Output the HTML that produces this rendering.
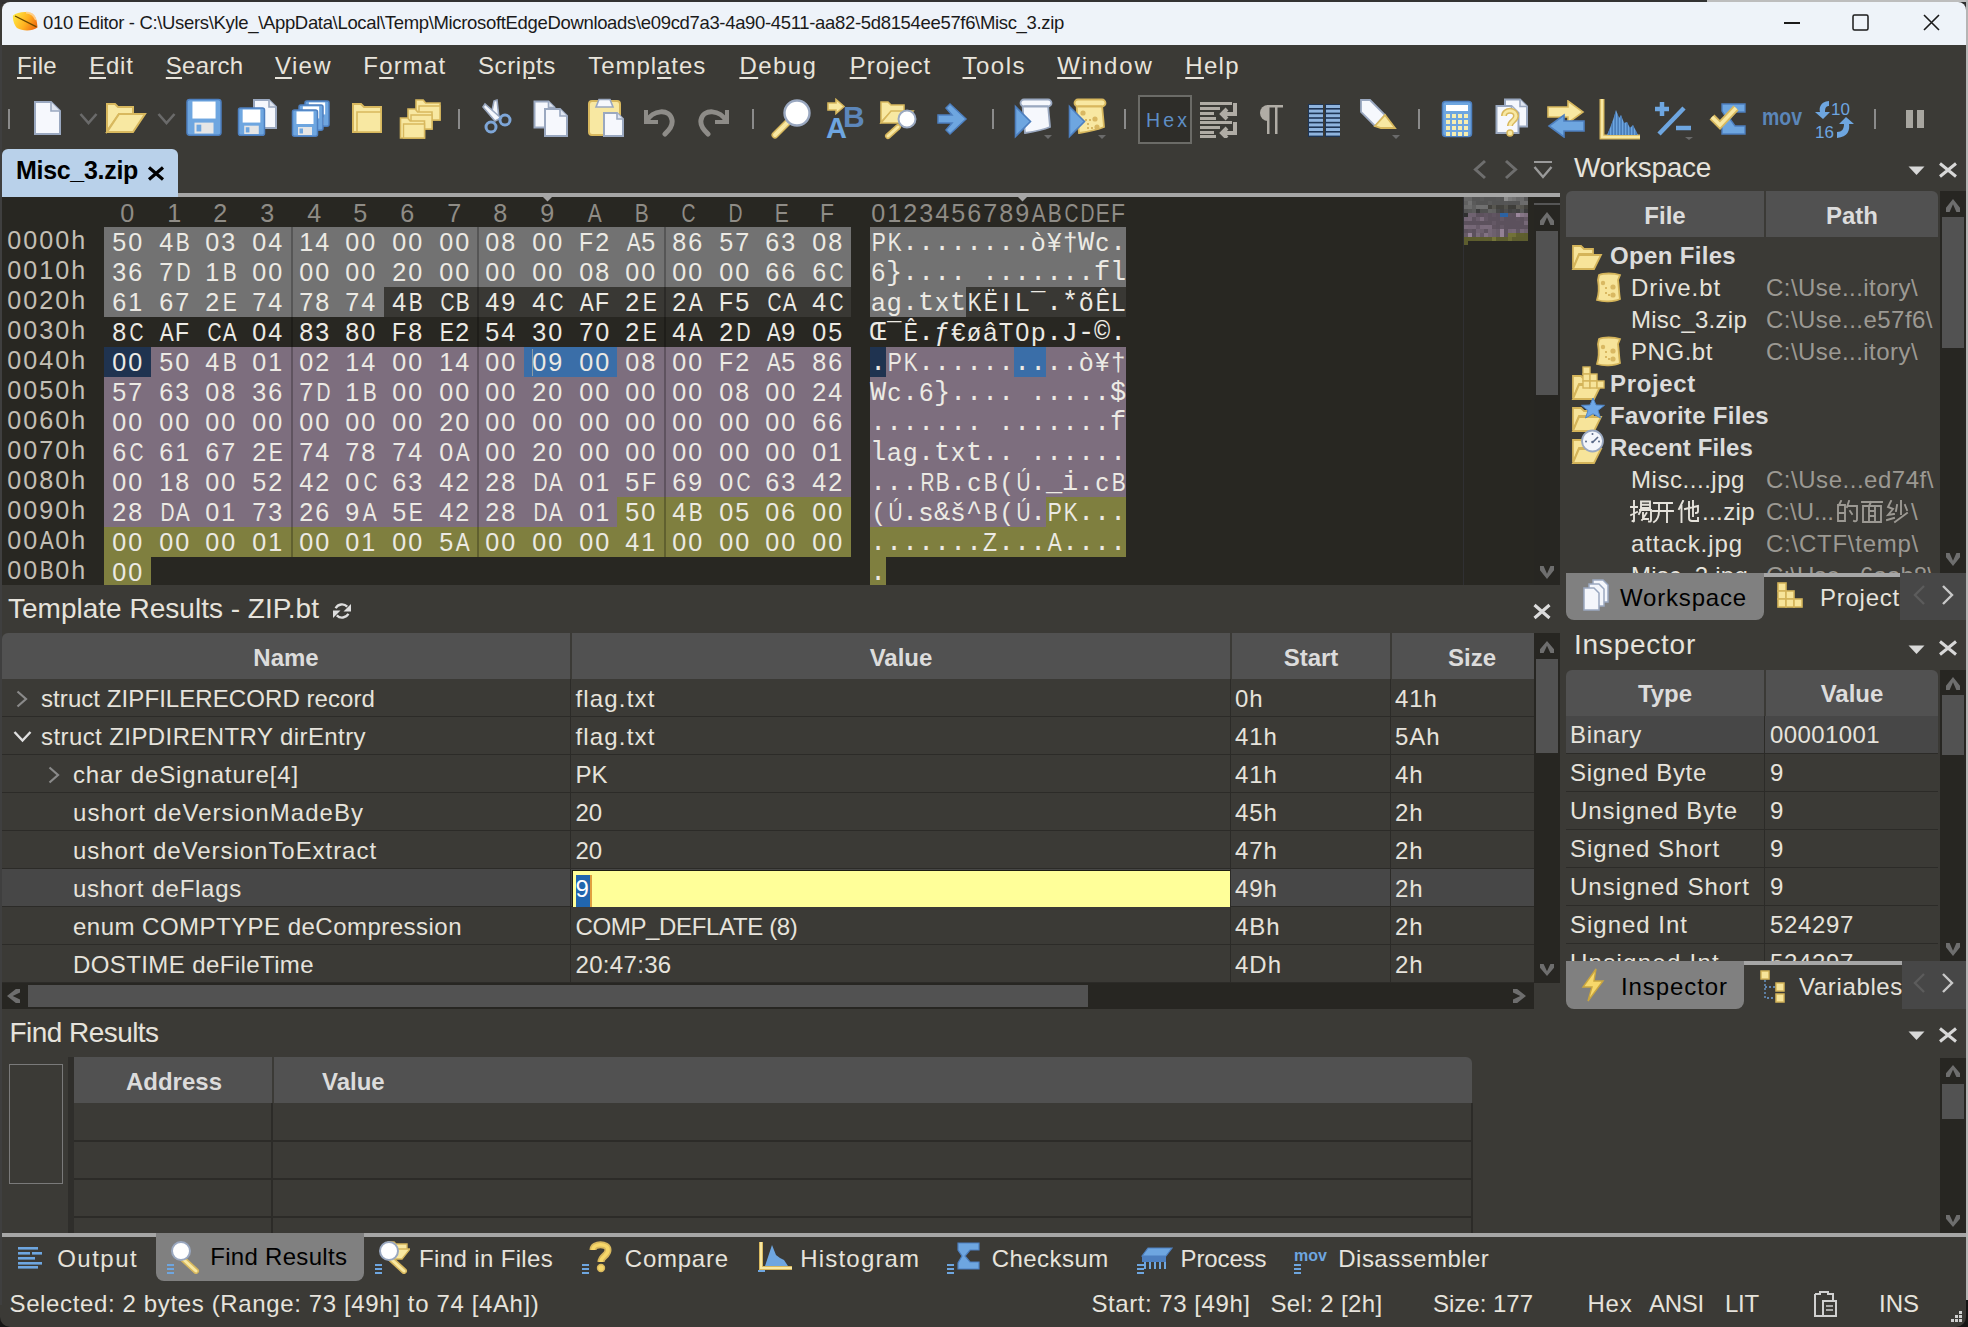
<!DOCTYPE html>
<html><head><meta charset="utf-8"><style>
html,body{margin:0;padding:0;}
body{width:1968px;height:1327px;position:relative;overflow:hidden;background:#2e2e2e;font-family:'Liberation Sans', sans-serif;}
u{text-decoration:underline;text-decoration-thickness:2px;text-underline-offset:3px;}
</style></head><body>
<div style="position:absolute;left:0px;top:0px;width:1707px;height:2px;background:#333333;"></div>
<div style="position:absolute;left:1707px;top:0px;width:261px;height:2px;background:#bdbdbd;"></div>
<div style="position:absolute;left:1966px;top:0px;width:2px;height:1327px;background:#b5b5b5;"></div>
<div style="position:absolute;left:0px;top:0px;width:2px;height:45px;background:#333333;"></div>
<div style="position:absolute;left:0px;top:1290px;width:30px;height:37px;background:#151515;"></div>
<div style="position:absolute;left:1940px;top:1300px;width:28px;height:27px;background:#151515;"></div>
<div style="position:absolute;left:0px;top:2px;width:1966px;height:1325px;background:#3b3a36;border-radius:8px 8px 10px 10px;"></div>
<div style="position:absolute;left:0px;top:45px;width:2px;height:1260px;background:#3f3f3f;"></div>
<div style="position:absolute;left:2px;top:2px;width:1964px;height:43px;background:#eef3f9;border-radius:8px 8px 0 0;"></div>
<svg style="position:absolute;left:12px;top:11px;" width="27" height="22" viewBox="0 0 27 22"><defs><linearGradient id="lg1" x1="0" y1="0.3" x2="1" y2="0.7"><stop offset="0" stop-color="#ffe640"/><stop offset="0.55" stop-color="#ffb020"/><stop offset="1" stop-color="#f06a10"/></linearGradient></defs><path d="M1,4.5 C5,1 15,0 20,2.5 C24,5 25,10 25.5,16.5 C20,20.5 10,20 5,17 C2,14 0.5,8 1,4.5 Z" fill="url(#lg1)"/><path d="M14,1.5 C18,1.5 22,4 24,9" stroke="#ffd8a0" stroke-width="2" fill="none" opacity="0.8"/><path d="M3,5 L24.5,15.8" stroke="#6a4800" stroke-width="1.3"/></svg>
<div id="t0" style="position:absolute;left:43.00px;top:13.78px;font:400 18.5px/1 'Liberation Sans', sans-serif;color:#1a1a1a;white-space:pre;letter-spacing:-0.333px;">010 Editor - C:\Users\Kyle_\AppData\Local\Temp\MicrosoftEdgeDownloads\e09cd7a3-4a90-4511-aa82-5d8154ee57f6\Misc_3.zip</div>
<div style="position:absolute;left:1784px;top:22px;width:16px;height:1.5px;background:#1a1a1a;"></div>
<svg style="position:absolute;left:1852px;top:14px;" width="17" height="17" viewBox="0 0 17 17"><rect x="1" y="1" width="15" height="15" rx="1.5" fill="none" stroke="#1a1a1a" stroke-width="1.5"/></svg>
<svg style="position:absolute;left:1923px;top:14px;" width="17" height="17" viewBox="0 0 17 17"><path d="M1,1 L16,16 M16,1 L1,16" stroke="#1a1a1a" stroke-width="1.6"/></svg>
<div id="t1" style="position:absolute;left:17.00px;top:53.60px;font:400 24px/1 'Liberation Sans', sans-serif;color:#e8e4dc;white-space:pre;letter-spacing:0.328px;"><u>F</u>ile</div>
<div id="t2" style="position:absolute;left:89.20px;top:53.60px;font:400 24px/1 'Liberation Sans', sans-serif;color:#e8e4dc;white-space:pre;letter-spacing:0.781px;"><u>E</u>dit</div>
<div id="t3" style="position:absolute;left:165.80px;top:53.60px;font:400 24px/1 'Liberation Sans', sans-serif;color:#e8e4dc;white-space:pre;letter-spacing:0.240px;"><u>S</u>earch</div>
<div id="t4" style="position:absolute;left:275.00px;top:53.60px;font:400 24px/1 'Liberation Sans', sans-serif;color:#e8e4dc;white-space:pre;letter-spacing:1.352px;"><u>V</u>iew</div>
<div id="t5" style="position:absolute;left:363.30px;top:53.60px;font:400 24px/1 'Liberation Sans', sans-serif;color:#e8e4dc;white-space:pre;letter-spacing:1.161px;">F<u>o</u>rmat</div>
<div id="t6" style="position:absolute;left:477.90px;top:53.60px;font:400 24px/1 'Liberation Sans', sans-serif;color:#e8e4dc;white-space:pre;letter-spacing:0.661px;">Scri<u>p</u>ts</div>
<div id="t7" style="position:absolute;left:588.20px;top:53.60px;font:400 24px/1 'Liberation Sans', sans-serif;color:#e8e4dc;white-space:pre;letter-spacing:0.955px;">Templ<u>a</u>tes</div>
<div id="t8" style="position:absolute;left:739.40px;top:53.60px;font:400 24px/1 'Liberation Sans', sans-serif;color:#e8e4dc;white-space:pre;letter-spacing:1.453px;"><u>D</u>ebug</div>
<div id="t9" style="position:absolute;left:849.70px;top:53.60px;font:400 24px/1 'Liberation Sans', sans-serif;color:#e8e4dc;white-space:pre;letter-spacing:0.971px;"><u>P</u>roject</div>
<div id="t10" style="position:absolute;left:962.50px;top:53.60px;font:400 24px/1 'Liberation Sans', sans-serif;color:#e8e4dc;white-space:pre;letter-spacing:1.494px;"><u>T</u>ools</div>
<div id="t11" style="position:absolute;left:1057.20px;top:53.60px;font:400 24px/1 'Liberation Sans', sans-serif;color:#e8e4dc;white-space:pre;letter-spacing:1.854px;"><u>W</u>indow</div>
<div id="t12" style="position:absolute;left:1185.30px;top:53.60px;font:400 24px/1 'Liberation Sans', sans-serif;color:#e8e4dc;white-space:pre;letter-spacing:1.281px;"><u>H</u>elp</div>
<div style="position:absolute;left:178px;top:193px;width:1382px;height:4px;background:#a6a6a6;"></div>
<div style="position:absolute;left:2px;top:149px;width:176px;height:48px;background:#b9d1ea;border-radius:6px 6px 0 0;"></div>
<div id="t13" style="position:absolute;left:16.00px;top:158.35px;font:700 25px/1 'Liberation Sans', sans-serif;color:#000;white-space:pre;letter-spacing:-0.306px;">Misc_3.zip</div>
<svg style="position:absolute;left:147px;top:166px;" width="18" height="15" viewBox="0 0 18 15"><path d="M2,1.5 L16,13.5 M16,1.5 L2,13.5" stroke="#000" stroke-width="3.2"/></svg>
<svg style="position:absolute;left:1472px;top:159px;" width="16" height="21" viewBox="0 0 16 21"><path d="M13,2 L3.5,10.5 L13,19" fill="none" stroke="#6e6e6e" stroke-width="3"/></svg>
<svg style="position:absolute;left:1503px;top:159px;" width="16" height="21" viewBox="0 0 16 21"><path d="M3,2 L12.5,10.5 L3,19" fill="none" stroke="#6e6e6e" stroke-width="3"/></svg>
<svg style="position:absolute;left:1533px;top:159px;" width="20" height="22" viewBox="0 0 20 22"><path d="M1,3 H19" stroke="#9a9a9a" stroke-width="2"/><path d="M1.5,8 L10,18 L18.5,8" fill="none" stroke="#9a9a9a" stroke-width="2.4"/></svg>
<div style="position:absolute;left:2px;top:197px;width:1532px;height:388px;background:#282722;"></div>
<div style="position:absolute;left:1534px;top:197px;width:26px;height:388px;background:#272622;"></div>
<div style="position:absolute;left:104px;top:227px;width:747px;height:30px;background:#727272;"></div>
<div style="position:absolute;left:870px;top:227px;width:256px;height:30px;background:#727272;"></div>
<div style="position:absolute;left:104px;top:257px;width:747px;height:30px;background:#727272;"></div>
<div style="position:absolute;left:870px;top:257px;width:256px;height:30px;background:#727272;"></div>
<div style="position:absolute;left:104px;top:287px;width:280px;height:30px;background:#727272;"></div>
<div style="position:absolute;left:870px;top:287px;width:96px;height:30px;background:#727272;"></div>
<div style="position:absolute;left:384px;top:287px;width:467px;height:30px;background:#393834;"></div>
<div style="position:absolute;left:966px;top:287px;width:160px;height:30px;background:#393834;"></div>
<div style="position:absolute;left:104px;top:347px;width:47px;height:30px;background:#1f3350;"></div>
<div style="position:absolute;left:870px;top:347px;width:16px;height:30px;background:#1f3350;"></div>
<div style="position:absolute;left:151px;top:347px;width:373px;height:30px;background:#7d6e7e;"></div>
<div style="position:absolute;left:886px;top:347px;width:128px;height:30px;background:#7d6e7e;"></div>
<div style="position:absolute;left:524px;top:347px;width:93px;height:30px;background:#3a6ea8;"></div>
<div style="position:absolute;left:1014px;top:347px;width:32px;height:30px;background:#3a6ea8;"></div>
<div style="position:absolute;left:617px;top:347px;width:234px;height:30px;background:#7d6e7e;"></div>
<div style="position:absolute;left:1046px;top:347px;width:80px;height:30px;background:#7d6e7e;"></div>
<div style="position:absolute;left:104px;top:377px;width:747px;height:30px;background:#7d6e7e;"></div>
<div style="position:absolute;left:870px;top:377px;width:256px;height:30px;background:#7d6e7e;"></div>
<div style="position:absolute;left:104px;top:407px;width:747px;height:30px;background:#7d6e7e;"></div>
<div style="position:absolute;left:870px;top:407px;width:256px;height:30px;background:#7d6e7e;"></div>
<div style="position:absolute;left:104px;top:437px;width:747px;height:30px;background:#7d6e7e;"></div>
<div style="position:absolute;left:870px;top:437px;width:256px;height:30px;background:#7d6e7e;"></div>
<div style="position:absolute;left:104px;top:467px;width:747px;height:30px;background:#7d6e7e;"></div>
<div style="position:absolute;left:870px;top:467px;width:256px;height:30px;background:#7d6e7e;"></div>
<div style="position:absolute;left:104px;top:497px;width:513px;height:30px;background:#7d6e7e;"></div>
<div style="position:absolute;left:870px;top:497px;width:176px;height:30px;background:#7d6e7e;"></div>
<div style="position:absolute;left:617px;top:497px;width:234px;height:30px;background:#7f7f3f;"></div>
<div style="position:absolute;left:1046px;top:497px;width:80px;height:30px;background:#7f7f3f;"></div>
<div style="position:absolute;left:104px;top:527px;width:747px;height:30px;background:#7f7f3f;"></div>
<div style="position:absolute;left:870px;top:527px;width:256px;height:30px;background:#7f7f3f;"></div>
<div style="position:absolute;left:104px;top:557px;width:47px;height:28px;background:#7f7f3f;"></div>
<div style="position:absolute;left:870px;top:557px;width:16px;height:28px;background:#7f7f3f;"></div>
<div style="position:absolute;left:290.5px;top:227px;width:2px;height:330px;background:rgba(0,0,0,0.24);"></div>
<div style="position:absolute;left:476.5px;top:227px;width:2px;height:330px;background:rgba(0,0,0,0.24);"></div>
<div style="position:absolute;left:663.5px;top:227px;width:2px;height:330px;background:rgba(0,0,0,0.24);"></div>
<div style="position:absolute;left:532px;top:349px;width:1.3px;height:27px;background:#8d9ba3;"></div>
<div style="position:absolute;left:119.33px;top:199.90px;font:400 26px/1 'Liberation Sans', sans-serif;color:#8f8c86;white-space:pre"><span style="display:inline-block;width:16px;text-align:center"><span style="display:inline-block;transform:scaleX(0.968)">0</span></span></div>
<div style="position:absolute;left:166.00px;top:199.90px;font:400 26px/1 'Liberation Sans', sans-serif;color:#8f8c86;white-space:pre"><span style="display:inline-block;width:16px;text-align:center"><span style="display:inline-block;transform:scaleX(0.968)">1</span></span></div>
<div style="position:absolute;left:212.67px;top:199.90px;font:400 26px/1 'Liberation Sans', sans-serif;color:#8f8c86;white-space:pre"><span style="display:inline-block;width:16px;text-align:center"><span style="display:inline-block;transform:scaleX(0.968)">2</span></span></div>
<div style="position:absolute;left:259.34px;top:199.90px;font:400 26px/1 'Liberation Sans', sans-serif;color:#8f8c86;white-space:pre"><span style="display:inline-block;width:16px;text-align:center"><span style="display:inline-block;transform:scaleX(0.968)">3</span></span></div>
<div style="position:absolute;left:306.01px;top:199.90px;font:400 26px/1 'Liberation Sans', sans-serif;color:#8f8c86;white-space:pre"><span style="display:inline-block;width:16px;text-align:center"><span style="display:inline-block;transform:scaleX(0.968)">4</span></span></div>
<div style="position:absolute;left:352.68px;top:199.90px;font:400 26px/1 'Liberation Sans', sans-serif;color:#8f8c86;white-space:pre"><span style="display:inline-block;width:16px;text-align:center"><span style="display:inline-block;transform:scaleX(0.968)">5</span></span></div>
<div style="position:absolute;left:399.35px;top:199.90px;font:400 26px/1 'Liberation Sans', sans-serif;color:#8f8c86;white-space:pre"><span style="display:inline-block;width:16px;text-align:center"><span style="display:inline-block;transform:scaleX(0.968)">6</span></span></div>
<div style="position:absolute;left:446.02px;top:199.90px;font:400 26px/1 'Liberation Sans', sans-serif;color:#8f8c86;white-space:pre"><span style="display:inline-block;width:16px;text-align:center"><span style="display:inline-block;transform:scaleX(0.968)">7</span></span></div>
<div style="position:absolute;left:492.69px;top:199.90px;font:400 26px/1 'Liberation Sans', sans-serif;color:#8f8c86;white-space:pre"><span style="display:inline-block;width:16px;text-align:center"><span style="display:inline-block;transform:scaleX(0.968)">8</span></span></div>
<div style="position:absolute;left:539.36px;top:199.90px;font:400 26px/1 'Liberation Sans', sans-serif;color:#8f8c86;white-space:pre"><span style="display:inline-block;width:16px;text-align:center"><span style="display:inline-block;transform:scaleX(0.968)">9</span></span></div>
<div style="position:absolute;left:586.03px;top:199.90px;font:400 26px/1 'Liberation Sans', sans-serif;color:#8f8c86;white-space:pre"><span style="display:inline-block;width:16px;text-align:center"><span style="display:inline-block;transform:scaleX(0.807)">A</span></span></div>
<div style="position:absolute;left:632.70px;top:199.90px;font:400 26px/1 'Liberation Sans', sans-serif;color:#8f8c86;white-space:pre"><span style="display:inline-block;width:16px;text-align:center"><span style="display:inline-block;transform:scaleX(0.807)">B</span></span></div>
<div style="position:absolute;left:679.37px;top:199.90px;font:400 26px/1 'Liberation Sans', sans-serif;color:#8f8c86;white-space:pre"><span style="display:inline-block;width:16px;text-align:center"><span style="display:inline-block;transform:scaleX(0.745)">C</span></span></div>
<div style="position:absolute;left:726.04px;top:199.90px;font:400 26px/1 'Liberation Sans', sans-serif;color:#8f8c86;white-space:pre"><span style="display:inline-block;width:16px;text-align:center"><span style="display:inline-block;transform:scaleX(0.745)">D</span></span></div>
<div style="position:absolute;left:772.71px;top:199.90px;font:400 26px/1 'Liberation Sans', sans-serif;color:#8f8c86;white-space:pre"><span style="display:inline-block;width:16px;text-align:center"><span style="display:inline-block;transform:scaleX(0.807)">E</span></span></div>
<div style="position:absolute;left:819.38px;top:199.90px;font:400 26px/1 'Liberation Sans', sans-serif;color:#8f8c86;white-space:pre"><span style="display:inline-block;width:16px;text-align:center"><span style="display:inline-block;transform:scaleX(0.881)">F</span></span></div>
<div style="position:absolute;left:870.00px;top:199.90px;font:400 26px/1 'Liberation Sans', sans-serif;color:#8f8c86;white-space:pre"><span style="display:inline-block;width:16px;text-align:center"><span style="display:inline-block;transform:scaleX(0.968)">0</span></span><span style="display:inline-block;width:16px;text-align:center"><span style="display:inline-block;transform:scaleX(0.968)">1</span></span><span style="display:inline-block;width:16px;text-align:center"><span style="display:inline-block;transform:scaleX(0.968)">2</span></span><span style="display:inline-block;width:16px;text-align:center"><span style="display:inline-block;transform:scaleX(0.968)">3</span></span><span style="display:inline-block;width:16px;text-align:center"><span style="display:inline-block;transform:scaleX(0.968)">4</span></span><span style="display:inline-block;width:16px;text-align:center"><span style="display:inline-block;transform:scaleX(0.968)">5</span></span><span style="display:inline-block;width:16px;text-align:center"><span style="display:inline-block;transform:scaleX(0.968)">6</span></span><span style="display:inline-block;width:16px;text-align:center"><span style="display:inline-block;transform:scaleX(0.968)">7</span></span><span style="display:inline-block;width:16px;text-align:center"><span style="display:inline-block;transform:scaleX(0.968)">8</span></span><span style="display:inline-block;width:16px;text-align:center"><span style="display:inline-block;transform:scaleX(0.968)">9</span></span><span style="display:inline-block;width:16px;text-align:center"><span style="display:inline-block;transform:scaleX(0.807)">A</span></span><span style="display:inline-block;width:16px;text-align:center"><span style="display:inline-block;transform:scaleX(0.807)">B</span></span><span style="display:inline-block;width:16px;text-align:center"><span style="display:inline-block;transform:scaleX(0.745)">C</span></span><span style="display:inline-block;width:16px;text-align:center"><span style="display:inline-block;transform:scaleX(0.745)">D</span></span><span style="display:inline-block;width:16px;text-align:center"><span style="display:inline-block;transform:scaleX(0.807)">E</span></span><span style="display:inline-block;width:16px;text-align:center"><span style="display:inline-block;transform:scaleX(0.881)">F</span></span></div>
<svg style="position:absolute;left:542px;top:196px;" width="11" height="6" viewBox="0 0 11 6"><path d="M0,0 H11 L5.5,5.5 Z" fill="#a6a6a6"/></svg>
<svg style="position:absolute;left:1016.5px;top:196px;" width="11" height="6" viewBox="0 0 11 6"><path d="M0,0 H11 L5.5,5.5 Z" fill="#a6a6a6"/></svg>
<div style="position:absolute;left:6.20px;top:226.90px;font:400 26px/1 'Liberation Sans', sans-serif;color:#c3bfb5;white-space:pre"><span style="display:inline-block;width:16px;text-align:center"><span style="display:inline-block;transform:scaleX(0.968)">0</span></span><span style="display:inline-block;width:16px;text-align:center"><span style="display:inline-block;transform:scaleX(0.968)">0</span></span><span style="display:inline-block;width:16px;text-align:center"><span style="display:inline-block;transform:scaleX(0.968)">0</span></span><span style="display:inline-block;width:16px;text-align:center"><span style="display:inline-block;transform:scaleX(0.968)">0</span></span><span style="display:inline-block;width:16px;text-align:center"><span style="display:inline-block;transform:scaleX(0.968)">h</span></span></div>
<div style="position:absolute;left:111.30px;top:228.90px;font:400 26px/1 'Liberation Sans', sans-serif;color:#eceae4;white-space:pre"><span style="display:inline-block;width:16px;text-align:center"><span style="display:inline-block;transform:scaleX(0.968)">5</span></span><span style="display:inline-block;width:16px;text-align:center"><span style="display:inline-block;transform:scaleX(0.968)">0</span></span></div>
<div style="position:absolute;left:157.97px;top:228.90px;font:400 26px/1 'Liberation Sans', sans-serif;color:#eceae4;white-space:pre"><span style="display:inline-block;width:16px;text-align:center"><span style="display:inline-block;transform:scaleX(0.968)">4</span></span><span style="display:inline-block;width:16px;text-align:center"><span style="display:inline-block;transform:scaleX(0.807)">B</span></span></div>
<div style="position:absolute;left:204.64px;top:228.90px;font:400 26px/1 'Liberation Sans', sans-serif;color:#eceae4;white-space:pre"><span style="display:inline-block;width:16px;text-align:center"><span style="display:inline-block;transform:scaleX(0.968)">0</span></span><span style="display:inline-block;width:16px;text-align:center"><span style="display:inline-block;transform:scaleX(0.968)">3</span></span></div>
<div style="position:absolute;left:251.31px;top:228.90px;font:400 26px/1 'Liberation Sans', sans-serif;color:#eceae4;white-space:pre"><span style="display:inline-block;width:16px;text-align:center"><span style="display:inline-block;transform:scaleX(0.968)">0</span></span><span style="display:inline-block;width:16px;text-align:center"><span style="display:inline-block;transform:scaleX(0.968)">4</span></span></div>
<div style="position:absolute;left:297.98px;top:228.90px;font:400 26px/1 'Liberation Sans', sans-serif;color:#eceae4;white-space:pre"><span style="display:inline-block;width:16px;text-align:center"><span style="display:inline-block;transform:scaleX(0.968)">1</span></span><span style="display:inline-block;width:16px;text-align:center"><span style="display:inline-block;transform:scaleX(0.968)">4</span></span></div>
<div style="position:absolute;left:344.65px;top:228.90px;font:400 26px/1 'Liberation Sans', sans-serif;color:#eceae4;white-space:pre"><span style="display:inline-block;width:16px;text-align:center"><span style="display:inline-block;transform:scaleX(0.968)">0</span></span><span style="display:inline-block;width:16px;text-align:center"><span style="display:inline-block;transform:scaleX(0.968)">0</span></span></div>
<div style="position:absolute;left:391.32px;top:228.90px;font:400 26px/1 'Liberation Sans', sans-serif;color:#eceae4;white-space:pre"><span style="display:inline-block;width:16px;text-align:center"><span style="display:inline-block;transform:scaleX(0.968)">0</span></span><span style="display:inline-block;width:16px;text-align:center"><span style="display:inline-block;transform:scaleX(0.968)">0</span></span></div>
<div style="position:absolute;left:437.99px;top:228.90px;font:400 26px/1 'Liberation Sans', sans-serif;color:#eceae4;white-space:pre"><span style="display:inline-block;width:16px;text-align:center"><span style="display:inline-block;transform:scaleX(0.968)">0</span></span><span style="display:inline-block;width:16px;text-align:center"><span style="display:inline-block;transform:scaleX(0.968)">0</span></span></div>
<div style="position:absolute;left:484.66px;top:228.90px;font:400 26px/1 'Liberation Sans', sans-serif;color:#eceae4;white-space:pre"><span style="display:inline-block;width:16px;text-align:center"><span style="display:inline-block;transform:scaleX(0.968)">0</span></span><span style="display:inline-block;width:16px;text-align:center"><span style="display:inline-block;transform:scaleX(0.968)">8</span></span></div>
<div style="position:absolute;left:531.33px;top:228.90px;font:400 26px/1 'Liberation Sans', sans-serif;color:#eceae4;white-space:pre"><span style="display:inline-block;width:16px;text-align:center"><span style="display:inline-block;transform:scaleX(0.968)">0</span></span><span style="display:inline-block;width:16px;text-align:center"><span style="display:inline-block;transform:scaleX(0.968)">0</span></span></div>
<div style="position:absolute;left:578.00px;top:228.90px;font:400 26px/1 'Liberation Sans', sans-serif;color:#eceae4;white-space:pre"><span style="display:inline-block;width:16px;text-align:center"><span style="display:inline-block;transform:scaleX(0.881)">F</span></span><span style="display:inline-block;width:16px;text-align:center"><span style="display:inline-block;transform:scaleX(0.968)">2</span></span></div>
<div style="position:absolute;left:624.67px;top:228.90px;font:400 26px/1 'Liberation Sans', sans-serif;color:#eceae4;white-space:pre"><span style="display:inline-block;width:16px;text-align:center"><span style="display:inline-block;transform:scaleX(0.807)">A</span></span><span style="display:inline-block;width:16px;text-align:center"><span style="display:inline-block;transform:scaleX(0.968)">5</span></span></div>
<div style="position:absolute;left:671.34px;top:228.90px;font:400 26px/1 'Liberation Sans', sans-serif;color:#eceae4;white-space:pre"><span style="display:inline-block;width:16px;text-align:center"><span style="display:inline-block;transform:scaleX(0.968)">8</span></span><span style="display:inline-block;width:16px;text-align:center"><span style="display:inline-block;transform:scaleX(0.968)">6</span></span></div>
<div style="position:absolute;left:718.01px;top:228.90px;font:400 26px/1 'Liberation Sans', sans-serif;color:#eceae4;white-space:pre"><span style="display:inline-block;width:16px;text-align:center"><span style="display:inline-block;transform:scaleX(0.968)">5</span></span><span style="display:inline-block;width:16px;text-align:center"><span style="display:inline-block;transform:scaleX(0.968)">7</span></span></div>
<div style="position:absolute;left:764.68px;top:228.90px;font:400 26px/1 'Liberation Sans', sans-serif;color:#eceae4;white-space:pre"><span style="display:inline-block;width:16px;text-align:center"><span style="display:inline-block;transform:scaleX(0.968)">6</span></span><span style="display:inline-block;width:16px;text-align:center"><span style="display:inline-block;transform:scaleX(0.968)">3</span></span></div>
<div style="position:absolute;left:811.35px;top:228.90px;font:400 26px/1 'Liberation Sans', sans-serif;color:#eceae4;white-space:pre"><span style="display:inline-block;width:16px;text-align:center"><span style="display:inline-block;transform:scaleX(0.968)">0</span></span><span style="display:inline-block;width:16px;text-align:center"><span style="display:inline-block;transform:scaleX(0.968)">8</span></span></div>
<div style="position:absolute;left:870.00px;top:228.90px;font:400 26px/1 'Liberation Sans', sans-serif;color:#eceae4;white-space:pre"><span style="display:inline-block;width:16px;text-align:center"><span style="display:inline-block;transform:scaleX(0.807)">P</span></span><span style="display:inline-block;width:16px;text-align:center"><span style="display:inline-block;transform:scaleX(0.807)">K</span></span><span style="display:inline-block;width:16px;text-align:center;font:400 27px/1 'Liberation Mono', monospace;vertical-align:top;position:relative;top:1.58px">.</span><span style="display:inline-block;width:16px;text-align:center;font:400 27px/1 'Liberation Mono', monospace;vertical-align:top;position:relative;top:1.58px">.</span><span style="display:inline-block;width:16px;text-align:center;font:400 27px/1 'Liberation Mono', monospace;vertical-align:top;position:relative;top:1.58px">.</span><span style="display:inline-block;width:16px;text-align:center;font:400 27px/1 'Liberation Mono', monospace;vertical-align:top;position:relative;top:1.58px">.</span><span style="display:inline-block;width:16px;text-align:center;font:400 27px/1 'Liberation Mono', monospace;vertical-align:top;position:relative;top:1.58px">.</span><span style="display:inline-block;width:16px;text-align:center;font:400 27px/1 'Liberation Mono', monospace;vertical-align:top;position:relative;top:1.58px">.</span><span style="display:inline-block;width:16px;text-align:center;font:400 27px/1 'Liberation Mono', monospace;vertical-align:top;position:relative;top:1.58px">.</span><span style="display:inline-block;width:16px;text-align:center;font:400 27px/1 'Liberation Mono', monospace;vertical-align:top;position:relative;top:1.58px">.</span><span style="display:inline-block;width:16px;text-align:center"><span style="display:inline-block;transform:scaleX(0.968)">ò</span></span><span style="display:inline-block;width:16px;text-align:center"><span style="display:inline-block;transform:scaleX(0.968)">¥</span></span><span style="display:inline-block;width:16px;text-align:center"><span style="display:inline-block;transform:scaleX(0.968)">†</span></span><span style="display:inline-block;width:16px;text-align:center;font:400 27px/1 'Liberation Mono', monospace;vertical-align:top;position:relative;top:1.58px">W</span><span style="display:inline-block;width:16px;text-align:center">c</span><span style="display:inline-block;width:16px;text-align:center;font:400 27px/1 'Liberation Mono', monospace;vertical-align:top;position:relative;top:1.58px">.</span></div>
<div style="position:absolute;left:6.20px;top:256.90px;font:400 26px/1 'Liberation Sans', sans-serif;color:#c3bfb5;white-space:pre"><span style="display:inline-block;width:16px;text-align:center"><span style="display:inline-block;transform:scaleX(0.968)">0</span></span><span style="display:inline-block;width:16px;text-align:center"><span style="display:inline-block;transform:scaleX(0.968)">0</span></span><span style="display:inline-block;width:16px;text-align:center"><span style="display:inline-block;transform:scaleX(0.968)">1</span></span><span style="display:inline-block;width:16px;text-align:center"><span style="display:inline-block;transform:scaleX(0.968)">0</span></span><span style="display:inline-block;width:16px;text-align:center"><span style="display:inline-block;transform:scaleX(0.968)">h</span></span></div>
<div style="position:absolute;left:111.30px;top:258.90px;font:400 26px/1 'Liberation Sans', sans-serif;color:#eceae4;white-space:pre"><span style="display:inline-block;width:16px;text-align:center"><span style="display:inline-block;transform:scaleX(0.968)">3</span></span><span style="display:inline-block;width:16px;text-align:center"><span style="display:inline-block;transform:scaleX(0.968)">6</span></span></div>
<div style="position:absolute;left:157.97px;top:258.90px;font:400 26px/1 'Liberation Sans', sans-serif;color:#eceae4;white-space:pre"><span style="display:inline-block;width:16px;text-align:center"><span style="display:inline-block;transform:scaleX(0.968)">7</span></span><span style="display:inline-block;width:16px;text-align:center"><span style="display:inline-block;transform:scaleX(0.745)">D</span></span></div>
<div style="position:absolute;left:204.64px;top:258.90px;font:400 26px/1 'Liberation Sans', sans-serif;color:#eceae4;white-space:pre"><span style="display:inline-block;width:16px;text-align:center"><span style="display:inline-block;transform:scaleX(0.968)">1</span></span><span style="display:inline-block;width:16px;text-align:center"><span style="display:inline-block;transform:scaleX(0.807)">B</span></span></div>
<div style="position:absolute;left:251.31px;top:258.90px;font:400 26px/1 'Liberation Sans', sans-serif;color:#eceae4;white-space:pre"><span style="display:inline-block;width:16px;text-align:center"><span style="display:inline-block;transform:scaleX(0.968)">0</span></span><span style="display:inline-block;width:16px;text-align:center"><span style="display:inline-block;transform:scaleX(0.968)">0</span></span></div>
<div style="position:absolute;left:297.98px;top:258.90px;font:400 26px/1 'Liberation Sans', sans-serif;color:#eceae4;white-space:pre"><span style="display:inline-block;width:16px;text-align:center"><span style="display:inline-block;transform:scaleX(0.968)">0</span></span><span style="display:inline-block;width:16px;text-align:center"><span style="display:inline-block;transform:scaleX(0.968)">0</span></span></div>
<div style="position:absolute;left:344.65px;top:258.90px;font:400 26px/1 'Liberation Sans', sans-serif;color:#eceae4;white-space:pre"><span style="display:inline-block;width:16px;text-align:center"><span style="display:inline-block;transform:scaleX(0.968)">0</span></span><span style="display:inline-block;width:16px;text-align:center"><span style="display:inline-block;transform:scaleX(0.968)">0</span></span></div>
<div style="position:absolute;left:391.32px;top:258.90px;font:400 26px/1 'Liberation Sans', sans-serif;color:#eceae4;white-space:pre"><span style="display:inline-block;width:16px;text-align:center"><span style="display:inline-block;transform:scaleX(0.968)">2</span></span><span style="display:inline-block;width:16px;text-align:center"><span style="display:inline-block;transform:scaleX(0.968)">0</span></span></div>
<div style="position:absolute;left:437.99px;top:258.90px;font:400 26px/1 'Liberation Sans', sans-serif;color:#eceae4;white-space:pre"><span style="display:inline-block;width:16px;text-align:center"><span style="display:inline-block;transform:scaleX(0.968)">0</span></span><span style="display:inline-block;width:16px;text-align:center"><span style="display:inline-block;transform:scaleX(0.968)">0</span></span></div>
<div style="position:absolute;left:484.66px;top:258.90px;font:400 26px/1 'Liberation Sans', sans-serif;color:#eceae4;white-space:pre"><span style="display:inline-block;width:16px;text-align:center"><span style="display:inline-block;transform:scaleX(0.968)">0</span></span><span style="display:inline-block;width:16px;text-align:center"><span style="display:inline-block;transform:scaleX(0.968)">0</span></span></div>
<div style="position:absolute;left:531.33px;top:258.90px;font:400 26px/1 'Liberation Sans', sans-serif;color:#eceae4;white-space:pre"><span style="display:inline-block;width:16px;text-align:center"><span style="display:inline-block;transform:scaleX(0.968)">0</span></span><span style="display:inline-block;width:16px;text-align:center"><span style="display:inline-block;transform:scaleX(0.968)">0</span></span></div>
<div style="position:absolute;left:578.00px;top:258.90px;font:400 26px/1 'Liberation Sans', sans-serif;color:#eceae4;white-space:pre"><span style="display:inline-block;width:16px;text-align:center"><span style="display:inline-block;transform:scaleX(0.968)">0</span></span><span style="display:inline-block;width:16px;text-align:center"><span style="display:inline-block;transform:scaleX(0.968)">8</span></span></div>
<div style="position:absolute;left:624.67px;top:258.90px;font:400 26px/1 'Liberation Sans', sans-serif;color:#eceae4;white-space:pre"><span style="display:inline-block;width:16px;text-align:center"><span style="display:inline-block;transform:scaleX(0.968)">0</span></span><span style="display:inline-block;width:16px;text-align:center"><span style="display:inline-block;transform:scaleX(0.968)">0</span></span></div>
<div style="position:absolute;left:671.34px;top:258.90px;font:400 26px/1 'Liberation Sans', sans-serif;color:#eceae4;white-space:pre"><span style="display:inline-block;width:16px;text-align:center"><span style="display:inline-block;transform:scaleX(0.968)">0</span></span><span style="display:inline-block;width:16px;text-align:center"><span style="display:inline-block;transform:scaleX(0.968)">0</span></span></div>
<div style="position:absolute;left:718.01px;top:258.90px;font:400 26px/1 'Liberation Sans', sans-serif;color:#eceae4;white-space:pre"><span style="display:inline-block;width:16px;text-align:center"><span style="display:inline-block;transform:scaleX(0.968)">0</span></span><span style="display:inline-block;width:16px;text-align:center"><span style="display:inline-block;transform:scaleX(0.968)">0</span></span></div>
<div style="position:absolute;left:764.68px;top:258.90px;font:400 26px/1 'Liberation Sans', sans-serif;color:#eceae4;white-space:pre"><span style="display:inline-block;width:16px;text-align:center"><span style="display:inline-block;transform:scaleX(0.968)">6</span></span><span style="display:inline-block;width:16px;text-align:center"><span style="display:inline-block;transform:scaleX(0.968)">6</span></span></div>
<div style="position:absolute;left:811.35px;top:258.90px;font:400 26px/1 'Liberation Sans', sans-serif;color:#eceae4;white-space:pre"><span style="display:inline-block;width:16px;text-align:center"><span style="display:inline-block;transform:scaleX(0.968)">6</span></span><span style="display:inline-block;width:16px;text-align:center"><span style="display:inline-block;transform:scaleX(0.745)">C</span></span></div>
<div style="position:absolute;left:870.00px;top:258.90px;font:400 26px/1 'Liberation Sans', sans-serif;color:#eceae4;white-space:pre"><span style="display:inline-block;width:16px;text-align:center"><span style="display:inline-block;transform:scaleX(0.968)">6</span></span><span style="display:inline-block;width:16px;text-align:center;font:400 27px/1 'Liberation Mono', monospace;vertical-align:top;position:relative;top:1.58px">}</span><span style="display:inline-block;width:16px;text-align:center;font:400 27px/1 'Liberation Mono', monospace;vertical-align:top;position:relative;top:1.58px">.</span><span style="display:inline-block;width:16px;text-align:center;font:400 27px/1 'Liberation Mono', monospace;vertical-align:top;position:relative;top:1.58px">.</span><span style="display:inline-block;width:16px;text-align:center;font:400 27px/1 'Liberation Mono', monospace;vertical-align:top;position:relative;top:1.58px">.</span><span style="display:inline-block;width:16px;text-align:center;font:400 27px/1 'Liberation Mono', monospace;vertical-align:top;position:relative;top:1.58px">.</span><span style="display:inline-block;width:16px;text-align:center">&nbsp;</span><span style="display:inline-block;width:16px;text-align:center;font:400 27px/1 'Liberation Mono', monospace;vertical-align:top;position:relative;top:1.58px">.</span><span style="display:inline-block;width:16px;text-align:center;font:400 27px/1 'Liberation Mono', monospace;vertical-align:top;position:relative;top:1.58px">.</span><span style="display:inline-block;width:16px;text-align:center;font:400 27px/1 'Liberation Mono', monospace;vertical-align:top;position:relative;top:1.58px">.</span><span style="display:inline-block;width:16px;text-align:center;font:400 27px/1 'Liberation Mono', monospace;vertical-align:top;position:relative;top:1.58px">.</span><span style="display:inline-block;width:16px;text-align:center;font:400 27px/1 'Liberation Mono', monospace;vertical-align:top;position:relative;top:1.58px">.</span><span style="display:inline-block;width:16px;text-align:center;font:400 27px/1 'Liberation Mono', monospace;vertical-align:top;position:relative;top:1.58px">.</span><span style="display:inline-block;width:16px;text-align:center;font:400 27px/1 'Liberation Mono', monospace;vertical-align:top;position:relative;top:1.58px">.</span><span style="display:inline-block;width:16px;text-align:center;font:400 27px/1 'Liberation Mono', monospace;vertical-align:top;position:relative;top:1.58px">f</span><span style="display:inline-block;width:16px;text-align:center;font:400 27px/1 'Liberation Mono', monospace;vertical-align:top;position:relative;top:1.58px">l</span></div>
<div style="position:absolute;left:6.20px;top:286.90px;font:400 26px/1 'Liberation Sans', sans-serif;color:#c3bfb5;white-space:pre"><span style="display:inline-block;width:16px;text-align:center"><span style="display:inline-block;transform:scaleX(0.968)">0</span></span><span style="display:inline-block;width:16px;text-align:center"><span style="display:inline-block;transform:scaleX(0.968)">0</span></span><span style="display:inline-block;width:16px;text-align:center"><span style="display:inline-block;transform:scaleX(0.968)">2</span></span><span style="display:inline-block;width:16px;text-align:center"><span style="display:inline-block;transform:scaleX(0.968)">0</span></span><span style="display:inline-block;width:16px;text-align:center"><span style="display:inline-block;transform:scaleX(0.968)">h</span></span></div>
<div style="position:absolute;left:111.30px;top:288.90px;font:400 26px/1 'Liberation Sans', sans-serif;color:#eceae4;white-space:pre"><span style="display:inline-block;width:16px;text-align:center"><span style="display:inline-block;transform:scaleX(0.968)">6</span></span><span style="display:inline-block;width:16px;text-align:center"><span style="display:inline-block;transform:scaleX(0.968)">1</span></span></div>
<div style="position:absolute;left:157.97px;top:288.90px;font:400 26px/1 'Liberation Sans', sans-serif;color:#eceae4;white-space:pre"><span style="display:inline-block;width:16px;text-align:center"><span style="display:inline-block;transform:scaleX(0.968)">6</span></span><span style="display:inline-block;width:16px;text-align:center"><span style="display:inline-block;transform:scaleX(0.968)">7</span></span></div>
<div style="position:absolute;left:204.64px;top:288.90px;font:400 26px/1 'Liberation Sans', sans-serif;color:#eceae4;white-space:pre"><span style="display:inline-block;width:16px;text-align:center"><span style="display:inline-block;transform:scaleX(0.968)">2</span></span><span style="display:inline-block;width:16px;text-align:center"><span style="display:inline-block;transform:scaleX(0.807)">E</span></span></div>
<div style="position:absolute;left:251.31px;top:288.90px;font:400 26px/1 'Liberation Sans', sans-serif;color:#eceae4;white-space:pre"><span style="display:inline-block;width:16px;text-align:center"><span style="display:inline-block;transform:scaleX(0.968)">7</span></span><span style="display:inline-block;width:16px;text-align:center"><span style="display:inline-block;transform:scaleX(0.968)">4</span></span></div>
<div style="position:absolute;left:297.98px;top:288.90px;font:400 26px/1 'Liberation Sans', sans-serif;color:#eceae4;white-space:pre"><span style="display:inline-block;width:16px;text-align:center"><span style="display:inline-block;transform:scaleX(0.968)">7</span></span><span style="display:inline-block;width:16px;text-align:center"><span style="display:inline-block;transform:scaleX(0.968)">8</span></span></div>
<div style="position:absolute;left:344.65px;top:288.90px;font:400 26px/1 'Liberation Sans', sans-serif;color:#eceae4;white-space:pre"><span style="display:inline-block;width:16px;text-align:center"><span style="display:inline-block;transform:scaleX(0.968)">7</span></span><span style="display:inline-block;width:16px;text-align:center"><span style="display:inline-block;transform:scaleX(0.968)">4</span></span></div>
<div style="position:absolute;left:391.32px;top:288.90px;font:400 26px/1 'Liberation Sans', sans-serif;color:#eceae4;white-space:pre"><span style="display:inline-block;width:16px;text-align:center"><span style="display:inline-block;transform:scaleX(0.968)">4</span></span><span style="display:inline-block;width:16px;text-align:center"><span style="display:inline-block;transform:scaleX(0.807)">B</span></span></div>
<div style="position:absolute;left:437.99px;top:288.90px;font:400 26px/1 'Liberation Sans', sans-serif;color:#eceae4;white-space:pre"><span style="display:inline-block;width:16px;text-align:center"><span style="display:inline-block;transform:scaleX(0.745)">C</span></span><span style="display:inline-block;width:16px;text-align:center"><span style="display:inline-block;transform:scaleX(0.807)">B</span></span></div>
<div style="position:absolute;left:484.66px;top:288.90px;font:400 26px/1 'Liberation Sans', sans-serif;color:#eceae4;white-space:pre"><span style="display:inline-block;width:16px;text-align:center"><span style="display:inline-block;transform:scaleX(0.968)">4</span></span><span style="display:inline-block;width:16px;text-align:center"><span style="display:inline-block;transform:scaleX(0.968)">9</span></span></div>
<div style="position:absolute;left:531.33px;top:288.90px;font:400 26px/1 'Liberation Sans', sans-serif;color:#eceae4;white-space:pre"><span style="display:inline-block;width:16px;text-align:center"><span style="display:inline-block;transform:scaleX(0.968)">4</span></span><span style="display:inline-block;width:16px;text-align:center"><span style="display:inline-block;transform:scaleX(0.745)">C</span></span></div>
<div style="position:absolute;left:578.00px;top:288.90px;font:400 26px/1 'Liberation Sans', sans-serif;color:#eceae4;white-space:pre"><span style="display:inline-block;width:16px;text-align:center"><span style="display:inline-block;transform:scaleX(0.807)">A</span></span><span style="display:inline-block;width:16px;text-align:center"><span style="display:inline-block;transform:scaleX(0.881)">F</span></span></div>
<div style="position:absolute;left:624.67px;top:288.90px;font:400 26px/1 'Liberation Sans', sans-serif;color:#eceae4;white-space:pre"><span style="display:inline-block;width:16px;text-align:center"><span style="display:inline-block;transform:scaleX(0.968)">2</span></span><span style="display:inline-block;width:16px;text-align:center"><span style="display:inline-block;transform:scaleX(0.807)">E</span></span></div>
<div style="position:absolute;left:671.34px;top:288.90px;font:400 26px/1 'Liberation Sans', sans-serif;color:#eceae4;white-space:pre"><span style="display:inline-block;width:16px;text-align:center"><span style="display:inline-block;transform:scaleX(0.968)">2</span></span><span style="display:inline-block;width:16px;text-align:center"><span style="display:inline-block;transform:scaleX(0.807)">A</span></span></div>
<div style="position:absolute;left:718.01px;top:288.90px;font:400 26px/1 'Liberation Sans', sans-serif;color:#eceae4;white-space:pre"><span style="display:inline-block;width:16px;text-align:center"><span style="display:inline-block;transform:scaleX(0.881)">F</span></span><span style="display:inline-block;width:16px;text-align:center"><span style="display:inline-block;transform:scaleX(0.968)">5</span></span></div>
<div style="position:absolute;left:764.68px;top:288.90px;font:400 26px/1 'Liberation Sans', sans-serif;color:#eceae4;white-space:pre"><span style="display:inline-block;width:16px;text-align:center"><span style="display:inline-block;transform:scaleX(0.745)">C</span></span><span style="display:inline-block;width:16px;text-align:center"><span style="display:inline-block;transform:scaleX(0.807)">A</span></span></div>
<div style="position:absolute;left:811.35px;top:288.90px;font:400 26px/1 'Liberation Sans', sans-serif;color:#eceae4;white-space:pre"><span style="display:inline-block;width:16px;text-align:center"><span style="display:inline-block;transform:scaleX(0.968)">4</span></span><span style="display:inline-block;width:16px;text-align:center"><span style="display:inline-block;transform:scaleX(0.745)">C</span></span></div>
<div style="position:absolute;left:870.00px;top:288.90px;font:400 26px/1 'Liberation Sans', sans-serif;color:#eceae4;white-space:pre"><span style="display:inline-block;width:16px;text-align:center"><span style="display:inline-block;transform:scaleX(0.968)">a</span></span><span style="display:inline-block;width:16px;text-align:center"><span style="display:inline-block;transform:scaleX(0.968)">g</span></span><span style="display:inline-block;width:16px;text-align:center;font:400 27px/1 'Liberation Mono', monospace;vertical-align:top;position:relative;top:1.58px">.</span><span style="display:inline-block;width:16px;text-align:center;font:400 27px/1 'Liberation Mono', monospace;vertical-align:top;position:relative;top:1.58px">t</span><span style="display:inline-block;width:16px;text-align:center">x</span><span style="display:inline-block;width:16px;text-align:center;font:400 27px/1 'Liberation Mono', monospace;vertical-align:top;position:relative;top:1.58px">t</span><span style="display:inline-block;width:16px;text-align:center"><span style="display:inline-block;transform:scaleX(0.807)">K</span></span><span style="display:inline-block;width:16px;text-align:center"><span style="display:inline-block;transform:scaleX(0.807)">Ë</span></span><span style="display:inline-block;width:16px;text-align:center">I</span><span style="display:inline-block;width:16px;text-align:center"><span style="display:inline-block;transform:scaleX(0.968)">L</span></span><span style="display:inline-block;width:16px;text-align:center"><span style="display:inline-block;transform:scaleX(0.975)">¯</span></span><span style="display:inline-block;width:16px;text-align:center;font:400 27px/1 'Liberation Mono', monospace;vertical-align:top;position:relative;top:1.58px">.</span><span style="display:inline-block;width:16px;text-align:center;font:400 27px/1 'Liberation Mono', monospace;vertical-align:top;position:relative;top:1.58px">*</span><span style="display:inline-block;width:16px;text-align:center"><span style="display:inline-block;transform:scaleX(0.968)">õ</span></span><span style="display:inline-block;width:16px;text-align:center"><span style="display:inline-block;transform:scaleX(0.807)">Ê</span></span><span style="display:inline-block;width:16px;text-align:center"><span style="display:inline-block;transform:scaleX(0.968)">L</span></span></div>
<div style="position:absolute;left:6.20px;top:316.90px;font:400 26px/1 'Liberation Sans', sans-serif;color:#c3bfb5;white-space:pre"><span style="display:inline-block;width:16px;text-align:center"><span style="display:inline-block;transform:scaleX(0.968)">0</span></span><span style="display:inline-block;width:16px;text-align:center"><span style="display:inline-block;transform:scaleX(0.968)">0</span></span><span style="display:inline-block;width:16px;text-align:center"><span style="display:inline-block;transform:scaleX(0.968)">3</span></span><span style="display:inline-block;width:16px;text-align:center"><span style="display:inline-block;transform:scaleX(0.968)">0</span></span><span style="display:inline-block;width:16px;text-align:center"><span style="display:inline-block;transform:scaleX(0.968)">h</span></span></div>
<div style="position:absolute;left:111.30px;top:318.90px;font:400 26px/1 'Liberation Sans', sans-serif;color:#eceae4;white-space:pre"><span style="display:inline-block;width:16px;text-align:center"><span style="display:inline-block;transform:scaleX(0.968)">8</span></span><span style="display:inline-block;width:16px;text-align:center"><span style="display:inline-block;transform:scaleX(0.745)">C</span></span></div>
<div style="position:absolute;left:157.97px;top:318.90px;font:400 26px/1 'Liberation Sans', sans-serif;color:#eceae4;white-space:pre"><span style="display:inline-block;width:16px;text-align:center"><span style="display:inline-block;transform:scaleX(0.807)">A</span></span><span style="display:inline-block;width:16px;text-align:center"><span style="display:inline-block;transform:scaleX(0.881)">F</span></span></div>
<div style="position:absolute;left:204.64px;top:318.90px;font:400 26px/1 'Liberation Sans', sans-serif;color:#eceae4;white-space:pre"><span style="display:inline-block;width:16px;text-align:center"><span style="display:inline-block;transform:scaleX(0.745)">C</span></span><span style="display:inline-block;width:16px;text-align:center"><span style="display:inline-block;transform:scaleX(0.807)">A</span></span></div>
<div style="position:absolute;left:251.31px;top:318.90px;font:400 26px/1 'Liberation Sans', sans-serif;color:#eceae4;white-space:pre"><span style="display:inline-block;width:16px;text-align:center"><span style="display:inline-block;transform:scaleX(0.968)">0</span></span><span style="display:inline-block;width:16px;text-align:center"><span style="display:inline-block;transform:scaleX(0.968)">4</span></span></div>
<div style="position:absolute;left:297.98px;top:318.90px;font:400 26px/1 'Liberation Sans', sans-serif;color:#eceae4;white-space:pre"><span style="display:inline-block;width:16px;text-align:center"><span style="display:inline-block;transform:scaleX(0.968)">8</span></span><span style="display:inline-block;width:16px;text-align:center"><span style="display:inline-block;transform:scaleX(0.968)">3</span></span></div>
<div style="position:absolute;left:344.65px;top:318.90px;font:400 26px/1 'Liberation Sans', sans-serif;color:#eceae4;white-space:pre"><span style="display:inline-block;width:16px;text-align:center"><span style="display:inline-block;transform:scaleX(0.968)">8</span></span><span style="display:inline-block;width:16px;text-align:center"><span style="display:inline-block;transform:scaleX(0.968)">0</span></span></div>
<div style="position:absolute;left:391.32px;top:318.90px;font:400 26px/1 'Liberation Sans', sans-serif;color:#eceae4;white-space:pre"><span style="display:inline-block;width:16px;text-align:center"><span style="display:inline-block;transform:scaleX(0.881)">F</span></span><span style="display:inline-block;width:16px;text-align:center"><span style="display:inline-block;transform:scaleX(0.968)">8</span></span></div>
<div style="position:absolute;left:437.99px;top:318.90px;font:400 26px/1 'Liberation Sans', sans-serif;color:#eceae4;white-space:pre"><span style="display:inline-block;width:16px;text-align:center"><span style="display:inline-block;transform:scaleX(0.807)">E</span></span><span style="display:inline-block;width:16px;text-align:center"><span style="display:inline-block;transform:scaleX(0.968)">2</span></span></div>
<div style="position:absolute;left:484.66px;top:318.90px;font:400 26px/1 'Liberation Sans', sans-serif;color:#eceae4;white-space:pre"><span style="display:inline-block;width:16px;text-align:center"><span style="display:inline-block;transform:scaleX(0.968)">5</span></span><span style="display:inline-block;width:16px;text-align:center"><span style="display:inline-block;transform:scaleX(0.968)">4</span></span></div>
<div style="position:absolute;left:531.33px;top:318.90px;font:400 26px/1 'Liberation Sans', sans-serif;color:#eceae4;white-space:pre"><span style="display:inline-block;width:16px;text-align:center"><span style="display:inline-block;transform:scaleX(0.968)">3</span></span><span style="display:inline-block;width:16px;text-align:center"><span style="display:inline-block;transform:scaleX(0.968)">0</span></span></div>
<div style="position:absolute;left:578.00px;top:318.90px;font:400 26px/1 'Liberation Sans', sans-serif;color:#eceae4;white-space:pre"><span style="display:inline-block;width:16px;text-align:center"><span style="display:inline-block;transform:scaleX(0.968)">7</span></span><span style="display:inline-block;width:16px;text-align:center"><span style="display:inline-block;transform:scaleX(0.968)">0</span></span></div>
<div style="position:absolute;left:624.67px;top:318.90px;font:400 26px/1 'Liberation Sans', sans-serif;color:#eceae4;white-space:pre"><span style="display:inline-block;width:16px;text-align:center"><span style="display:inline-block;transform:scaleX(0.968)">2</span></span><span style="display:inline-block;width:16px;text-align:center"><span style="display:inline-block;transform:scaleX(0.807)">E</span></span></div>
<div style="position:absolute;left:671.34px;top:318.90px;font:400 26px/1 'Liberation Sans', sans-serif;color:#eceae4;white-space:pre"><span style="display:inline-block;width:16px;text-align:center"><span style="display:inline-block;transform:scaleX(0.968)">4</span></span><span style="display:inline-block;width:16px;text-align:center"><span style="display:inline-block;transform:scaleX(0.807)">A</span></span></div>
<div style="position:absolute;left:718.01px;top:318.90px;font:400 26px/1 'Liberation Sans', sans-serif;color:#eceae4;white-space:pre"><span style="display:inline-block;width:16px;text-align:center"><span style="display:inline-block;transform:scaleX(0.968)">2</span></span><span style="display:inline-block;width:16px;text-align:center"><span style="display:inline-block;transform:scaleX(0.745)">D</span></span></div>
<div style="position:absolute;left:764.68px;top:318.90px;font:400 26px/1 'Liberation Sans', sans-serif;color:#eceae4;white-space:pre"><span style="display:inline-block;width:16px;text-align:center"><span style="display:inline-block;transform:scaleX(0.807)">A</span></span><span style="display:inline-block;width:16px;text-align:center"><span style="display:inline-block;transform:scaleX(0.968)">9</span></span></div>
<div style="position:absolute;left:811.35px;top:318.90px;font:400 26px/1 'Liberation Sans', sans-serif;color:#eceae4;white-space:pre"><span style="display:inline-block;width:16px;text-align:center"><span style="display:inline-block;transform:scaleX(0.968)">0</span></span><span style="display:inline-block;width:16px;text-align:center"><span style="display:inline-block;transform:scaleX(0.968)">5</span></span></div>
<div style="position:absolute;left:870.00px;top:318.90px;font:400 26px/1 'Liberation Sans', sans-serif;color:#eceae4;white-space:pre"><span style="display:inline-block;width:16px;text-align:center;font:400 27px/1 'Liberation Mono', monospace;vertical-align:top;position:relative;top:1.58px">Œ</span><span style="display:inline-block;width:16px;text-align:center"><span style="display:inline-block;transform:scaleX(0.975)">¯</span></span><span style="display:inline-block;width:16px;text-align:center"><span style="display:inline-block;transform:scaleX(0.807)">Ê</span></span><span style="display:inline-block;width:16px;text-align:center;font:400 27px/1 'Liberation Mono', monospace;vertical-align:top;position:relative;top:1.58px">.</span><span style="display:inline-block;width:16px;text-align:center;font:400 27px/1 'Liberation Mono', monospace;vertical-align:top;position:relative;top:1.58px">ƒ</span><span style="display:inline-block;width:16px;text-align:center"><span style="display:inline-block;transform:scaleX(0.968)">€</span></span><span style="display:inline-block;width:16px;text-align:center"><span style="display:inline-block;transform:scaleX(0.881)">ø</span></span><span style="display:inline-block;width:16px;text-align:center"><span style="display:inline-block;transform:scaleX(0.968)">â</span></span><span style="display:inline-block;width:16px;text-align:center"><span style="display:inline-block;transform:scaleX(0.881)">T</span></span><span style="display:inline-block;width:16px;text-align:center"><span style="display:inline-block;transform:scaleX(0.968)">0</span></span><span style="display:inline-block;width:16px;text-align:center"><span style="display:inline-block;transform:scaleX(0.968)">p</span></span><span style="display:inline-block;width:16px;text-align:center;font:400 27px/1 'Liberation Mono', monospace;vertical-align:top;position:relative;top:1.58px">.</span><span style="display:inline-block;width:16px;text-align:center">J</span><span style="display:inline-block;width:16px;text-align:center;font:400 27px/1 'Liberation Mono', monospace;vertical-align:top;position:relative;top:1.58px">-</span><span style="display:inline-block;width:16px;text-align:center;font:400 27px/1 'Liberation Mono', monospace;vertical-align:top;position:relative;top:1.58px">©</span><span style="display:inline-block;width:16px;text-align:center;font:400 27px/1 'Liberation Mono', monospace;vertical-align:top;position:relative;top:1.58px">.</span></div>
<div style="position:absolute;left:6.20px;top:346.90px;font:400 26px/1 'Liberation Sans', sans-serif;color:#c3bfb5;white-space:pre"><span style="display:inline-block;width:16px;text-align:center"><span style="display:inline-block;transform:scaleX(0.968)">0</span></span><span style="display:inline-block;width:16px;text-align:center"><span style="display:inline-block;transform:scaleX(0.968)">0</span></span><span style="display:inline-block;width:16px;text-align:center"><span style="display:inline-block;transform:scaleX(0.968)">4</span></span><span style="display:inline-block;width:16px;text-align:center"><span style="display:inline-block;transform:scaleX(0.968)">0</span></span><span style="display:inline-block;width:16px;text-align:center"><span style="display:inline-block;transform:scaleX(0.968)">h</span></span></div>
<div style="position:absolute;left:111.30px;top:348.90px;font:400 26px/1 'Liberation Sans', sans-serif;color:#eceae4;white-space:pre"><span style="display:inline-block;width:16px;text-align:center"><span style="display:inline-block;transform:scaleX(0.968)">0</span></span><span style="display:inline-block;width:16px;text-align:center"><span style="display:inline-block;transform:scaleX(0.968)">0</span></span></div>
<div style="position:absolute;left:157.97px;top:348.90px;font:400 26px/1 'Liberation Sans', sans-serif;color:#eceae4;white-space:pre"><span style="display:inline-block;width:16px;text-align:center"><span style="display:inline-block;transform:scaleX(0.968)">5</span></span><span style="display:inline-block;width:16px;text-align:center"><span style="display:inline-block;transform:scaleX(0.968)">0</span></span></div>
<div style="position:absolute;left:204.64px;top:348.90px;font:400 26px/1 'Liberation Sans', sans-serif;color:#eceae4;white-space:pre"><span style="display:inline-block;width:16px;text-align:center"><span style="display:inline-block;transform:scaleX(0.968)">4</span></span><span style="display:inline-block;width:16px;text-align:center"><span style="display:inline-block;transform:scaleX(0.807)">B</span></span></div>
<div style="position:absolute;left:251.31px;top:348.90px;font:400 26px/1 'Liberation Sans', sans-serif;color:#eceae4;white-space:pre"><span style="display:inline-block;width:16px;text-align:center"><span style="display:inline-block;transform:scaleX(0.968)">0</span></span><span style="display:inline-block;width:16px;text-align:center"><span style="display:inline-block;transform:scaleX(0.968)">1</span></span></div>
<div style="position:absolute;left:297.98px;top:348.90px;font:400 26px/1 'Liberation Sans', sans-serif;color:#eceae4;white-space:pre"><span style="display:inline-block;width:16px;text-align:center"><span style="display:inline-block;transform:scaleX(0.968)">0</span></span><span style="display:inline-block;width:16px;text-align:center"><span style="display:inline-block;transform:scaleX(0.968)">2</span></span></div>
<div style="position:absolute;left:344.65px;top:348.90px;font:400 26px/1 'Liberation Sans', sans-serif;color:#eceae4;white-space:pre"><span style="display:inline-block;width:16px;text-align:center"><span style="display:inline-block;transform:scaleX(0.968)">1</span></span><span style="display:inline-block;width:16px;text-align:center"><span style="display:inline-block;transform:scaleX(0.968)">4</span></span></div>
<div style="position:absolute;left:391.32px;top:348.90px;font:400 26px/1 'Liberation Sans', sans-serif;color:#eceae4;white-space:pre"><span style="display:inline-block;width:16px;text-align:center"><span style="display:inline-block;transform:scaleX(0.968)">0</span></span><span style="display:inline-block;width:16px;text-align:center"><span style="display:inline-block;transform:scaleX(0.968)">0</span></span></div>
<div style="position:absolute;left:437.99px;top:348.90px;font:400 26px/1 'Liberation Sans', sans-serif;color:#eceae4;white-space:pre"><span style="display:inline-block;width:16px;text-align:center"><span style="display:inline-block;transform:scaleX(0.968)">1</span></span><span style="display:inline-block;width:16px;text-align:center"><span style="display:inline-block;transform:scaleX(0.968)">4</span></span></div>
<div style="position:absolute;left:484.66px;top:348.90px;font:400 26px/1 'Liberation Sans', sans-serif;color:#eceae4;white-space:pre"><span style="display:inline-block;width:16px;text-align:center"><span style="display:inline-block;transform:scaleX(0.968)">0</span></span><span style="display:inline-block;width:16px;text-align:center"><span style="display:inline-block;transform:scaleX(0.968)">0</span></span></div>
<div style="position:absolute;left:531.33px;top:348.90px;font:400 26px/1 'Liberation Sans', sans-serif;color:#eceae4;white-space:pre"><span style="display:inline-block;width:16px;text-align:center"><span style="display:inline-block;transform:scaleX(0.968)">0</span></span><span style="display:inline-block;width:16px;text-align:center"><span style="display:inline-block;transform:scaleX(0.968)">9</span></span></div>
<div style="position:absolute;left:578.00px;top:348.90px;font:400 26px/1 'Liberation Sans', sans-serif;color:#eceae4;white-space:pre"><span style="display:inline-block;width:16px;text-align:center"><span style="display:inline-block;transform:scaleX(0.968)">0</span></span><span style="display:inline-block;width:16px;text-align:center"><span style="display:inline-block;transform:scaleX(0.968)">0</span></span></div>
<div style="position:absolute;left:624.67px;top:348.90px;font:400 26px/1 'Liberation Sans', sans-serif;color:#eceae4;white-space:pre"><span style="display:inline-block;width:16px;text-align:center"><span style="display:inline-block;transform:scaleX(0.968)">0</span></span><span style="display:inline-block;width:16px;text-align:center"><span style="display:inline-block;transform:scaleX(0.968)">8</span></span></div>
<div style="position:absolute;left:671.34px;top:348.90px;font:400 26px/1 'Liberation Sans', sans-serif;color:#eceae4;white-space:pre"><span style="display:inline-block;width:16px;text-align:center"><span style="display:inline-block;transform:scaleX(0.968)">0</span></span><span style="display:inline-block;width:16px;text-align:center"><span style="display:inline-block;transform:scaleX(0.968)">0</span></span></div>
<div style="position:absolute;left:718.01px;top:348.90px;font:400 26px/1 'Liberation Sans', sans-serif;color:#eceae4;white-space:pre"><span style="display:inline-block;width:16px;text-align:center"><span style="display:inline-block;transform:scaleX(0.881)">F</span></span><span style="display:inline-block;width:16px;text-align:center"><span style="display:inline-block;transform:scaleX(0.968)">2</span></span></div>
<div style="position:absolute;left:764.68px;top:348.90px;font:400 26px/1 'Liberation Sans', sans-serif;color:#eceae4;white-space:pre"><span style="display:inline-block;width:16px;text-align:center"><span style="display:inline-block;transform:scaleX(0.807)">A</span></span><span style="display:inline-block;width:16px;text-align:center"><span style="display:inline-block;transform:scaleX(0.968)">5</span></span></div>
<div style="position:absolute;left:811.35px;top:348.90px;font:400 26px/1 'Liberation Sans', sans-serif;color:#eceae4;white-space:pre"><span style="display:inline-block;width:16px;text-align:center"><span style="display:inline-block;transform:scaleX(0.968)">8</span></span><span style="display:inline-block;width:16px;text-align:center"><span style="display:inline-block;transform:scaleX(0.968)">6</span></span></div>
<div style="position:absolute;left:870.00px;top:348.90px;font:400 26px/1 'Liberation Sans', sans-serif;color:#eceae4;white-space:pre"><span style="display:inline-block;width:16px;text-align:center;font:400 27px/1 'Liberation Mono', monospace;vertical-align:top;position:relative;top:1.58px">.</span><span style="display:inline-block;width:16px;text-align:center"><span style="display:inline-block;transform:scaleX(0.807)">P</span></span><span style="display:inline-block;width:16px;text-align:center"><span style="display:inline-block;transform:scaleX(0.807)">K</span></span><span style="display:inline-block;width:16px;text-align:center;font:400 27px/1 'Liberation Mono', monospace;vertical-align:top;position:relative;top:1.58px">.</span><span style="display:inline-block;width:16px;text-align:center;font:400 27px/1 'Liberation Mono', monospace;vertical-align:top;position:relative;top:1.58px">.</span><span style="display:inline-block;width:16px;text-align:center;font:400 27px/1 'Liberation Mono', monospace;vertical-align:top;position:relative;top:1.58px">.</span><span style="display:inline-block;width:16px;text-align:center;font:400 27px/1 'Liberation Mono', monospace;vertical-align:top;position:relative;top:1.58px">.</span><span style="display:inline-block;width:16px;text-align:center;font:400 27px/1 'Liberation Mono', monospace;vertical-align:top;position:relative;top:1.58px">.</span><span style="display:inline-block;width:16px;text-align:center;font:400 27px/1 'Liberation Mono', monospace;vertical-align:top;position:relative;top:1.58px">.</span><span style="display:inline-block;width:16px;text-align:center;font:400 27px/1 'Liberation Mono', monospace;vertical-align:top;position:relative;top:1.58px">.</span><span style="display:inline-block;width:16px;text-align:center;font:400 27px/1 'Liberation Mono', monospace;vertical-align:top;position:relative;top:1.58px">.</span><span style="display:inline-block;width:16px;text-align:center;font:400 27px/1 'Liberation Mono', monospace;vertical-align:top;position:relative;top:1.58px">.</span><span style="display:inline-block;width:16px;text-align:center;font:400 27px/1 'Liberation Mono', monospace;vertical-align:top;position:relative;top:1.58px">.</span><span style="display:inline-block;width:16px;text-align:center"><span style="display:inline-block;transform:scaleX(0.968)">ò</span></span><span style="display:inline-block;width:16px;text-align:center"><span style="display:inline-block;transform:scaleX(0.968)">¥</span></span><span style="display:inline-block;width:16px;text-align:center"><span style="display:inline-block;transform:scaleX(0.968)">†</span></span></div>
<div style="position:absolute;left:6.20px;top:376.90px;font:400 26px/1 'Liberation Sans', sans-serif;color:#c3bfb5;white-space:pre"><span style="display:inline-block;width:16px;text-align:center"><span style="display:inline-block;transform:scaleX(0.968)">0</span></span><span style="display:inline-block;width:16px;text-align:center"><span style="display:inline-block;transform:scaleX(0.968)">0</span></span><span style="display:inline-block;width:16px;text-align:center"><span style="display:inline-block;transform:scaleX(0.968)">5</span></span><span style="display:inline-block;width:16px;text-align:center"><span style="display:inline-block;transform:scaleX(0.968)">0</span></span><span style="display:inline-block;width:16px;text-align:center"><span style="display:inline-block;transform:scaleX(0.968)">h</span></span></div>
<div style="position:absolute;left:111.30px;top:378.90px;font:400 26px/1 'Liberation Sans', sans-serif;color:#eceae4;white-space:pre"><span style="display:inline-block;width:16px;text-align:center"><span style="display:inline-block;transform:scaleX(0.968)">5</span></span><span style="display:inline-block;width:16px;text-align:center"><span style="display:inline-block;transform:scaleX(0.968)">7</span></span></div>
<div style="position:absolute;left:157.97px;top:378.90px;font:400 26px/1 'Liberation Sans', sans-serif;color:#eceae4;white-space:pre"><span style="display:inline-block;width:16px;text-align:center"><span style="display:inline-block;transform:scaleX(0.968)">6</span></span><span style="display:inline-block;width:16px;text-align:center"><span style="display:inline-block;transform:scaleX(0.968)">3</span></span></div>
<div style="position:absolute;left:204.64px;top:378.90px;font:400 26px/1 'Liberation Sans', sans-serif;color:#eceae4;white-space:pre"><span style="display:inline-block;width:16px;text-align:center"><span style="display:inline-block;transform:scaleX(0.968)">0</span></span><span style="display:inline-block;width:16px;text-align:center"><span style="display:inline-block;transform:scaleX(0.968)">8</span></span></div>
<div style="position:absolute;left:251.31px;top:378.90px;font:400 26px/1 'Liberation Sans', sans-serif;color:#eceae4;white-space:pre"><span style="display:inline-block;width:16px;text-align:center"><span style="display:inline-block;transform:scaleX(0.968)">3</span></span><span style="display:inline-block;width:16px;text-align:center"><span style="display:inline-block;transform:scaleX(0.968)">6</span></span></div>
<div style="position:absolute;left:297.98px;top:378.90px;font:400 26px/1 'Liberation Sans', sans-serif;color:#eceae4;white-space:pre"><span style="display:inline-block;width:16px;text-align:center"><span style="display:inline-block;transform:scaleX(0.968)">7</span></span><span style="display:inline-block;width:16px;text-align:center"><span style="display:inline-block;transform:scaleX(0.745)">D</span></span></div>
<div style="position:absolute;left:344.65px;top:378.90px;font:400 26px/1 'Liberation Sans', sans-serif;color:#eceae4;white-space:pre"><span style="display:inline-block;width:16px;text-align:center"><span style="display:inline-block;transform:scaleX(0.968)">1</span></span><span style="display:inline-block;width:16px;text-align:center"><span style="display:inline-block;transform:scaleX(0.807)">B</span></span></div>
<div style="position:absolute;left:391.32px;top:378.90px;font:400 26px/1 'Liberation Sans', sans-serif;color:#eceae4;white-space:pre"><span style="display:inline-block;width:16px;text-align:center"><span style="display:inline-block;transform:scaleX(0.968)">0</span></span><span style="display:inline-block;width:16px;text-align:center"><span style="display:inline-block;transform:scaleX(0.968)">0</span></span></div>
<div style="position:absolute;left:437.99px;top:378.90px;font:400 26px/1 'Liberation Sans', sans-serif;color:#eceae4;white-space:pre"><span style="display:inline-block;width:16px;text-align:center"><span style="display:inline-block;transform:scaleX(0.968)">0</span></span><span style="display:inline-block;width:16px;text-align:center"><span style="display:inline-block;transform:scaleX(0.968)">0</span></span></div>
<div style="position:absolute;left:484.66px;top:378.90px;font:400 26px/1 'Liberation Sans', sans-serif;color:#eceae4;white-space:pre"><span style="display:inline-block;width:16px;text-align:center"><span style="display:inline-block;transform:scaleX(0.968)">0</span></span><span style="display:inline-block;width:16px;text-align:center"><span style="display:inline-block;transform:scaleX(0.968)">0</span></span></div>
<div style="position:absolute;left:531.33px;top:378.90px;font:400 26px/1 'Liberation Sans', sans-serif;color:#eceae4;white-space:pre"><span style="display:inline-block;width:16px;text-align:center"><span style="display:inline-block;transform:scaleX(0.968)">2</span></span><span style="display:inline-block;width:16px;text-align:center"><span style="display:inline-block;transform:scaleX(0.968)">0</span></span></div>
<div style="position:absolute;left:578.00px;top:378.90px;font:400 26px/1 'Liberation Sans', sans-serif;color:#eceae4;white-space:pre"><span style="display:inline-block;width:16px;text-align:center"><span style="display:inline-block;transform:scaleX(0.968)">0</span></span><span style="display:inline-block;width:16px;text-align:center"><span style="display:inline-block;transform:scaleX(0.968)">0</span></span></div>
<div style="position:absolute;left:624.67px;top:378.90px;font:400 26px/1 'Liberation Sans', sans-serif;color:#eceae4;white-space:pre"><span style="display:inline-block;width:16px;text-align:center"><span style="display:inline-block;transform:scaleX(0.968)">0</span></span><span style="display:inline-block;width:16px;text-align:center"><span style="display:inline-block;transform:scaleX(0.968)">0</span></span></div>
<div style="position:absolute;left:671.34px;top:378.90px;font:400 26px/1 'Liberation Sans', sans-serif;color:#eceae4;white-space:pre"><span style="display:inline-block;width:16px;text-align:center"><span style="display:inline-block;transform:scaleX(0.968)">0</span></span><span style="display:inline-block;width:16px;text-align:center"><span style="display:inline-block;transform:scaleX(0.968)">0</span></span></div>
<div style="position:absolute;left:718.01px;top:378.90px;font:400 26px/1 'Liberation Sans', sans-serif;color:#eceae4;white-space:pre"><span style="display:inline-block;width:16px;text-align:center"><span style="display:inline-block;transform:scaleX(0.968)">0</span></span><span style="display:inline-block;width:16px;text-align:center"><span style="display:inline-block;transform:scaleX(0.968)">8</span></span></div>
<div style="position:absolute;left:764.68px;top:378.90px;font:400 26px/1 'Liberation Sans', sans-serif;color:#eceae4;white-space:pre"><span style="display:inline-block;width:16px;text-align:center"><span style="display:inline-block;transform:scaleX(0.968)">0</span></span><span style="display:inline-block;width:16px;text-align:center"><span style="display:inline-block;transform:scaleX(0.968)">0</span></span></div>
<div style="position:absolute;left:811.35px;top:378.90px;font:400 26px/1 'Liberation Sans', sans-serif;color:#eceae4;white-space:pre"><span style="display:inline-block;width:16px;text-align:center"><span style="display:inline-block;transform:scaleX(0.968)">2</span></span><span style="display:inline-block;width:16px;text-align:center"><span style="display:inline-block;transform:scaleX(0.968)">4</span></span></div>
<div style="position:absolute;left:870.00px;top:378.90px;font:400 26px/1 'Liberation Sans', sans-serif;color:#eceae4;white-space:pre"><span style="display:inline-block;width:16px;text-align:center;font:400 27px/1 'Liberation Mono', monospace;vertical-align:top;position:relative;top:1.58px">W</span><span style="display:inline-block;width:16px;text-align:center">c</span><span style="display:inline-block;width:16px;text-align:center;font:400 27px/1 'Liberation Mono', monospace;vertical-align:top;position:relative;top:1.58px">.</span><span style="display:inline-block;width:16px;text-align:center"><span style="display:inline-block;transform:scaleX(0.968)">6</span></span><span style="display:inline-block;width:16px;text-align:center;font:400 27px/1 'Liberation Mono', monospace;vertical-align:top;position:relative;top:1.58px">}</span><span style="display:inline-block;width:16px;text-align:center;font:400 27px/1 'Liberation Mono', monospace;vertical-align:top;position:relative;top:1.58px">.</span><span style="display:inline-block;width:16px;text-align:center;font:400 27px/1 'Liberation Mono', monospace;vertical-align:top;position:relative;top:1.58px">.</span><span style="display:inline-block;width:16px;text-align:center;font:400 27px/1 'Liberation Mono', monospace;vertical-align:top;position:relative;top:1.58px">.</span><span style="display:inline-block;width:16px;text-align:center;font:400 27px/1 'Liberation Mono', monospace;vertical-align:top;position:relative;top:1.58px">.</span><span style="display:inline-block;width:16px;text-align:center">&nbsp;</span><span style="display:inline-block;width:16px;text-align:center;font:400 27px/1 'Liberation Mono', monospace;vertical-align:top;position:relative;top:1.58px">.</span><span style="display:inline-block;width:16px;text-align:center;font:400 27px/1 'Liberation Mono', monospace;vertical-align:top;position:relative;top:1.58px">.</span><span style="display:inline-block;width:16px;text-align:center;font:400 27px/1 'Liberation Mono', monospace;vertical-align:top;position:relative;top:1.58px">.</span><span style="display:inline-block;width:16px;text-align:center;font:400 27px/1 'Liberation Mono', monospace;vertical-align:top;position:relative;top:1.58px">.</span><span style="display:inline-block;width:16px;text-align:center;font:400 27px/1 'Liberation Mono', monospace;vertical-align:top;position:relative;top:1.58px">.</span><span style="display:inline-block;width:16px;text-align:center;font:400 27px/1 'Liberation Mono', monospace;vertical-align:top;position:relative;top:1.58px">$</span></div>
<div style="position:absolute;left:6.20px;top:406.90px;font:400 26px/1 'Liberation Sans', sans-serif;color:#c3bfb5;white-space:pre"><span style="display:inline-block;width:16px;text-align:center"><span style="display:inline-block;transform:scaleX(0.968)">0</span></span><span style="display:inline-block;width:16px;text-align:center"><span style="display:inline-block;transform:scaleX(0.968)">0</span></span><span style="display:inline-block;width:16px;text-align:center"><span style="display:inline-block;transform:scaleX(0.968)">6</span></span><span style="display:inline-block;width:16px;text-align:center"><span style="display:inline-block;transform:scaleX(0.968)">0</span></span><span style="display:inline-block;width:16px;text-align:center"><span style="display:inline-block;transform:scaleX(0.968)">h</span></span></div>
<div style="position:absolute;left:111.30px;top:408.90px;font:400 26px/1 'Liberation Sans', sans-serif;color:#eceae4;white-space:pre"><span style="display:inline-block;width:16px;text-align:center"><span style="display:inline-block;transform:scaleX(0.968)">0</span></span><span style="display:inline-block;width:16px;text-align:center"><span style="display:inline-block;transform:scaleX(0.968)">0</span></span></div>
<div style="position:absolute;left:157.97px;top:408.90px;font:400 26px/1 'Liberation Sans', sans-serif;color:#eceae4;white-space:pre"><span style="display:inline-block;width:16px;text-align:center"><span style="display:inline-block;transform:scaleX(0.968)">0</span></span><span style="display:inline-block;width:16px;text-align:center"><span style="display:inline-block;transform:scaleX(0.968)">0</span></span></div>
<div style="position:absolute;left:204.64px;top:408.90px;font:400 26px/1 'Liberation Sans', sans-serif;color:#eceae4;white-space:pre"><span style="display:inline-block;width:16px;text-align:center"><span style="display:inline-block;transform:scaleX(0.968)">0</span></span><span style="display:inline-block;width:16px;text-align:center"><span style="display:inline-block;transform:scaleX(0.968)">0</span></span></div>
<div style="position:absolute;left:251.31px;top:408.90px;font:400 26px/1 'Liberation Sans', sans-serif;color:#eceae4;white-space:pre"><span style="display:inline-block;width:16px;text-align:center"><span style="display:inline-block;transform:scaleX(0.968)">0</span></span><span style="display:inline-block;width:16px;text-align:center"><span style="display:inline-block;transform:scaleX(0.968)">0</span></span></div>
<div style="position:absolute;left:297.98px;top:408.90px;font:400 26px/1 'Liberation Sans', sans-serif;color:#eceae4;white-space:pre"><span style="display:inline-block;width:16px;text-align:center"><span style="display:inline-block;transform:scaleX(0.968)">0</span></span><span style="display:inline-block;width:16px;text-align:center"><span style="display:inline-block;transform:scaleX(0.968)">0</span></span></div>
<div style="position:absolute;left:344.65px;top:408.90px;font:400 26px/1 'Liberation Sans', sans-serif;color:#eceae4;white-space:pre"><span style="display:inline-block;width:16px;text-align:center"><span style="display:inline-block;transform:scaleX(0.968)">0</span></span><span style="display:inline-block;width:16px;text-align:center"><span style="display:inline-block;transform:scaleX(0.968)">0</span></span></div>
<div style="position:absolute;left:391.32px;top:408.90px;font:400 26px/1 'Liberation Sans', sans-serif;color:#eceae4;white-space:pre"><span style="display:inline-block;width:16px;text-align:center"><span style="display:inline-block;transform:scaleX(0.968)">0</span></span><span style="display:inline-block;width:16px;text-align:center"><span style="display:inline-block;transform:scaleX(0.968)">0</span></span></div>
<div style="position:absolute;left:437.99px;top:408.90px;font:400 26px/1 'Liberation Sans', sans-serif;color:#eceae4;white-space:pre"><span style="display:inline-block;width:16px;text-align:center"><span style="display:inline-block;transform:scaleX(0.968)">2</span></span><span style="display:inline-block;width:16px;text-align:center"><span style="display:inline-block;transform:scaleX(0.968)">0</span></span></div>
<div style="position:absolute;left:484.66px;top:408.90px;font:400 26px/1 'Liberation Sans', sans-serif;color:#eceae4;white-space:pre"><span style="display:inline-block;width:16px;text-align:center"><span style="display:inline-block;transform:scaleX(0.968)">0</span></span><span style="display:inline-block;width:16px;text-align:center"><span style="display:inline-block;transform:scaleX(0.968)">0</span></span></div>
<div style="position:absolute;left:531.33px;top:408.90px;font:400 26px/1 'Liberation Sans', sans-serif;color:#eceae4;white-space:pre"><span style="display:inline-block;width:16px;text-align:center"><span style="display:inline-block;transform:scaleX(0.968)">0</span></span><span style="display:inline-block;width:16px;text-align:center"><span style="display:inline-block;transform:scaleX(0.968)">0</span></span></div>
<div style="position:absolute;left:578.00px;top:408.90px;font:400 26px/1 'Liberation Sans', sans-serif;color:#eceae4;white-space:pre"><span style="display:inline-block;width:16px;text-align:center"><span style="display:inline-block;transform:scaleX(0.968)">0</span></span><span style="display:inline-block;width:16px;text-align:center"><span style="display:inline-block;transform:scaleX(0.968)">0</span></span></div>
<div style="position:absolute;left:624.67px;top:408.90px;font:400 26px/1 'Liberation Sans', sans-serif;color:#eceae4;white-space:pre"><span style="display:inline-block;width:16px;text-align:center"><span style="display:inline-block;transform:scaleX(0.968)">0</span></span><span style="display:inline-block;width:16px;text-align:center"><span style="display:inline-block;transform:scaleX(0.968)">0</span></span></div>
<div style="position:absolute;left:671.34px;top:408.90px;font:400 26px/1 'Liberation Sans', sans-serif;color:#eceae4;white-space:pre"><span style="display:inline-block;width:16px;text-align:center"><span style="display:inline-block;transform:scaleX(0.968)">0</span></span><span style="display:inline-block;width:16px;text-align:center"><span style="display:inline-block;transform:scaleX(0.968)">0</span></span></div>
<div style="position:absolute;left:718.01px;top:408.90px;font:400 26px/1 'Liberation Sans', sans-serif;color:#eceae4;white-space:pre"><span style="display:inline-block;width:16px;text-align:center"><span style="display:inline-block;transform:scaleX(0.968)">0</span></span><span style="display:inline-block;width:16px;text-align:center"><span style="display:inline-block;transform:scaleX(0.968)">0</span></span></div>
<div style="position:absolute;left:764.68px;top:408.90px;font:400 26px/1 'Liberation Sans', sans-serif;color:#eceae4;white-space:pre"><span style="display:inline-block;width:16px;text-align:center"><span style="display:inline-block;transform:scaleX(0.968)">0</span></span><span style="display:inline-block;width:16px;text-align:center"><span style="display:inline-block;transform:scaleX(0.968)">0</span></span></div>
<div style="position:absolute;left:811.35px;top:408.90px;font:400 26px/1 'Liberation Sans', sans-serif;color:#eceae4;white-space:pre"><span style="display:inline-block;width:16px;text-align:center"><span style="display:inline-block;transform:scaleX(0.968)">6</span></span><span style="display:inline-block;width:16px;text-align:center"><span style="display:inline-block;transform:scaleX(0.968)">6</span></span></div>
<div style="position:absolute;left:870.00px;top:408.90px;font:400 26px/1 'Liberation Sans', sans-serif;color:#eceae4;white-space:pre"><span style="display:inline-block;width:16px;text-align:center;font:400 27px/1 'Liberation Mono', monospace;vertical-align:top;position:relative;top:1.58px">.</span><span style="display:inline-block;width:16px;text-align:center;font:400 27px/1 'Liberation Mono', monospace;vertical-align:top;position:relative;top:1.58px">.</span><span style="display:inline-block;width:16px;text-align:center;font:400 27px/1 'Liberation Mono', monospace;vertical-align:top;position:relative;top:1.58px">.</span><span style="display:inline-block;width:16px;text-align:center;font:400 27px/1 'Liberation Mono', monospace;vertical-align:top;position:relative;top:1.58px">.</span><span style="display:inline-block;width:16px;text-align:center;font:400 27px/1 'Liberation Mono', monospace;vertical-align:top;position:relative;top:1.58px">.</span><span style="display:inline-block;width:16px;text-align:center;font:400 27px/1 'Liberation Mono', monospace;vertical-align:top;position:relative;top:1.58px">.</span><span style="display:inline-block;width:16px;text-align:center;font:400 27px/1 'Liberation Mono', monospace;vertical-align:top;position:relative;top:1.58px">.</span><span style="display:inline-block;width:16px;text-align:center">&nbsp;</span><span style="display:inline-block;width:16px;text-align:center;font:400 27px/1 'Liberation Mono', monospace;vertical-align:top;position:relative;top:1.58px">.</span><span style="display:inline-block;width:16px;text-align:center;font:400 27px/1 'Liberation Mono', monospace;vertical-align:top;position:relative;top:1.58px">.</span><span style="display:inline-block;width:16px;text-align:center;font:400 27px/1 'Liberation Mono', monospace;vertical-align:top;position:relative;top:1.58px">.</span><span style="display:inline-block;width:16px;text-align:center;font:400 27px/1 'Liberation Mono', monospace;vertical-align:top;position:relative;top:1.58px">.</span><span style="display:inline-block;width:16px;text-align:center;font:400 27px/1 'Liberation Mono', monospace;vertical-align:top;position:relative;top:1.58px">.</span><span style="display:inline-block;width:16px;text-align:center;font:400 27px/1 'Liberation Mono', monospace;vertical-align:top;position:relative;top:1.58px">.</span><span style="display:inline-block;width:16px;text-align:center;font:400 27px/1 'Liberation Mono', monospace;vertical-align:top;position:relative;top:1.58px">.</span><span style="display:inline-block;width:16px;text-align:center;font:400 27px/1 'Liberation Mono', monospace;vertical-align:top;position:relative;top:1.58px">f</span></div>
<div style="position:absolute;left:6.20px;top:436.90px;font:400 26px/1 'Liberation Sans', sans-serif;color:#c3bfb5;white-space:pre"><span style="display:inline-block;width:16px;text-align:center"><span style="display:inline-block;transform:scaleX(0.968)">0</span></span><span style="display:inline-block;width:16px;text-align:center"><span style="display:inline-block;transform:scaleX(0.968)">0</span></span><span style="display:inline-block;width:16px;text-align:center"><span style="display:inline-block;transform:scaleX(0.968)">7</span></span><span style="display:inline-block;width:16px;text-align:center"><span style="display:inline-block;transform:scaleX(0.968)">0</span></span><span style="display:inline-block;width:16px;text-align:center"><span style="display:inline-block;transform:scaleX(0.968)">h</span></span></div>
<div style="position:absolute;left:111.30px;top:438.90px;font:400 26px/1 'Liberation Sans', sans-serif;color:#eceae4;white-space:pre"><span style="display:inline-block;width:16px;text-align:center"><span style="display:inline-block;transform:scaleX(0.968)">6</span></span><span style="display:inline-block;width:16px;text-align:center"><span style="display:inline-block;transform:scaleX(0.745)">C</span></span></div>
<div style="position:absolute;left:157.97px;top:438.90px;font:400 26px/1 'Liberation Sans', sans-serif;color:#eceae4;white-space:pre"><span style="display:inline-block;width:16px;text-align:center"><span style="display:inline-block;transform:scaleX(0.968)">6</span></span><span style="display:inline-block;width:16px;text-align:center"><span style="display:inline-block;transform:scaleX(0.968)">1</span></span></div>
<div style="position:absolute;left:204.64px;top:438.90px;font:400 26px/1 'Liberation Sans', sans-serif;color:#eceae4;white-space:pre"><span style="display:inline-block;width:16px;text-align:center"><span style="display:inline-block;transform:scaleX(0.968)">6</span></span><span style="display:inline-block;width:16px;text-align:center"><span style="display:inline-block;transform:scaleX(0.968)">7</span></span></div>
<div style="position:absolute;left:251.31px;top:438.90px;font:400 26px/1 'Liberation Sans', sans-serif;color:#eceae4;white-space:pre"><span style="display:inline-block;width:16px;text-align:center"><span style="display:inline-block;transform:scaleX(0.968)">2</span></span><span style="display:inline-block;width:16px;text-align:center"><span style="display:inline-block;transform:scaleX(0.807)">E</span></span></div>
<div style="position:absolute;left:297.98px;top:438.90px;font:400 26px/1 'Liberation Sans', sans-serif;color:#eceae4;white-space:pre"><span style="display:inline-block;width:16px;text-align:center"><span style="display:inline-block;transform:scaleX(0.968)">7</span></span><span style="display:inline-block;width:16px;text-align:center"><span style="display:inline-block;transform:scaleX(0.968)">4</span></span></div>
<div style="position:absolute;left:344.65px;top:438.90px;font:400 26px/1 'Liberation Sans', sans-serif;color:#eceae4;white-space:pre"><span style="display:inline-block;width:16px;text-align:center"><span style="display:inline-block;transform:scaleX(0.968)">7</span></span><span style="display:inline-block;width:16px;text-align:center"><span style="display:inline-block;transform:scaleX(0.968)">8</span></span></div>
<div style="position:absolute;left:391.32px;top:438.90px;font:400 26px/1 'Liberation Sans', sans-serif;color:#eceae4;white-space:pre"><span style="display:inline-block;width:16px;text-align:center"><span style="display:inline-block;transform:scaleX(0.968)">7</span></span><span style="display:inline-block;width:16px;text-align:center"><span style="display:inline-block;transform:scaleX(0.968)">4</span></span></div>
<div style="position:absolute;left:437.99px;top:438.90px;font:400 26px/1 'Liberation Sans', sans-serif;color:#eceae4;white-space:pre"><span style="display:inline-block;width:16px;text-align:center"><span style="display:inline-block;transform:scaleX(0.968)">0</span></span><span style="display:inline-block;width:16px;text-align:center"><span style="display:inline-block;transform:scaleX(0.807)">A</span></span></div>
<div style="position:absolute;left:484.66px;top:438.90px;font:400 26px/1 'Liberation Sans', sans-serif;color:#eceae4;white-space:pre"><span style="display:inline-block;width:16px;text-align:center"><span style="display:inline-block;transform:scaleX(0.968)">0</span></span><span style="display:inline-block;width:16px;text-align:center"><span style="display:inline-block;transform:scaleX(0.968)">0</span></span></div>
<div style="position:absolute;left:531.33px;top:438.90px;font:400 26px/1 'Liberation Sans', sans-serif;color:#eceae4;white-space:pre"><span style="display:inline-block;width:16px;text-align:center"><span style="display:inline-block;transform:scaleX(0.968)">2</span></span><span style="display:inline-block;width:16px;text-align:center"><span style="display:inline-block;transform:scaleX(0.968)">0</span></span></div>
<div style="position:absolute;left:578.00px;top:438.90px;font:400 26px/1 'Liberation Sans', sans-serif;color:#eceae4;white-space:pre"><span style="display:inline-block;width:16px;text-align:center"><span style="display:inline-block;transform:scaleX(0.968)">0</span></span><span style="display:inline-block;width:16px;text-align:center"><span style="display:inline-block;transform:scaleX(0.968)">0</span></span></div>
<div style="position:absolute;left:624.67px;top:438.90px;font:400 26px/1 'Liberation Sans', sans-serif;color:#eceae4;white-space:pre"><span style="display:inline-block;width:16px;text-align:center"><span style="display:inline-block;transform:scaleX(0.968)">0</span></span><span style="display:inline-block;width:16px;text-align:center"><span style="display:inline-block;transform:scaleX(0.968)">0</span></span></div>
<div style="position:absolute;left:671.34px;top:438.90px;font:400 26px/1 'Liberation Sans', sans-serif;color:#eceae4;white-space:pre"><span style="display:inline-block;width:16px;text-align:center"><span style="display:inline-block;transform:scaleX(0.968)">0</span></span><span style="display:inline-block;width:16px;text-align:center"><span style="display:inline-block;transform:scaleX(0.968)">0</span></span></div>
<div style="position:absolute;left:718.01px;top:438.90px;font:400 26px/1 'Liberation Sans', sans-serif;color:#eceae4;white-space:pre"><span style="display:inline-block;width:16px;text-align:center"><span style="display:inline-block;transform:scaleX(0.968)">0</span></span><span style="display:inline-block;width:16px;text-align:center"><span style="display:inline-block;transform:scaleX(0.968)">0</span></span></div>
<div style="position:absolute;left:764.68px;top:438.90px;font:400 26px/1 'Liberation Sans', sans-serif;color:#eceae4;white-space:pre"><span style="display:inline-block;width:16px;text-align:center"><span style="display:inline-block;transform:scaleX(0.968)">0</span></span><span style="display:inline-block;width:16px;text-align:center"><span style="display:inline-block;transform:scaleX(0.968)">0</span></span></div>
<div style="position:absolute;left:811.35px;top:438.90px;font:400 26px/1 'Liberation Sans', sans-serif;color:#eceae4;white-space:pre"><span style="display:inline-block;width:16px;text-align:center"><span style="display:inline-block;transform:scaleX(0.968)">0</span></span><span style="display:inline-block;width:16px;text-align:center"><span style="display:inline-block;transform:scaleX(0.968)">1</span></span></div>
<div style="position:absolute;left:870.00px;top:438.90px;font:400 26px/1 'Liberation Sans', sans-serif;color:#eceae4;white-space:pre"><span style="display:inline-block;width:16px;text-align:center;font:400 27px/1 'Liberation Mono', monospace;vertical-align:top;position:relative;top:1.58px">l</span><span style="display:inline-block;width:16px;text-align:center"><span style="display:inline-block;transform:scaleX(0.968)">a</span></span><span style="display:inline-block;width:16px;text-align:center"><span style="display:inline-block;transform:scaleX(0.968)">g</span></span><span style="display:inline-block;width:16px;text-align:center;font:400 27px/1 'Liberation Mono', monospace;vertical-align:top;position:relative;top:1.58px">.</span><span style="display:inline-block;width:16px;text-align:center;font:400 27px/1 'Liberation Mono', monospace;vertical-align:top;position:relative;top:1.58px">t</span><span style="display:inline-block;width:16px;text-align:center">x</span><span style="display:inline-block;width:16px;text-align:center;font:400 27px/1 'Liberation Mono', monospace;vertical-align:top;position:relative;top:1.58px">t</span><span style="display:inline-block;width:16px;text-align:center;font:400 27px/1 'Liberation Mono', monospace;vertical-align:top;position:relative;top:1.58px">.</span><span style="display:inline-block;width:16px;text-align:center;font:400 27px/1 'Liberation Mono', monospace;vertical-align:top;position:relative;top:1.58px">.</span><span style="display:inline-block;width:16px;text-align:center">&nbsp;</span><span style="display:inline-block;width:16px;text-align:center;font:400 27px/1 'Liberation Mono', monospace;vertical-align:top;position:relative;top:1.58px">.</span><span style="display:inline-block;width:16px;text-align:center;font:400 27px/1 'Liberation Mono', monospace;vertical-align:top;position:relative;top:1.58px">.</span><span style="display:inline-block;width:16px;text-align:center;font:400 27px/1 'Liberation Mono', monospace;vertical-align:top;position:relative;top:1.58px">.</span><span style="display:inline-block;width:16px;text-align:center;font:400 27px/1 'Liberation Mono', monospace;vertical-align:top;position:relative;top:1.58px">.</span><span style="display:inline-block;width:16px;text-align:center;font:400 27px/1 'Liberation Mono', monospace;vertical-align:top;position:relative;top:1.58px">.</span><span style="display:inline-block;width:16px;text-align:center;font:400 27px/1 'Liberation Mono', monospace;vertical-align:top;position:relative;top:1.58px">.</span></div>
<div style="position:absolute;left:6.20px;top:466.90px;font:400 26px/1 'Liberation Sans', sans-serif;color:#c3bfb5;white-space:pre"><span style="display:inline-block;width:16px;text-align:center"><span style="display:inline-block;transform:scaleX(0.968)">0</span></span><span style="display:inline-block;width:16px;text-align:center"><span style="display:inline-block;transform:scaleX(0.968)">0</span></span><span style="display:inline-block;width:16px;text-align:center"><span style="display:inline-block;transform:scaleX(0.968)">8</span></span><span style="display:inline-block;width:16px;text-align:center"><span style="display:inline-block;transform:scaleX(0.968)">0</span></span><span style="display:inline-block;width:16px;text-align:center"><span style="display:inline-block;transform:scaleX(0.968)">h</span></span></div>
<div style="position:absolute;left:111.30px;top:468.90px;font:400 26px/1 'Liberation Sans', sans-serif;color:#eceae4;white-space:pre"><span style="display:inline-block;width:16px;text-align:center"><span style="display:inline-block;transform:scaleX(0.968)">0</span></span><span style="display:inline-block;width:16px;text-align:center"><span style="display:inline-block;transform:scaleX(0.968)">0</span></span></div>
<div style="position:absolute;left:157.97px;top:468.90px;font:400 26px/1 'Liberation Sans', sans-serif;color:#eceae4;white-space:pre"><span style="display:inline-block;width:16px;text-align:center"><span style="display:inline-block;transform:scaleX(0.968)">1</span></span><span style="display:inline-block;width:16px;text-align:center"><span style="display:inline-block;transform:scaleX(0.968)">8</span></span></div>
<div style="position:absolute;left:204.64px;top:468.90px;font:400 26px/1 'Liberation Sans', sans-serif;color:#eceae4;white-space:pre"><span style="display:inline-block;width:16px;text-align:center"><span style="display:inline-block;transform:scaleX(0.968)">0</span></span><span style="display:inline-block;width:16px;text-align:center"><span style="display:inline-block;transform:scaleX(0.968)">0</span></span></div>
<div style="position:absolute;left:251.31px;top:468.90px;font:400 26px/1 'Liberation Sans', sans-serif;color:#eceae4;white-space:pre"><span style="display:inline-block;width:16px;text-align:center"><span style="display:inline-block;transform:scaleX(0.968)">5</span></span><span style="display:inline-block;width:16px;text-align:center"><span style="display:inline-block;transform:scaleX(0.968)">2</span></span></div>
<div style="position:absolute;left:297.98px;top:468.90px;font:400 26px/1 'Liberation Sans', sans-serif;color:#eceae4;white-space:pre"><span style="display:inline-block;width:16px;text-align:center"><span style="display:inline-block;transform:scaleX(0.968)">4</span></span><span style="display:inline-block;width:16px;text-align:center"><span style="display:inline-block;transform:scaleX(0.968)">2</span></span></div>
<div style="position:absolute;left:344.65px;top:468.90px;font:400 26px/1 'Liberation Sans', sans-serif;color:#eceae4;white-space:pre"><span style="display:inline-block;width:16px;text-align:center"><span style="display:inline-block;transform:scaleX(0.968)">0</span></span><span style="display:inline-block;width:16px;text-align:center"><span style="display:inline-block;transform:scaleX(0.745)">C</span></span></div>
<div style="position:absolute;left:391.32px;top:468.90px;font:400 26px/1 'Liberation Sans', sans-serif;color:#eceae4;white-space:pre"><span style="display:inline-block;width:16px;text-align:center"><span style="display:inline-block;transform:scaleX(0.968)">6</span></span><span style="display:inline-block;width:16px;text-align:center"><span style="display:inline-block;transform:scaleX(0.968)">3</span></span></div>
<div style="position:absolute;left:437.99px;top:468.90px;font:400 26px/1 'Liberation Sans', sans-serif;color:#eceae4;white-space:pre"><span style="display:inline-block;width:16px;text-align:center"><span style="display:inline-block;transform:scaleX(0.968)">4</span></span><span style="display:inline-block;width:16px;text-align:center"><span style="display:inline-block;transform:scaleX(0.968)">2</span></span></div>
<div style="position:absolute;left:484.66px;top:468.90px;font:400 26px/1 'Liberation Sans', sans-serif;color:#eceae4;white-space:pre"><span style="display:inline-block;width:16px;text-align:center"><span style="display:inline-block;transform:scaleX(0.968)">2</span></span><span style="display:inline-block;width:16px;text-align:center"><span style="display:inline-block;transform:scaleX(0.968)">8</span></span></div>
<div style="position:absolute;left:531.33px;top:468.90px;font:400 26px/1 'Liberation Sans', sans-serif;color:#eceae4;white-space:pre"><span style="display:inline-block;width:16px;text-align:center"><span style="display:inline-block;transform:scaleX(0.745)">D</span></span><span style="display:inline-block;width:16px;text-align:center"><span style="display:inline-block;transform:scaleX(0.807)">A</span></span></div>
<div style="position:absolute;left:578.00px;top:468.90px;font:400 26px/1 'Liberation Sans', sans-serif;color:#eceae4;white-space:pre"><span style="display:inline-block;width:16px;text-align:center"><span style="display:inline-block;transform:scaleX(0.968)">0</span></span><span style="display:inline-block;width:16px;text-align:center"><span style="display:inline-block;transform:scaleX(0.968)">1</span></span></div>
<div style="position:absolute;left:624.67px;top:468.90px;font:400 26px/1 'Liberation Sans', sans-serif;color:#eceae4;white-space:pre"><span style="display:inline-block;width:16px;text-align:center"><span style="display:inline-block;transform:scaleX(0.968)">5</span></span><span style="display:inline-block;width:16px;text-align:center"><span style="display:inline-block;transform:scaleX(0.881)">F</span></span></div>
<div style="position:absolute;left:671.34px;top:468.90px;font:400 26px/1 'Liberation Sans', sans-serif;color:#eceae4;white-space:pre"><span style="display:inline-block;width:16px;text-align:center"><span style="display:inline-block;transform:scaleX(0.968)">6</span></span><span style="display:inline-block;width:16px;text-align:center"><span style="display:inline-block;transform:scaleX(0.968)">9</span></span></div>
<div style="position:absolute;left:718.01px;top:468.90px;font:400 26px/1 'Liberation Sans', sans-serif;color:#eceae4;white-space:pre"><span style="display:inline-block;width:16px;text-align:center"><span style="display:inline-block;transform:scaleX(0.968)">0</span></span><span style="display:inline-block;width:16px;text-align:center"><span style="display:inline-block;transform:scaleX(0.745)">C</span></span></div>
<div style="position:absolute;left:764.68px;top:468.90px;font:400 26px/1 'Liberation Sans', sans-serif;color:#eceae4;white-space:pre"><span style="display:inline-block;width:16px;text-align:center"><span style="display:inline-block;transform:scaleX(0.968)">6</span></span><span style="display:inline-block;width:16px;text-align:center"><span style="display:inline-block;transform:scaleX(0.968)">3</span></span></div>
<div style="position:absolute;left:811.35px;top:468.90px;font:400 26px/1 'Liberation Sans', sans-serif;color:#eceae4;white-space:pre"><span style="display:inline-block;width:16px;text-align:center"><span style="display:inline-block;transform:scaleX(0.968)">4</span></span><span style="display:inline-block;width:16px;text-align:center"><span style="display:inline-block;transform:scaleX(0.968)">2</span></span></div>
<div style="position:absolute;left:870.00px;top:468.90px;font:400 26px/1 'Liberation Sans', sans-serif;color:#eceae4;white-space:pre"><span style="display:inline-block;width:16px;text-align:center;font:400 27px/1 'Liberation Mono', monospace;vertical-align:top;position:relative;top:1.58px">.</span><span style="display:inline-block;width:16px;text-align:center;font:400 27px/1 'Liberation Mono', monospace;vertical-align:top;position:relative;top:1.58px">.</span><span style="display:inline-block;width:16px;text-align:center;font:400 27px/1 'Liberation Mono', monospace;vertical-align:top;position:relative;top:1.58px">.</span><span style="display:inline-block;width:16px;text-align:center"><span style="display:inline-block;transform:scaleX(0.745)">R</span></span><span style="display:inline-block;width:16px;text-align:center"><span style="display:inline-block;transform:scaleX(0.807)">B</span></span><span style="display:inline-block;width:16px;text-align:center;font:400 27px/1 'Liberation Mono', monospace;vertical-align:top;position:relative;top:1.58px">.</span><span style="display:inline-block;width:16px;text-align:center">c</span><span style="display:inline-block;width:16px;text-align:center"><span style="display:inline-block;transform:scaleX(0.807)">B</span></span><span style="display:inline-block;width:16px;text-align:center">(</span><span style="display:inline-block;width:16px;text-align:center"><span style="display:inline-block;transform:scaleX(0.745)">Ú</span></span><span style="display:inline-block;width:16px;text-align:center;font:400 27px/1 'Liberation Mono', monospace;vertical-align:top;position:relative;top:1.58px">.</span><span style="display:inline-block;width:16px;text-align:center;font:400 27px/1 'Liberation Mono', monospace;vertical-align:top;position:relative;top:1.58px">_</span><span style="display:inline-block;width:16px;text-align:center;font:400 27px/1 'Liberation Mono', monospace;vertical-align:top;position:relative;top:1.58px">i</span><span style="display:inline-block;width:16px;text-align:center;font:400 27px/1 'Liberation Mono', monospace;vertical-align:top;position:relative;top:1.58px">.</span><span style="display:inline-block;width:16px;text-align:center">c</span><span style="display:inline-block;width:16px;text-align:center"><span style="display:inline-block;transform:scaleX(0.807)">B</span></span></div>
<div style="position:absolute;left:6.20px;top:496.90px;font:400 26px/1 'Liberation Sans', sans-serif;color:#c3bfb5;white-space:pre"><span style="display:inline-block;width:16px;text-align:center"><span style="display:inline-block;transform:scaleX(0.968)">0</span></span><span style="display:inline-block;width:16px;text-align:center"><span style="display:inline-block;transform:scaleX(0.968)">0</span></span><span style="display:inline-block;width:16px;text-align:center"><span style="display:inline-block;transform:scaleX(0.968)">9</span></span><span style="display:inline-block;width:16px;text-align:center"><span style="display:inline-block;transform:scaleX(0.968)">0</span></span><span style="display:inline-block;width:16px;text-align:center"><span style="display:inline-block;transform:scaleX(0.968)">h</span></span></div>
<div style="position:absolute;left:111.30px;top:498.90px;font:400 26px/1 'Liberation Sans', sans-serif;color:#eceae4;white-space:pre"><span style="display:inline-block;width:16px;text-align:center"><span style="display:inline-block;transform:scaleX(0.968)">2</span></span><span style="display:inline-block;width:16px;text-align:center"><span style="display:inline-block;transform:scaleX(0.968)">8</span></span></div>
<div style="position:absolute;left:157.97px;top:498.90px;font:400 26px/1 'Liberation Sans', sans-serif;color:#eceae4;white-space:pre"><span style="display:inline-block;width:16px;text-align:center"><span style="display:inline-block;transform:scaleX(0.745)">D</span></span><span style="display:inline-block;width:16px;text-align:center"><span style="display:inline-block;transform:scaleX(0.807)">A</span></span></div>
<div style="position:absolute;left:204.64px;top:498.90px;font:400 26px/1 'Liberation Sans', sans-serif;color:#eceae4;white-space:pre"><span style="display:inline-block;width:16px;text-align:center"><span style="display:inline-block;transform:scaleX(0.968)">0</span></span><span style="display:inline-block;width:16px;text-align:center"><span style="display:inline-block;transform:scaleX(0.968)">1</span></span></div>
<div style="position:absolute;left:251.31px;top:498.90px;font:400 26px/1 'Liberation Sans', sans-serif;color:#eceae4;white-space:pre"><span style="display:inline-block;width:16px;text-align:center"><span style="display:inline-block;transform:scaleX(0.968)">7</span></span><span style="display:inline-block;width:16px;text-align:center"><span style="display:inline-block;transform:scaleX(0.968)">3</span></span></div>
<div style="position:absolute;left:297.98px;top:498.90px;font:400 26px/1 'Liberation Sans', sans-serif;color:#eceae4;white-space:pre"><span style="display:inline-block;width:16px;text-align:center"><span style="display:inline-block;transform:scaleX(0.968)">2</span></span><span style="display:inline-block;width:16px;text-align:center"><span style="display:inline-block;transform:scaleX(0.968)">6</span></span></div>
<div style="position:absolute;left:344.65px;top:498.90px;font:400 26px/1 'Liberation Sans', sans-serif;color:#eceae4;white-space:pre"><span style="display:inline-block;width:16px;text-align:center"><span style="display:inline-block;transform:scaleX(0.968)">9</span></span><span style="display:inline-block;width:16px;text-align:center"><span style="display:inline-block;transform:scaleX(0.807)">A</span></span></div>
<div style="position:absolute;left:391.32px;top:498.90px;font:400 26px/1 'Liberation Sans', sans-serif;color:#eceae4;white-space:pre"><span style="display:inline-block;width:16px;text-align:center"><span style="display:inline-block;transform:scaleX(0.968)">5</span></span><span style="display:inline-block;width:16px;text-align:center"><span style="display:inline-block;transform:scaleX(0.807)">E</span></span></div>
<div style="position:absolute;left:437.99px;top:498.90px;font:400 26px/1 'Liberation Sans', sans-serif;color:#eceae4;white-space:pre"><span style="display:inline-block;width:16px;text-align:center"><span style="display:inline-block;transform:scaleX(0.968)">4</span></span><span style="display:inline-block;width:16px;text-align:center"><span style="display:inline-block;transform:scaleX(0.968)">2</span></span></div>
<div style="position:absolute;left:484.66px;top:498.90px;font:400 26px/1 'Liberation Sans', sans-serif;color:#eceae4;white-space:pre"><span style="display:inline-block;width:16px;text-align:center"><span style="display:inline-block;transform:scaleX(0.968)">2</span></span><span style="display:inline-block;width:16px;text-align:center"><span style="display:inline-block;transform:scaleX(0.968)">8</span></span></div>
<div style="position:absolute;left:531.33px;top:498.90px;font:400 26px/1 'Liberation Sans', sans-serif;color:#eceae4;white-space:pre"><span style="display:inline-block;width:16px;text-align:center"><span style="display:inline-block;transform:scaleX(0.745)">D</span></span><span style="display:inline-block;width:16px;text-align:center"><span style="display:inline-block;transform:scaleX(0.807)">A</span></span></div>
<div style="position:absolute;left:578.00px;top:498.90px;font:400 26px/1 'Liberation Sans', sans-serif;color:#eceae4;white-space:pre"><span style="display:inline-block;width:16px;text-align:center"><span style="display:inline-block;transform:scaleX(0.968)">0</span></span><span style="display:inline-block;width:16px;text-align:center"><span style="display:inline-block;transform:scaleX(0.968)">1</span></span></div>
<div style="position:absolute;left:624.67px;top:498.90px;font:400 26px/1 'Liberation Sans', sans-serif;color:#eceae4;white-space:pre"><span style="display:inline-block;width:16px;text-align:center"><span style="display:inline-block;transform:scaleX(0.968)">5</span></span><span style="display:inline-block;width:16px;text-align:center"><span style="display:inline-block;transform:scaleX(0.968)">0</span></span></div>
<div style="position:absolute;left:671.34px;top:498.90px;font:400 26px/1 'Liberation Sans', sans-serif;color:#eceae4;white-space:pre"><span style="display:inline-block;width:16px;text-align:center"><span style="display:inline-block;transform:scaleX(0.968)">4</span></span><span style="display:inline-block;width:16px;text-align:center"><span style="display:inline-block;transform:scaleX(0.807)">B</span></span></div>
<div style="position:absolute;left:718.01px;top:498.90px;font:400 26px/1 'Liberation Sans', sans-serif;color:#eceae4;white-space:pre"><span style="display:inline-block;width:16px;text-align:center"><span style="display:inline-block;transform:scaleX(0.968)">0</span></span><span style="display:inline-block;width:16px;text-align:center"><span style="display:inline-block;transform:scaleX(0.968)">5</span></span></div>
<div style="position:absolute;left:764.68px;top:498.90px;font:400 26px/1 'Liberation Sans', sans-serif;color:#eceae4;white-space:pre"><span style="display:inline-block;width:16px;text-align:center"><span style="display:inline-block;transform:scaleX(0.968)">0</span></span><span style="display:inline-block;width:16px;text-align:center"><span style="display:inline-block;transform:scaleX(0.968)">6</span></span></div>
<div style="position:absolute;left:811.35px;top:498.90px;font:400 26px/1 'Liberation Sans', sans-serif;color:#eceae4;white-space:pre"><span style="display:inline-block;width:16px;text-align:center"><span style="display:inline-block;transform:scaleX(0.968)">0</span></span><span style="display:inline-block;width:16px;text-align:center"><span style="display:inline-block;transform:scaleX(0.968)">0</span></span></div>
<div style="position:absolute;left:870.00px;top:498.90px;font:400 26px/1 'Liberation Sans', sans-serif;color:#eceae4;white-space:pre"><span style="display:inline-block;width:16px;text-align:center">(</span><span style="display:inline-block;width:16px;text-align:center"><span style="display:inline-block;transform:scaleX(0.745)">Ú</span></span><span style="display:inline-block;width:16px;text-align:center;font:400 27px/1 'Liberation Mono', monospace;vertical-align:top;position:relative;top:1.58px">.</span><span style="display:inline-block;width:16px;text-align:center">s</span><span style="display:inline-block;width:16px;text-align:center;font:400 27px/1 'Liberation Mono', monospace;vertical-align:top;position:relative;top:1.58px">&amp;</span><span style="display:inline-block;width:16px;text-align:center">š</span><span style="display:inline-block;width:16px;text-align:center;font:400 27px/1 'Liberation Mono', monospace;vertical-align:top;position:relative;top:1.58px">^</span><span style="display:inline-block;width:16px;text-align:center"><span style="display:inline-block;transform:scaleX(0.807)">B</span></span><span style="display:inline-block;width:16px;text-align:center">(</span><span style="display:inline-block;width:16px;text-align:center"><span style="display:inline-block;transform:scaleX(0.745)">Ú</span></span><span style="display:inline-block;width:16px;text-align:center;font:400 27px/1 'Liberation Mono', monospace;vertical-align:top;position:relative;top:1.58px">.</span><span style="display:inline-block;width:16px;text-align:center"><span style="display:inline-block;transform:scaleX(0.807)">P</span></span><span style="display:inline-block;width:16px;text-align:center"><span style="display:inline-block;transform:scaleX(0.807)">K</span></span><span style="display:inline-block;width:16px;text-align:center;font:400 27px/1 'Liberation Mono', monospace;vertical-align:top;position:relative;top:1.58px">.</span><span style="display:inline-block;width:16px;text-align:center;font:400 27px/1 'Liberation Mono', monospace;vertical-align:top;position:relative;top:1.58px">.</span><span style="display:inline-block;width:16px;text-align:center;font:400 27px/1 'Liberation Mono', monospace;vertical-align:top;position:relative;top:1.58px">.</span></div>
<div style="position:absolute;left:6.20px;top:526.90px;font:400 26px/1 'Liberation Sans', sans-serif;color:#c3bfb5;white-space:pre"><span style="display:inline-block;width:16px;text-align:center"><span style="display:inline-block;transform:scaleX(0.968)">0</span></span><span style="display:inline-block;width:16px;text-align:center"><span style="display:inline-block;transform:scaleX(0.968)">0</span></span><span style="display:inline-block;width:16px;text-align:center"><span style="display:inline-block;transform:scaleX(0.807)">A</span></span><span style="display:inline-block;width:16px;text-align:center"><span style="display:inline-block;transform:scaleX(0.968)">0</span></span><span style="display:inline-block;width:16px;text-align:center"><span style="display:inline-block;transform:scaleX(0.968)">h</span></span></div>
<div style="position:absolute;left:111.30px;top:528.90px;font:400 26px/1 'Liberation Sans', sans-serif;color:#eceae4;white-space:pre"><span style="display:inline-block;width:16px;text-align:center"><span style="display:inline-block;transform:scaleX(0.968)">0</span></span><span style="display:inline-block;width:16px;text-align:center"><span style="display:inline-block;transform:scaleX(0.968)">0</span></span></div>
<div style="position:absolute;left:157.97px;top:528.90px;font:400 26px/1 'Liberation Sans', sans-serif;color:#eceae4;white-space:pre"><span style="display:inline-block;width:16px;text-align:center"><span style="display:inline-block;transform:scaleX(0.968)">0</span></span><span style="display:inline-block;width:16px;text-align:center"><span style="display:inline-block;transform:scaleX(0.968)">0</span></span></div>
<div style="position:absolute;left:204.64px;top:528.90px;font:400 26px/1 'Liberation Sans', sans-serif;color:#eceae4;white-space:pre"><span style="display:inline-block;width:16px;text-align:center"><span style="display:inline-block;transform:scaleX(0.968)">0</span></span><span style="display:inline-block;width:16px;text-align:center"><span style="display:inline-block;transform:scaleX(0.968)">0</span></span></div>
<div style="position:absolute;left:251.31px;top:528.90px;font:400 26px/1 'Liberation Sans', sans-serif;color:#eceae4;white-space:pre"><span style="display:inline-block;width:16px;text-align:center"><span style="display:inline-block;transform:scaleX(0.968)">0</span></span><span style="display:inline-block;width:16px;text-align:center"><span style="display:inline-block;transform:scaleX(0.968)">1</span></span></div>
<div style="position:absolute;left:297.98px;top:528.90px;font:400 26px/1 'Liberation Sans', sans-serif;color:#eceae4;white-space:pre"><span style="display:inline-block;width:16px;text-align:center"><span style="display:inline-block;transform:scaleX(0.968)">0</span></span><span style="display:inline-block;width:16px;text-align:center"><span style="display:inline-block;transform:scaleX(0.968)">0</span></span></div>
<div style="position:absolute;left:344.65px;top:528.90px;font:400 26px/1 'Liberation Sans', sans-serif;color:#eceae4;white-space:pre"><span style="display:inline-block;width:16px;text-align:center"><span style="display:inline-block;transform:scaleX(0.968)">0</span></span><span style="display:inline-block;width:16px;text-align:center"><span style="display:inline-block;transform:scaleX(0.968)">1</span></span></div>
<div style="position:absolute;left:391.32px;top:528.90px;font:400 26px/1 'Liberation Sans', sans-serif;color:#eceae4;white-space:pre"><span style="display:inline-block;width:16px;text-align:center"><span style="display:inline-block;transform:scaleX(0.968)">0</span></span><span style="display:inline-block;width:16px;text-align:center"><span style="display:inline-block;transform:scaleX(0.968)">0</span></span></div>
<div style="position:absolute;left:437.99px;top:528.90px;font:400 26px/1 'Liberation Sans', sans-serif;color:#eceae4;white-space:pre"><span style="display:inline-block;width:16px;text-align:center"><span style="display:inline-block;transform:scaleX(0.968)">5</span></span><span style="display:inline-block;width:16px;text-align:center"><span style="display:inline-block;transform:scaleX(0.807)">A</span></span></div>
<div style="position:absolute;left:484.66px;top:528.90px;font:400 26px/1 'Liberation Sans', sans-serif;color:#eceae4;white-space:pre"><span style="display:inline-block;width:16px;text-align:center"><span style="display:inline-block;transform:scaleX(0.968)">0</span></span><span style="display:inline-block;width:16px;text-align:center"><span style="display:inline-block;transform:scaleX(0.968)">0</span></span></div>
<div style="position:absolute;left:531.33px;top:528.90px;font:400 26px/1 'Liberation Sans', sans-serif;color:#eceae4;white-space:pre"><span style="display:inline-block;width:16px;text-align:center"><span style="display:inline-block;transform:scaleX(0.968)">0</span></span><span style="display:inline-block;width:16px;text-align:center"><span style="display:inline-block;transform:scaleX(0.968)">0</span></span></div>
<div style="position:absolute;left:578.00px;top:528.90px;font:400 26px/1 'Liberation Sans', sans-serif;color:#eceae4;white-space:pre"><span style="display:inline-block;width:16px;text-align:center"><span style="display:inline-block;transform:scaleX(0.968)">0</span></span><span style="display:inline-block;width:16px;text-align:center"><span style="display:inline-block;transform:scaleX(0.968)">0</span></span></div>
<div style="position:absolute;left:624.67px;top:528.90px;font:400 26px/1 'Liberation Sans', sans-serif;color:#eceae4;white-space:pre"><span style="display:inline-block;width:16px;text-align:center"><span style="display:inline-block;transform:scaleX(0.968)">4</span></span><span style="display:inline-block;width:16px;text-align:center"><span style="display:inline-block;transform:scaleX(0.968)">1</span></span></div>
<div style="position:absolute;left:671.34px;top:528.90px;font:400 26px/1 'Liberation Sans', sans-serif;color:#eceae4;white-space:pre"><span style="display:inline-block;width:16px;text-align:center"><span style="display:inline-block;transform:scaleX(0.968)">0</span></span><span style="display:inline-block;width:16px;text-align:center"><span style="display:inline-block;transform:scaleX(0.968)">0</span></span></div>
<div style="position:absolute;left:718.01px;top:528.90px;font:400 26px/1 'Liberation Sans', sans-serif;color:#eceae4;white-space:pre"><span style="display:inline-block;width:16px;text-align:center"><span style="display:inline-block;transform:scaleX(0.968)">0</span></span><span style="display:inline-block;width:16px;text-align:center"><span style="display:inline-block;transform:scaleX(0.968)">0</span></span></div>
<div style="position:absolute;left:764.68px;top:528.90px;font:400 26px/1 'Liberation Sans', sans-serif;color:#eceae4;white-space:pre"><span style="display:inline-block;width:16px;text-align:center"><span style="display:inline-block;transform:scaleX(0.968)">0</span></span><span style="display:inline-block;width:16px;text-align:center"><span style="display:inline-block;transform:scaleX(0.968)">0</span></span></div>
<div style="position:absolute;left:811.35px;top:528.90px;font:400 26px/1 'Liberation Sans', sans-serif;color:#eceae4;white-space:pre"><span style="display:inline-block;width:16px;text-align:center"><span style="display:inline-block;transform:scaleX(0.968)">0</span></span><span style="display:inline-block;width:16px;text-align:center"><span style="display:inline-block;transform:scaleX(0.968)">0</span></span></div>
<div style="position:absolute;left:870.00px;top:528.90px;font:400 26px/1 'Liberation Sans', sans-serif;color:#eceae4;white-space:pre"><span style="display:inline-block;width:16px;text-align:center;font:400 27px/1 'Liberation Mono', monospace;vertical-align:top;position:relative;top:1.58px">.</span><span style="display:inline-block;width:16px;text-align:center;font:400 27px/1 'Liberation Mono', monospace;vertical-align:top;position:relative;top:1.58px">.</span><span style="display:inline-block;width:16px;text-align:center;font:400 27px/1 'Liberation Mono', monospace;vertical-align:top;position:relative;top:1.58px">.</span><span style="display:inline-block;width:16px;text-align:center;font:400 27px/1 'Liberation Mono', monospace;vertical-align:top;position:relative;top:1.58px">.</span><span style="display:inline-block;width:16px;text-align:center;font:400 27px/1 'Liberation Mono', monospace;vertical-align:top;position:relative;top:1.58px">.</span><span style="display:inline-block;width:16px;text-align:center;font:400 27px/1 'Liberation Mono', monospace;vertical-align:top;position:relative;top:1.58px">.</span><span style="display:inline-block;width:16px;text-align:center;font:400 27px/1 'Liberation Mono', monospace;vertical-align:top;position:relative;top:1.58px">.</span><span style="display:inline-block;width:16px;text-align:center"><span style="display:inline-block;transform:scaleX(0.881)">Z</span></span><span style="display:inline-block;width:16px;text-align:center;font:400 27px/1 'Liberation Mono', monospace;vertical-align:top;position:relative;top:1.58px">.</span><span style="display:inline-block;width:16px;text-align:center;font:400 27px/1 'Liberation Mono', monospace;vertical-align:top;position:relative;top:1.58px">.</span><span style="display:inline-block;width:16px;text-align:center;font:400 27px/1 'Liberation Mono', monospace;vertical-align:top;position:relative;top:1.58px">.</span><span style="display:inline-block;width:16px;text-align:center"><span style="display:inline-block;transform:scaleX(0.807)">A</span></span><span style="display:inline-block;width:16px;text-align:center;font:400 27px/1 'Liberation Mono', monospace;vertical-align:top;position:relative;top:1.58px">.</span><span style="display:inline-block;width:16px;text-align:center;font:400 27px/1 'Liberation Mono', monospace;vertical-align:top;position:relative;top:1.58px">.</span><span style="display:inline-block;width:16px;text-align:center;font:400 27px/1 'Liberation Mono', monospace;vertical-align:top;position:relative;top:1.58px">.</span><span style="display:inline-block;width:16px;text-align:center;font:400 27px/1 'Liberation Mono', monospace;vertical-align:top;position:relative;top:1.58px">.</span></div>
<div style="position:absolute;left:6.20px;top:556.90px;font:400 26px/1 'Liberation Sans', sans-serif;color:#c3bfb5;white-space:pre"><span style="display:inline-block;width:16px;text-align:center"><span style="display:inline-block;transform:scaleX(0.968)">0</span></span><span style="display:inline-block;width:16px;text-align:center"><span style="display:inline-block;transform:scaleX(0.968)">0</span></span><span style="display:inline-block;width:16px;text-align:center"><span style="display:inline-block;transform:scaleX(0.807)">B</span></span><span style="display:inline-block;width:16px;text-align:center"><span style="display:inline-block;transform:scaleX(0.968)">0</span></span><span style="display:inline-block;width:16px;text-align:center"><span style="display:inline-block;transform:scaleX(0.968)">h</span></span></div>
<div style="position:absolute;left:111.30px;top:558.90px;font:400 26px/1 'Liberation Sans', sans-serif;color:#eceae4;white-space:pre"><span style="display:inline-block;width:16px;text-align:center"><span style="display:inline-block;transform:scaleX(0.968)">0</span></span><span style="display:inline-block;width:16px;text-align:center"><span style="display:inline-block;transform:scaleX(0.968)">0</span></span></div>
<div style="position:absolute;left:870.00px;top:558.90px;font:400 26px/1 'Liberation Sans', sans-serif;color:#eceae4;white-space:pre"><span style="display:inline-block;width:16px;text-align:center;font:400 27px/1 'Liberation Mono', monospace;vertical-align:top;position:relative;top:1.58px">.</span></div>
<div style="position:absolute;left:2px;top:585px;width:1558px;height:5px;background:#3b3a36;"></div>
<div style="position:absolute;left:1463px;top:197px;width:1px;height:388px;background:#303033;"></div>
<div style="position:absolute;left:1464px;top:197px;width:4px;height:4px;background:#666666;"></div>
<div style="position:absolute;left:1468px;top:197px;width:4px;height:4px;background:#656565;"></div>
<div style="position:absolute;left:1472px;top:197px;width:4px;height:4px;background:#555555;"></div>
<div style="position:absolute;left:1476px;top:197px;width:4px;height:4px;background:#555555;"></div>
<div style="position:absolute;left:1480px;top:197px;width:4px;height:4px;background:#595959;"></div>
<div style="position:absolute;left:1484px;top:197px;width:4px;height:4px;background:#545454;"></div>
<div style="position:absolute;left:1488px;top:197px;width:4px;height:4px;background:#545454;"></div>
<div style="position:absolute;left:1492px;top:197px;width:4px;height:4px;background:#545454;"></div>
<div style="position:absolute;left:1496px;top:197px;width:4px;height:4px;background:#565656;"></div>
<div style="position:absolute;left:1500px;top:197px;width:4px;height:4px;background:#545454;"></div>
<div style="position:absolute;left:1504px;top:197px;width:4px;height:4px;background:#8c8c8c;"></div>
<div style="position:absolute;left:1508px;top:197px;width:4px;height:4px;background:#7a7a7a;"></div>
<div style="position:absolute;left:1512px;top:197px;width:4px;height:4px;background:#737373;"></div>
<div style="position:absolute;left:1516px;top:197px;width:4px;height:4px;background:#686868;"></div>
<div style="position:absolute;left:1520px;top:197px;width:4px;height:4px;background:#6b6b6b;"></div>
<div style="position:absolute;left:1524px;top:197px;width:4px;height:4px;background:#565656;"></div>
<div style="position:absolute;left:1464px;top:201px;width:4px;height:4px;background:#606060;"></div>
<div style="position:absolute;left:1468px;top:201px;width:4px;height:4px;background:#717171;"></div>
<div style="position:absolute;left:1472px;top:201px;width:4px;height:4px;background:#5a5a5a;"></div>
<div style="position:absolute;left:1476px;top:201px;width:4px;height:4px;background:#545454;"></div>
<div style="position:absolute;left:1480px;top:201px;width:4px;height:4px;background:#545454;"></div>
<div style="position:absolute;left:1484px;top:201px;width:4px;height:4px;background:#545454;"></div>
<div style="position:absolute;left:1488px;top:201px;width:4px;height:4px;background:#5b5b5b;"></div>
<div style="position:absolute;left:1492px;top:201px;width:4px;height:4px;background:#545454;"></div>
<div style="position:absolute;left:1496px;top:201px;width:4px;height:4px;background:#545454;"></div>
<div style="position:absolute;left:1500px;top:201px;width:4px;height:4px;background:#545454;"></div>
<div style="position:absolute;left:1504px;top:201px;width:4px;height:4px;background:#565656;"></div>
<div style="position:absolute;left:1508px;top:201px;width:4px;height:4px;background:#545454;"></div>
<div style="position:absolute;left:1512px;top:201px;width:4px;height:4px;background:#545454;"></div>
<div style="position:absolute;left:1516px;top:201px;width:4px;height:4px;background:#545454;"></div>
<div style="position:absolute;left:1520px;top:201px;width:4px;height:4px;background:#6c6c6c;"></div>
<div style="position:absolute;left:1524px;top:201px;width:4px;height:4px;background:#6d6d6d;"></div>
<div style="position:absolute;left:1464px;top:205px;width:4px;height:4px;background:#6a6a6a;"></div>
<div style="position:absolute;left:1468px;top:205px;width:4px;height:4px;background:#6c6c6c;"></div>
<div style="position:absolute;left:1472px;top:205px;width:4px;height:4px;background:#5f5f5f;"></div>
<div style="position:absolute;left:1476px;top:205px;width:4px;height:4px;background:#6f6f6f;"></div>
<div style="position:absolute;left:1480px;top:205px;width:4px;height:4px;background:#707070;"></div>
<div style="position:absolute;left:1484px;top:205px;width:4px;height:4px;background:#6f6f6f;"></div>
<div style="position:absolute;left:1488px;top:205px;width:4px;height:4px;background:#43423e;"></div>
<div style="position:absolute;left:1492px;top:205px;width:4px;height:4px;background:#575650;"></div>
<div style="position:absolute;left:1496px;top:205px;width:4px;height:4px;background:#43423e;"></div>
<div style="position:absolute;left:1500px;top:205px;width:4px;height:4px;background:#44433e;"></div>
<div style="position:absolute;left:1504px;top:205px;width:4px;height:4px;background:#53524c;"></div>
<div style="position:absolute;left:1508px;top:205px;width:4px;height:4px;background:#3f3e3a;"></div>
<div style="position:absolute;left:1512px;top:205px;width:4px;height:4px;background:#3e3d39;"></div>
<div style="position:absolute;left:1516px;top:205px;width:4px;height:4px;background:#5e5c56;"></div>
<div style="position:absolute;left:1520px;top:205px;width:4px;height:4px;background:#575650;"></div>
<div style="position:absolute;left:1524px;top:205px;width:4px;height:4px;background:#44433e;"></div>
<div style="position:absolute;left:1464px;top:209px;width:4px;height:4px;background:#525252;"></div>
<div style="position:absolute;left:1468px;top:209px;width:4px;height:4px;background:#575757;"></div>
<div style="position:absolute;left:1472px;top:209px;width:4px;height:4px;background:#5c5c5c;"></div>
<div style="position:absolute;left:1476px;top:209px;width:4px;height:4px;background:#3b3b3b;"></div>
<div style="position:absolute;left:1480px;top:209px;width:4px;height:4px;background:#505050;"></div>
<div style="position:absolute;left:1484px;top:209px;width:4px;height:4px;background:#505050;"></div>
<div style="position:absolute;left:1488px;top:209px;width:4px;height:4px;background:#636363;"></div>
<div style="position:absolute;left:1492px;top:209px;width:4px;height:4px;background:#606060;"></div>
<div style="position:absolute;left:1496px;top:209px;width:4px;height:4px;background:#484848;"></div>
<div style="position:absolute;left:1500px;top:209px;width:4px;height:4px;background:#434343;"></div>
<div style="position:absolute;left:1504px;top:209px;width:4px;height:4px;background:#4d4d4d;"></div>
<div style="position:absolute;left:1508px;top:209px;width:4px;height:4px;background:#424242;"></div>
<div style="position:absolute;left:1512px;top:209px;width:4px;height:4px;background:#474747;"></div>
<div style="position:absolute;left:1516px;top:209px;width:4px;height:4px;background:#424242;"></div>
<div style="position:absolute;left:1520px;top:209px;width:4px;height:4px;background:#565656;"></div>
<div style="position:absolute;left:1524px;top:209px;width:4px;height:4px;background:#3c3c3c;"></div>
<div style="position:absolute;left:1464px;top:213px;width:4px;height:4px;background:#303030;"></div>
<div style="position:absolute;left:1468px;top:213px;width:4px;height:4px;background:#706371;"></div>
<div style="position:absolute;left:1472px;top:213px;width:4px;height:4px;background:#6f6270;"></div>
<div style="position:absolute;left:1476px;top:213px;width:4px;height:4px;background:#5c515d;"></div>
<div style="position:absolute;left:1480px;top:213px;width:4px;height:4px;background:#5d515d;"></div>
<div style="position:absolute;left:1484px;top:213px;width:4px;height:4px;background:#615562;"></div>
<div style="position:absolute;left:1488px;top:213px;width:4px;height:4px;background:#5c515d;"></div>
<div style="position:absolute;left:1492px;top:213px;width:4px;height:4px;background:#615562;"></div>
<div style="position:absolute;left:1496px;top:213px;width:4px;height:4px;background:#5c515d;"></div>
<div style="position:absolute;left:1500px;top:213px;width:4px;height:4px;background:#2c62a2;"></div>
<div style="position:absolute;left:1504px;top:213px;width:4px;height:4px;background:#2c62a2;"></div>
<div style="position:absolute;left:1508px;top:213px;width:4px;height:4px;background:#5e535f;"></div>
<div style="position:absolute;left:1512px;top:213px;width:4px;height:4px;background:#5c515d;"></div>
<div style="position:absolute;left:1516px;top:213px;width:4px;height:4px;background:#9a879b;"></div>
<div style="position:absolute;left:1520px;top:213px;width:4px;height:4px;background:#867687;"></div>
<div style="position:absolute;left:1524px;top:213px;width:4px;height:4px;background:#7e6f7f;"></div>
<div style="position:absolute;left:1464px;top:217px;width:4px;height:4px;background:#726473;"></div>
<div style="position:absolute;left:1468px;top:217px;width:4px;height:4px;background:#756776;"></div>
<div style="position:absolute;left:1472px;top:217px;width:4px;height:4px;background:#5e535f;"></div>
<div style="position:absolute;left:1476px;top:217px;width:4px;height:4px;background:#6a5d6b;"></div>
<div style="position:absolute;left:1480px;top:217px;width:4px;height:4px;background:#7c6d7d;"></div>
<div style="position:absolute;left:1484px;top:217px;width:4px;height:4px;background:#635764;"></div>
<div style="position:absolute;left:1488px;top:217px;width:4px;height:4px;background:#5c515d;"></div>
<div style="position:absolute;left:1492px;top:217px;width:4px;height:4px;background:#5c515d;"></div>
<div style="position:absolute;left:1496px;top:217px;width:4px;height:4px;background:#5c515d;"></div>
<div style="position:absolute;left:1500px;top:217px;width:4px;height:4px;background:#645865;"></div>
<div style="position:absolute;left:1504px;top:217px;width:4px;height:4px;background:#5c515d;"></div>
<div style="position:absolute;left:1508px;top:217px;width:4px;height:4px;background:#5c515d;"></div>
<div style="position:absolute;left:1512px;top:217px;width:4px;height:4px;background:#5c515d;"></div>
<div style="position:absolute;left:1516px;top:217px;width:4px;height:4px;background:#5e535f;"></div>
<div style="position:absolute;left:1520px;top:217px;width:4px;height:4px;background:#5c515d;"></div>
<div style="position:absolute;left:1524px;top:217px;width:4px;height:4px;background:#655966;"></div>
<div style="position:absolute;left:1464px;top:221px;width:4px;height:4px;background:#5c515d;"></div>
<div style="position:absolute;left:1468px;top:221px;width:4px;height:4px;background:#5c515d;"></div>
<div style="position:absolute;left:1472px;top:221px;width:4px;height:4px;background:#5c515d;"></div>
<div style="position:absolute;left:1476px;top:221px;width:4px;height:4px;background:#5c515d;"></div>
<div style="position:absolute;left:1480px;top:221px;width:4px;height:4px;background:#5c515d;"></div>
<div style="position:absolute;left:1484px;top:221px;width:4px;height:4px;background:#5c515d;"></div>
<div style="position:absolute;left:1488px;top:221px;width:4px;height:4px;background:#5c515d;"></div>
<div style="position:absolute;left:1492px;top:221px;width:4px;height:4px;background:#645865;"></div>
<div style="position:absolute;left:1496px;top:221px;width:4px;height:4px;background:#5c515d;"></div>
<div style="position:absolute;left:1500px;top:221px;width:4px;height:4px;background:#5c515d;"></div>
<div style="position:absolute;left:1504px;top:221px;width:4px;height:4px;background:#5c515d;"></div>
<div style="position:absolute;left:1508px;top:221px;width:4px;height:4px;background:#5c515d;"></div>
<div style="position:absolute;left:1512px;top:221px;width:4px;height:4px;background:#5c515d;"></div>
<div style="position:absolute;left:1516px;top:221px;width:4px;height:4px;background:#5c515d;"></div>
<div style="position:absolute;left:1520px;top:221px;width:4px;height:4px;background:#5c515d;"></div>
<div style="position:absolute;left:1524px;top:221px;width:4px;height:4px;background:#766877;"></div>
<div style="position:absolute;left:1464px;top:225px;width:4px;height:4px;background:#786978;"></div>
<div style="position:absolute;left:1468px;top:225px;width:4px;height:4px;background:#756776;"></div>
<div style="position:absolute;left:1472px;top:225px;width:4px;height:4px;background:#766877;"></div>
<div style="position:absolute;left:1476px;top:225px;width:4px;height:4px;background:#685b69;"></div>
<div style="position:absolute;left:1480px;top:225px;width:4px;height:4px;background:#7a6b7b;"></div>
<div style="position:absolute;left:1484px;top:225px;width:4px;height:4px;background:#7b6c7c;"></div>
<div style="position:absolute;left:1488px;top:225px;width:4px;height:4px;background:#7a6b7b;"></div>
<div style="position:absolute;left:1492px;top:225px;width:4px;height:4px;background:#5f535f;"></div>
<div style="position:absolute;left:1496px;top:225px;width:4px;height:4px;background:#5c515d;"></div>
<div style="position:absolute;left:1500px;top:225px;width:4px;height:4px;background:#645865;"></div>
<div style="position:absolute;left:1504px;top:225px;width:4px;height:4px;background:#5c515d;"></div>
<div style="position:absolute;left:1508px;top:225px;width:4px;height:4px;background:#5c515d;"></div>
<div style="position:absolute;left:1512px;top:225px;width:4px;height:4px;background:#5c515d;"></div>
<div style="position:absolute;left:1516px;top:225px;width:4px;height:4px;background:#5c515d;"></div>
<div style="position:absolute;left:1520px;top:225px;width:4px;height:4px;background:#5c515d;"></div>
<div style="position:absolute;left:1524px;top:225px;width:4px;height:4px;background:#5c515d;"></div>
<div style="position:absolute;left:1464px;top:229px;width:4px;height:4px;background:#5c515d;"></div>
<div style="position:absolute;left:1468px;top:229px;width:4px;height:4px;background:#625663;"></div>
<div style="position:absolute;left:1472px;top:229px;width:4px;height:4px;background:#5c515d;"></div>
<div style="position:absolute;left:1476px;top:229px;width:4px;height:4px;background:#716372;"></div>
<div style="position:absolute;left:1480px;top:229px;width:4px;height:4px;background:#6d606e;"></div>
<div style="position:absolute;left:1484px;top:229px;width:4px;height:4px;background:#5f5460;"></div>
<div style="position:absolute;left:1488px;top:229px;width:4px;height:4px;background:#756776;"></div>
<div style="position:absolute;left:1492px;top:229px;width:4px;height:4px;background:#6d606e;"></div>
<div style="position:absolute;left:1496px;top:229px;width:4px;height:4px;background:#665a67;"></div>
<div style="position:absolute;left:1500px;top:229px;width:4px;height:4px;background:#948295;"></div>
<div style="position:absolute;left:1504px;top:229px;width:4px;height:4px;background:#5c515d;"></div>
<div style="position:absolute;left:1508px;top:229px;width:4px;height:4px;background:#746675;"></div>
<div style="position:absolute;left:1512px;top:229px;width:4px;height:4px;background:#776878;"></div>
<div style="position:absolute;left:1516px;top:229px;width:4px;height:4px;background:#5f5460;"></div>
<div style="position:absolute;left:1520px;top:229px;width:4px;height:4px;background:#756776;"></div>
<div style="position:absolute;left:1524px;top:229px;width:4px;height:4px;background:#6d606e;"></div>
<div style="position:absolute;left:1464px;top:233px;width:4px;height:4px;background:#665a67;"></div>
<div style="position:absolute;left:1468px;top:233px;width:4px;height:4px;background:#948295;"></div>
<div style="position:absolute;left:1472px;top:233px;width:4px;height:4px;background:#5c515d;"></div>
<div style="position:absolute;left:1476px;top:233px;width:4px;height:4px;background:#796b7a;"></div>
<div style="position:absolute;left:1480px;top:233px;width:4px;height:4px;background:#665967;"></div>
<div style="position:absolute;left:1484px;top:233px;width:4px;height:4px;background:#837384;"></div>
<div style="position:absolute;left:1488px;top:233px;width:4px;height:4px;background:#746675;"></div>
<div style="position:absolute;left:1492px;top:233px;width:4px;height:4px;background:#6d606e;"></div>
<div style="position:absolute;left:1496px;top:233px;width:4px;height:4px;background:#665a67;"></div>
<div style="position:absolute;left:1500px;top:233px;width:4px;height:4px;background:#948295;"></div>
<div style="position:absolute;left:1504px;top:233px;width:4px;height:4px;background:#5c515d;"></div>
<div style="position:absolute;left:1508px;top:233px;width:4px;height:4px;background:#727238;"></div>
<div style="position:absolute;left:1512px;top:233px;width:4px;height:4px;background:#717138;"></div>
<div style="position:absolute;left:1516px;top:233px;width:4px;height:4px;background:#5f5f2f;"></div>
<div style="position:absolute;left:1520px;top:233px;width:4px;height:4px;background:#5f5f2f;"></div>
<div style="position:absolute;left:1524px;top:233px;width:4px;height:4px;background:#5d5d2e;"></div>
<div style="position:absolute;left:1464px;top:237px;width:4px;height:4px;background:#5d5d2e;"></div>
<div style="position:absolute;left:1468px;top:237px;width:4px;height:4px;background:#5d5d2e;"></div>
<div style="position:absolute;left:1472px;top:237px;width:4px;height:4px;background:#5d5d2e;"></div>
<div style="position:absolute;left:1476px;top:237px;width:4px;height:4px;background:#5e5e2e;"></div>
<div style="position:absolute;left:1480px;top:237px;width:4px;height:4px;background:#5d5d2e;"></div>
<div style="position:absolute;left:1484px;top:237px;width:4px;height:4px;background:#5e5e2e;"></div>
<div style="position:absolute;left:1488px;top:237px;width:4px;height:4px;background:#5d5d2e;"></div>
<div style="position:absolute;left:1492px;top:237px;width:4px;height:4px;background:#75753a;"></div>
<div style="position:absolute;left:1496px;top:237px;width:4px;height:4px;background:#5d5d2e;"></div>
<div style="position:absolute;left:1500px;top:237px;width:4px;height:4px;background:#5d5d2e;"></div>
<div style="position:absolute;left:1504px;top:237px;width:4px;height:4px;background:#5d5d2e;"></div>
<div style="position:absolute;left:1508px;top:237px;width:4px;height:4px;background:#6e6e36;"></div>
<div style="position:absolute;left:1512px;top:237px;width:4px;height:4px;background:#5d5d2e;"></div>
<div style="position:absolute;left:1516px;top:237px;width:4px;height:4px;background:#5d5d2e;"></div>
<div style="position:absolute;left:1520px;top:237px;width:4px;height:4px;background:#5d5d2e;"></div>
<div style="position:absolute;left:1524px;top:237px;width:4px;height:4px;background:#5d5d2e;"></div>
<div style="position:absolute;left:1464px;top:241px;width:4px;height:4px;background:#5d5d2e;"></div>
<div style="position:absolute;left:1534px;top:203px;width:26px;height:2px;background:#565656;"></div>
<svg style="position:absolute;left:1540px;top:212px;" width="14" height="13" viewBox="0 0 14 13"><polygon points="0.00,8.84 7.00,0.00 14.00,8.84 14.00,13.00 10.40,13.00 7.00,5.20 3.60,13.00 0.00,13.00" fill="#6e6e6e"/></svg>
<div style="position:absolute;left:1536px;top:231px;width:22px;height:164px;background:#525252;"></div>
<svg style="position:absolute;left:1540px;top:566px;" width="14" height="13" viewBox="0 0 14 13"><polygon points="0.00,4.16 7.00,13.00 14.00,4.16 14.00,0.00 10.40,0.00 7.00,7.80 3.60,0.00 0.00,0.00" fill="#6e6e6e"/></svg>
<div id="t14" style="position:absolute;left:1574.00px;top:153.50px;font:400 28px/1 'Liberation Sans', sans-serif;color:#e6e3dc;white-space:pre;letter-spacing:-0.283px;">Workspace</div>
<svg style="position:absolute;left:1908px;top:166px;" width="17" height="10" viewBox="0 0 17 10"><path d="M0.5,0.5 H16.5 L8.5,9 Z" fill="#d8d8d8"/></svg>
<svg style="position:absolute;left:1938px;top:162px;" width="20" height="16" viewBox="0 0 20 16"><path d="M2,1.5 L18,14.5 M18,1.5 L2,14.5" stroke="#d8d8d8" stroke-width="3"/></svg>
<div style="position:absolute;left:1566px;top:191px;width:372px;height:46px;background:#515151;border-radius:6px 6px 0 0;"></div>
<div style="position:absolute;left:1764px;top:191px;width:2px;height:46px;background:#3b3a36;"></div>
<div id="t15" style="position:absolute;left:1644.33px;top:203.60px;font:700 24px/1 'Liberation Sans', sans-serif;color:#dcdcdc;white-space:pre;">File</div>
<div id="t16" style="position:absolute;left:1825.99px;top:203.60px;font:700 24px/1 'Liberation Sans', sans-serif;color:#dcdcdc;white-space:pre;">Path</div>
<div style="position:absolute;left:1940px;top:191px;width:26px;height:382px;background:#272622;"></div>
<svg style="position:absolute;left:1946px;top:199px;" width="14" height="13" viewBox="0 0 14 13"><polygon points="0.00,8.84 7.00,0.00 14.00,8.84 14.00,13.00 10.40,13.00 7.00,5.20 3.60,13.00 0.00,13.00" fill="#6e6e6e"/></svg>
<div style="position:absolute;left:1942px;top:217px;width:22px;height:131px;background:#525252;"></div>
<svg style="position:absolute;left:1946px;top:553px;" width="14" height="13" viewBox="0 0 14 13"><polygon points="0.00,4.16 7.00,13.00 14.00,4.16 14.00,0.00 10.40,0.00 7.00,7.80 3.60,0.00 0.00,0.00" fill="#6e6e6e"/></svg>
<svg style="position:absolute;left:1571px;top:244px;" width="32" height="28" viewBox="0 0 32 28"><path d="M2,2 H10 L13,5 H22 V10 H8 L2,24 Z" fill="#f7e49a" stroke="#d4b45a" stroke-width="1.8"/><path d="M2,25 L8,11 H30 L23,25 Z" fill="#f7e49a" stroke="#d4b45a" stroke-width="1.8"/></svg>
<div id="t17" style="position:absolute;left:1610.00px;top:243.60px;font:700 24px/1 'Liberation Sans', sans-serif;color:#dcdcdc;white-space:pre;letter-spacing:0.330px;">Open Files</div>
<svg style="position:absolute;left:1594px;top:272px;" width="28" height="32" viewBox="0 0 28 32"><path d="M5,3 C9,1 20,1 26,3 L24,8 C25,15 25,22 26,27 C20,30 9,30 3,28 C5,22 5,14 4,8 Z" fill="#f7e49a" stroke="#d4b45a" stroke-width="1.8"/><circle cx="9" cy="11" r="2.2" fill="#d9b862"/><circle cx="19" cy="15" r="2.6" fill="#d9b862"/><circle cx="19" cy="23" r="2.6" fill="#d9b862"/><rect x="11" y="15" width="2" height="2" fill="#d9b862"/><rect x="11" y="20" width="2" height="2" fill="#d9b862"/><rect x="14" y="22" width="2" height="2" fill="#d9b862"/></svg>
<div id="t18" style="position:absolute;left:1631.00px;top:275.60px;font:400 24px/1 'Liberation Sans', sans-serif;color:#e6e3dc;white-space:pre;letter-spacing:0.914px;">Drive.bt</div>
<div id="t19" style="position:absolute;left:1766.00px;top:275.60px;font:400 24px/1 'Liberation Sans', sans-serif;color:#9c9993;white-space:pre;letter-spacing:0.443px;">C:\Use...itory\</div>
<div id="t20" style="position:absolute;left:1631.00px;top:307.60px;font:400 24px/1 'Liberation Sans', sans-serif;color:#e6e3dc;white-space:pre;letter-spacing:0.263px;">Misc_3.zip</div>
<div id="t21" style="position:absolute;left:1766.00px;top:307.60px;font:400 24px/1 'Liberation Sans', sans-serif;color:#9c9993;white-space:pre;letter-spacing:0.461px;">C:\Use...e57f6\</div>
<svg style="position:absolute;left:1594px;top:336px;" width="28" height="32" viewBox="0 0 28 32"><path d="M5,3 C9,1 20,1 26,3 L24,8 C25,15 25,22 26,27 C20,30 9,30 3,28 C5,22 5,14 4,8 Z" fill="#f7e49a" stroke="#d4b45a" stroke-width="1.8"/><circle cx="9" cy="11" r="2.2" fill="#d9b862"/><circle cx="19" cy="15" r="2.6" fill="#d9b862"/><circle cx="19" cy="23" r="2.6" fill="#d9b862"/><rect x="11" y="15" width="2" height="2" fill="#d9b862"/><rect x="11" y="20" width="2" height="2" fill="#d9b862"/><rect x="14" y="22" width="2" height="2" fill="#d9b862"/></svg>
<div id="t22" style="position:absolute;left:1631.00px;top:339.60px;font:400 24px/1 'Liberation Sans', sans-serif;color:#e6e3dc;white-space:pre;letter-spacing:0.549px;">PNG.bt</div>
<div id="t23" style="position:absolute;left:1766.00px;top:339.60px;font:400 24px/1 'Liberation Sans', sans-serif;color:#9c9993;white-space:pre;letter-spacing:0.443px;">C:\Use...itory\</div>
<svg style="position:absolute;left:1571px;top:374px;" width="32" height="28" viewBox="0 0 32 28"><path d="M2,2 H10 L13,5 H22 V10 H8 L2,24 Z" fill="#f7e49a" stroke="#d4b45a" stroke-width="1.8"/><path d="M2,25 L8,11 H30 L23,25 Z" fill="#f7e49a" stroke="#d4b45a" stroke-width="1.8"/></svg>
<svg style="position:absolute;left:1582px;top:366px;" width="26" height="24" viewBox="0 0 26 24"><g fill="#f7e49a" stroke="#d4b45a" stroke-width="1.4"><rect x="1" y="1" width="7" height="7"/><rect x="1" y="8" width="7" height="7"/><rect x="8" y="8" width="7" height="7"/><rect x="1" y="15" width="7" height="7"/><rect x="8" y="15" width="7" height="7"/><rect x="15" y="15" width="7" height="7"/></g></svg>
<div id="t24" style="position:absolute;left:1610.00px;top:371.60px;font:700 24px/1 'Liberation Sans', sans-serif;color:#dcdcdc;white-space:pre;letter-spacing:0.661px;">Project</div>
<svg style="position:absolute;left:1571px;top:406px;" width="32" height="28" viewBox="0 0 32 28"><path d="M2,2 H10 L13,5 H22 V10 H8 L2,24 Z" fill="#f7e49a" stroke="#d4b45a" stroke-width="1.8"/><path d="M2,25 L8,11 H30 L23,25 Z" fill="#f7e49a" stroke="#d4b45a" stroke-width="1.8"/></svg>
<svg style="position:absolute;left:1580px;top:397px;" width="26" height="22" viewBox="0 0 26 22"><path d="M13,1 L16,8 L24.5,8.3 L18,13.5 L20.5,21 L13,16.8 L5.5,21 L8,13.5 L1.5,8.3 L10,8 Z" fill="#6fa8e8" stroke="#4f86c8" stroke-width="1" stroke-linejoin="round"/></svg>
<div id="t25" style="position:absolute;left:1610.00px;top:403.60px;font:700 24px/1 'Liberation Sans', sans-serif;color:#dcdcdc;white-space:pre;letter-spacing:0.305px;">Favorite Files</div>
<svg style="position:absolute;left:1571px;top:438px;" width="32" height="28" viewBox="0 0 32 28"><path d="M2,2 H10 L13,5 H22 V10 H8 L2,24 Z" fill="#f7e49a" stroke="#d4b45a" stroke-width="1.8"/><path d="M2,25 L8,11 H30 L23,25 Z" fill="#f7e49a" stroke="#d4b45a" stroke-width="1.8"/></svg>
<svg style="position:absolute;left:1579px;top:429px;" width="27" height="24" viewBox="0 0 27 24"><circle cx="13.5" cy="12" r="10.5" fill="#f4f6fb" stroke="#9aa8c0" stroke-width="1.8"/><path d="M14,13 L19,8" stroke="#5a6a88" stroke-width="1.6"/><circle cx="13.5" cy="5" r="1" fill="#5a6a88"/><circle cx="7" cy="12.5" r="1" fill="#5a6a88"/><circle cx="20" cy="12.5" r="1" fill="#5a6a88"/><circle cx="13.5" cy="13" r="1.3" fill="#5a6a88"/></svg>
<div id="t26" style="position:absolute;left:1610.00px;top:435.60px;font:700 24px/1 'Liberation Sans', sans-serif;color:#dcdcdc;white-space:pre;letter-spacing:0.134px;">Recent Files</div>
<div id="t27" style="position:absolute;left:1631.00px;top:467.60px;font:400 24px/1 'Liberation Sans', sans-serif;color:#e6e3dc;white-space:pre;letter-spacing:0.543px;">Misc....jpg</div>
<div id="t28" style="position:absolute;left:1766.00px;top:467.60px;font:400 24px/1 'Liberation Sans', sans-serif;color:#9c9993;white-space:pre;letter-spacing:0.528px;">C:\Use...ed74f\</div>
<svg style="position:absolute;left:1630px;top:500px;" width="23" height="24" viewBox="0 0 23 24"><path d="M1,7 H7 M4,1 V21 Q4,22 2.5,21 M1,15 L7,12 M11,1.5 H20 V8 H11 Z M11,4.8 H20 M10,10 H21 V20 Q21,22 19,21.5 M11,10 L9,14 M13,13 V19 H18 M16.5,13 L12,20" fill="none" stroke="#e6e3dc" stroke-width="1.9" stroke-linecap="square"/></svg>
<svg style="position:absolute;left:1652px;top:500px;" width="23" height="24" viewBox="0 0 23 24"><path d="M2,3 H20 M1,11 H21 M7,3 V11 Q7,19 2,22 M15,3 V22" fill="none" stroke="#e6e3dc" stroke-width="1.9" stroke-linecap="square"/></svg>
<svg style="position:absolute;left:1677px;top:500px;" width="23" height="24" viewBox="0 0 23 24"><path d="M6,1 L2,9 M4.5,6 V22 M8,9 L21,6 M12,2 V18 Q12,21 15,21 H21 V18 M16,1 V16 M21,6 V11 Q21,13 19,13" fill="none" stroke="#e6e3dc" stroke-width="1.9" stroke-linecap="square"/></svg>
<div id="t29" style="position:absolute;left:1702.00px;top:499.60px;font:400 24px/1 'Liberation Sans', sans-serif;color:#e6e3dc;white-space:pre;letter-spacing:0.385px;">...zip</div>
<div id="t30" style="position:absolute;left:1766.00px;top:499.60px;font:400 24px/1 'Liberation Sans', sans-serif;color:#9c9993;white-space:pre;letter-spacing:-0.002px;">C:\U...</div>
<svg style="position:absolute;left:1836px;top:500px;" width="23" height="24" viewBox="0 0 23 24"><path d="M5,1 L3,5 M2,5 H9 V21 H2 Z M2,13 H9 M13,1 L11,7 M12,6 H21 V19 Q21,22 18,21 M14,11 L16,14" fill="none" stroke="#9c9993" stroke-width="1.9" stroke-linecap="square"/></svg>
<svg style="position:absolute;left:1861px;top:500px;" width="23" height="24" viewBox="0 0 23 24"><path d="M1,2 H21 M10,2 L8,6 M2,6 H20 V22 H2 Z M8,6 V22 M14,6 V22 M8,11 H14 M8,16 H14" fill="none" stroke="#9c9993" stroke-width="1.9" stroke-linecap="square"/></svg>
<svg style="position:absolute;left:1886px;top:500px;" width="23" height="24" viewBox="0 0 23 24"><path d="M5,1 L2,7 L7,9 L2,15 L8,14 M1,20 L8,18 M15,1 V14 M11,5 L10,11 M19,5 L21,10 M21,13 L9,22" fill="none" stroke="#9c9993" stroke-width="1.9" stroke-linecap="square"/></svg>
<div id="t31" style="position:absolute;left:1911.00px;top:499.60px;font:400 24px/1 'Liberation Sans', sans-serif;color:#9c9993;white-space:pre;">\</div>
<div id="t32" style="position:absolute;left:1631.00px;top:531.60px;font:400 24px/1 'Liberation Sans', sans-serif;color:#e6e3dc;white-space:pre;letter-spacing:0.927px;">attack.jpg</div>
<div id="t33" style="position:absolute;left:1766.00px;top:531.60px;font:400 24px/1 'Liberation Sans', sans-serif;color:#9c9993;white-space:pre;letter-spacing:0.749px;">C:\CTF\temp\</div>
<div id="t34" style="position:absolute;left:1631.00px;top:563.60px;font:400 24px/1 'Liberation Sans', sans-serif;color:#e6e3dc;white-space:pre;letter-spacing:0.228px;">Misc_2.jpg</div>
<div id="t35" style="position:absolute;left:1766.00px;top:563.60px;font:400 24px/1 'Liberation Sans', sans-serif;color:#9c9993;white-space:pre;letter-spacing:0.082px;">C:\Use...6aab8\</div>
<div style="position:absolute;left:1566px;top:573px;width:400px;height:47px;background:#3b3a36;"></div>
<div style="position:absolute;left:1764px;top:573px;width:138px;height:4px;background:#a6a6a6;"></div>
<div style="position:absolute;left:1566px;top:573px;width:198px;height:47px;background:#808080;border-radius:0 0 8px 8px;"></div>
<div style="position:absolute;left:1902px;top:573px;width:64px;height:47px;background:#474747;"></div>
<svg style="position:absolute;left:1581px;top:578px;" width="30" height="34" viewBox="0 0 30 34"><g fill="#f4f6fb" stroke="#9aa8c0" stroke-width="1.5"><path d="M12,2 H22 L27,7 V24 H12 Z"/><path d="M8,6 H18 L23,11 V28 H8 Z"/><path d="M3,10 H13 L18,15 V32 H3 Z"/></g></svg>
<div id="t36" style="position:absolute;left:1620.00px;top:585.60px;font:400 24px/1 'Liberation Sans', sans-serif;color:#000;white-space:pre;letter-spacing:0.821px;">Workspace</div>
<svg style="position:absolute;left:1777px;top:582px;" width="28" height="28" viewBox="0 0 28 28"><g fill="#f7e49a" stroke="#d4b45a" stroke-width="1.6"><rect x="1" y="1" width="8" height="8"/><rect x="1" y="9" width="8" height="8"/><rect x="9" y="9" width="8" height="8"/><rect x="1" y="17" width="8" height="8"/><rect x="9" y="17" width="8" height="8"/><rect x="17" y="17" width="8" height="8"/></g></svg>
<div id="t37" style="position:absolute;left:1820.00px;top:585.60px;font:400 24px/1 'Liberation Sans', sans-serif;color:#e6e3dc;white-space:pre;letter-spacing:0.757px;">Project</div>
<div style="position:absolute;left:1900px;top:573px;width:2px;height:47px;background:#474747;"></div>
<svg style="position:absolute;left:1912px;top:584px;" width="14" height="22" viewBox="0 0 14 22"><path d="M12,2 L3,11 L12,20" fill="none" stroke="#5c5c5c" stroke-width="2.4"/></svg>
<svg style="position:absolute;left:1941px;top:584px;" width="14" height="22" viewBox="0 0 14 22"><path d="M2,2 L11,11 L2,20" fill="none" stroke="#c8c8c8" stroke-width="2.4"/></svg>
<div id="t38" style="position:absolute;left:1574.00px;top:631.20px;font:400 28px/1 'Liberation Sans', sans-serif;color:#e6e3dc;white-space:pre;letter-spacing:0.759px;">Inspector</div>
<svg style="position:absolute;left:1908px;top:645px;" width="17" height="10" viewBox="0 0 17 10"><path d="M0.5,0.5 H16.5 L8.5,9 Z" fill="#d8d8d8"/></svg>
<svg style="position:absolute;left:1938px;top:640px;" width="20" height="16" viewBox="0 0 20 16"><path d="M2,1.5 L18,14.5 M18,1.5 L2,14.5" stroke="#d8d8d8" stroke-width="3"/></svg>
<div style="position:absolute;left:1566px;top:670px;width:372px;height:46px;background:#515151;border-radius:6px 6px 0 0;"></div>
<div style="position:absolute;left:1764px;top:670px;width:2px;height:46px;background:#3b3a36;"></div>
<div id="t39" style="position:absolute;left:1637.88px;top:681.60px;font:700 24px/1 'Liberation Sans', sans-serif;color:#dcdcdc;white-space:pre;">Type</div>
<div id="t40" style="position:absolute;left:1820.64px;top:681.60px;font:700 24px/1 'Liberation Sans', sans-serif;color:#dcdcdc;white-space:pre;">Value</div>
<div style="position:absolute;left:1566px;top:716px;width:372px;height:37px;background:#474747;"></div>
<div style="position:absolute;left:1566px;top:753px;width:372px;height:1px;background:#2c2b28;"></div>
<div style="position:absolute;left:1764px;top:716px;width:1px;height:38px;background:#2c2b28;"></div>
<div id="t41" style="position:absolute;left:1570.00px;top:723.20px;font:400 24px/1 'Liberation Sans', sans-serif;color:#e6e3dc;white-space:pre;letter-spacing:0.661px;">Binary</div>
<div id="t42" style="position:absolute;left:1770.00px;top:723.20px;font:400 24px/1 'Liberation Sans', sans-serif;color:#e6e3dc;white-space:pre;letter-spacing:0.402px;">00001001</div>
<div style="position:absolute;left:1566px;top:791px;width:372px;height:1px;background:#2c2b28;"></div>
<div style="position:absolute;left:1764px;top:754px;width:1px;height:38px;background:#2c2b28;"></div>
<div id="t43" style="position:absolute;left:1570.00px;top:761.20px;font:400 24px/1 'Liberation Sans', sans-serif;color:#e6e3dc;white-space:pre;letter-spacing:0.689px;">Signed Byte</div>
<div id="t44" style="position:absolute;left:1770.00px;top:761.20px;font:400 24px/1 'Liberation Sans', sans-serif;color:#e6e3dc;white-space:pre;">9</div>
<div style="position:absolute;left:1566px;top:829px;width:372px;height:1px;background:#2c2b28;"></div>
<div style="position:absolute;left:1764px;top:792px;width:1px;height:38px;background:#2c2b28;"></div>
<div id="t45" style="position:absolute;left:1570.00px;top:799.20px;font:400 24px/1 'Liberation Sans', sans-serif;color:#e6e3dc;white-space:pre;letter-spacing:0.916px;">Unsigned Byte</div>
<div id="t46" style="position:absolute;left:1770.00px;top:799.20px;font:400 24px/1 'Liberation Sans', sans-serif;color:#e6e3dc;white-space:pre;">9</div>
<div style="position:absolute;left:1566px;top:867px;width:372px;height:1px;background:#2c2b28;"></div>
<div style="position:absolute;left:1764px;top:830px;width:1px;height:38px;background:#2c2b28;"></div>
<div id="t47" style="position:absolute;left:1570.00px;top:837.20px;font:400 24px/1 'Liberation Sans', sans-serif;color:#e6e3dc;white-space:pre;letter-spacing:0.936px;">Signed Short</div>
<div id="t48" style="position:absolute;left:1770.00px;top:837.20px;font:400 24px/1 'Liberation Sans', sans-serif;color:#e6e3dc;white-space:pre;">9</div>
<div style="position:absolute;left:1566px;top:905px;width:372px;height:1px;background:#2c2b28;"></div>
<div style="position:absolute;left:1764px;top:868px;width:1px;height:38px;background:#2c2b28;"></div>
<div id="t49" style="position:absolute;left:1570.00px;top:875.20px;font:400 24px/1 'Liberation Sans', sans-serif;color:#e6e3dc;white-space:pre;letter-spacing:1.040px;">Unsigned Short</div>
<div id="t50" style="position:absolute;left:1770.00px;top:875.20px;font:400 24px/1 'Liberation Sans', sans-serif;color:#e6e3dc;white-space:pre;">9</div>
<div style="position:absolute;left:1566px;top:943px;width:372px;height:1px;background:#2c2b28;"></div>
<div style="position:absolute;left:1764px;top:906px;width:1px;height:38px;background:#2c2b28;"></div>
<div id="t51" style="position:absolute;left:1570.00px;top:913.20px;font:400 24px/1 'Liberation Sans', sans-serif;color:#e6e3dc;white-space:pre;letter-spacing:0.991px;">Signed Int</div>
<div id="t52" style="position:absolute;left:1770.00px;top:913.20px;font:400 24px/1 'Liberation Sans', sans-serif;color:#e6e3dc;white-space:pre;letter-spacing:0.651px;">524297</div>
<div style="position:absolute;left:1566px;top:981px;width:372px;height:1px;background:#2c2b28;"></div>
<div style="position:absolute;left:1764px;top:944px;width:1px;height:38px;background:#2c2b28;"></div>
<div id="t53" style="position:absolute;left:1570.00px;top:951.20px;font:400 24px/1 'Liberation Sans', sans-serif;color:#e6e3dc;white-space:pre;letter-spacing:1.270px;">Unsigned Int</div>
<div id="t54" style="position:absolute;left:1770.00px;top:951.20px;font:400 24px/1 'Liberation Sans', sans-serif;color:#e6e3dc;white-space:pre;letter-spacing:0.651px;">524297</div>
<div style="position:absolute;left:1940px;top:670px;width:26px;height:291px;background:#272622;"></div>
<svg style="position:absolute;left:1946px;top:677px;" width="14" height="13" viewBox="0 0 14 13"><polygon points="0.00,8.84 7.00,0.00 14.00,8.84 14.00,13.00 10.40,13.00 7.00,5.20 3.60,13.00 0.00,13.00" fill="#6e6e6e"/></svg>
<div style="position:absolute;left:1942px;top:695px;width:22px;height:60px;background:#525252;"></div>
<svg style="position:absolute;left:1946px;top:943px;" width="14" height="13" viewBox="0 0 14 13"><polygon points="0.00,4.16 7.00,13.00 14.00,4.16 14.00,0.00 10.40,0.00 7.00,7.80 3.60,0.00 0.00,0.00" fill="#6e6e6e"/></svg>
<div style="position:absolute;left:1566px;top:961px;width:400px;height:49px;background:#3b3a36;"></div>
<div style="position:absolute;left:1744px;top:961px;width:158px;height:4px;background:#a6a6a6;"></div>
<div style="position:absolute;left:1566px;top:961px;width:178px;height:48px;background:#808080;border-radius:0 0 8px 8px;"></div>
<div style="position:absolute;left:1902px;top:961px;width:64px;height:48px;background:#474747;"></div>
<svg style="position:absolute;left:1580px;top:968px;" width="26" height="34" viewBox="0 0 26 34"><path d="M16,1 L3,19 H12 L8,33 L23,13 H14 Z" fill="#f7d86a" stroke="#c9a640" stroke-width="1.4"/></svg>
<div id="t55" style="position:absolute;left:1621.00px;top:974.60px;font:400 24px/1 'Liberation Sans', sans-serif;color:#000;white-space:pre;letter-spacing:0.920px;">Inspector</div>
<svg style="position:absolute;left:1759px;top:970px;" width="28" height="34" viewBox="0 0 28 34"><g fill="#f7e49a" stroke="#d4b45a" stroke-width="1.5"><rect x="2" y="1" width="8" height="8"/><rect x="17" y="13" width="8" height="8"/><rect x="17" y="24" width="8" height="8"/></g><path d="M6,10 V28 H16 M6,17 H16" fill="none" stroke="#6fa0d8" stroke-width="1.3" stroke-dasharray="2,2"/></svg>
<div id="t56" style="position:absolute;left:1799.00px;top:974.60px;font:400 24px/1 'Liberation Sans', sans-serif;color:#e6e3dc;white-space:pre;letter-spacing:0.635px;">Variables</div>
<svg style="position:absolute;left:1912px;top:972px;" width="14" height="22" viewBox="0 0 14 22"><path d="M12,2 L3,11 L12,20" fill="none" stroke="#5c5c5c" stroke-width="2.4"/></svg>
<svg style="position:absolute;left:1941px;top:972px;" width="14" height="22" viewBox="0 0 14 22"><path d="M2,2 L11,11 L2,20" fill="none" stroke="#c8c8c8" stroke-width="2.4"/></svg>
<div id="t57" style="position:absolute;left:8.00px;top:595.20px;font:400 28px/1 'Liberation Sans', sans-serif;color:#e6e3dc;white-space:pre;letter-spacing:0.011px;">Template Results - ZIP.bt</div>
<svg style="position:absolute;left:332px;top:602px;" width="20" height="18" viewBox="0 0 20 18"><path d="M3.6,6.2 A7.3,7.3 0 0 1 15.2,4.6" fill="none" stroke="#dedede" stroke-width="2.3"/><path d="M19,2 V9.5 H11.5 Z" fill="#dedede"/><path d="M16.4,11.8 A7.3,7.3 0 0 1 4.8,13.4" fill="none" stroke="#dedede" stroke-width="2.3"/><path d="M1,8.5 H8.5 L1,16 Z" fill="#dedede"/></svg>
<svg style="position:absolute;left:1532px;top:603px;" width="20" height="17" viewBox="0 0 20 17"><path d="M2.5,2 L17.5,15 M17.5,2 L2.5,15" stroke="#dcdcdc" stroke-width="3.2"/></svg>
<div style="position:absolute;left:2px;top:633px;width:1532px;height:46px;background:#515151;border-radius:6px 0 0 0;"></div>
<div style="position:absolute;left:570px;top:633px;width:2px;height:46px;background:#3b3a36;"></div>
<div style="position:absolute;left:1230px;top:633px;width:2px;height:46px;background:#3b3a36;"></div>
<div style="position:absolute;left:1390px;top:633px;width:2px;height:46px;background:#3b3a36;"></div>
<div id="t58" style="position:absolute;left:253.31px;top:645.60px;font:700 24px/1 'Liberation Sans', sans-serif;color:#dcdcdc;white-space:pre;">Name</div>
<div id="t59" style="position:absolute;left:869.64px;top:645.60px;font:700 24px/1 'Liberation Sans', sans-serif;color:#dcdcdc;white-space:pre;">Value</div>
<div id="t60" style="position:absolute;left:1283.66px;top:645.60px;font:700 24px/1 'Liberation Sans', sans-serif;color:#dcdcdc;white-space:pre;">Start</div>
<div id="t61" style="position:absolute;left:1447.98px;top:645.60px;font:700 24px/1 'Liberation Sans', sans-serif;color:#dcdcdc;white-space:pre;">Size</div>
<div style="position:absolute;left:2px;top:716px;width:1532px;height:1px;background:#2c2b28;"></div>
<div style="position:absolute;left:570px;top:679px;width:1px;height:38px;background:#2c2b28;"></div>
<div style="position:absolute;left:1230px;top:679px;width:1px;height:38px;background:#2c2b28;"></div>
<div style="position:absolute;left:1390px;top:679px;width:1px;height:38px;background:#2c2b28;"></div>
<svg style="position:absolute;left:14.5px;top:690px;" width="14" height="18" viewBox="0 0 14 18"><path d="M2.5,1.5 L11,9 L2.5,16.5" fill="none" stroke="#8a8a8a" stroke-width="2.2"/></svg>
<div id="t62" style="position:absolute;left:41.00px;top:687.10px;font:400 24px/1 'Liberation Sans', sans-serif;color:#e6e3dc;white-space:pre;letter-spacing:0.072px;">struct ZIPFILERECORD record</div>
<div id="t63" style="position:absolute;left:575.50px;top:687.10px;font:400 24px/1 'Liberation Sans', sans-serif;color:#e6e3dc;white-space:pre;letter-spacing:1.162px;">flag.txt</div>
<div id="t64" style="position:absolute;left:1235.00px;top:687.10px;font:400 24px/1 'Liberation Sans', sans-serif;color:#e6e3dc;white-space:pre;letter-spacing:0.935px;">0h</div>
<div id="t65" style="position:absolute;left:1395.00px;top:687.10px;font:400 24px/1 'Liberation Sans', sans-serif;color:#e6e3dc;white-space:pre;letter-spacing:0.934px;">41h</div>
<div style="position:absolute;left:2px;top:754px;width:1532px;height:1px;background:#2c2b28;"></div>
<div style="position:absolute;left:570px;top:717px;width:1px;height:38px;background:#2c2b28;"></div>
<div style="position:absolute;left:1230px;top:717px;width:1px;height:38px;background:#2c2b28;"></div>
<div style="position:absolute;left:1390px;top:717px;width:1px;height:38px;background:#2c2b28;"></div>
<svg style="position:absolute;left:12.5px;top:730px;" width="19" height="13" viewBox="0 0 19 13"><path d="M1.5,2 L9.5,10.5 L17.5,2" fill="none" stroke="#e0e0e0" stroke-width="2.4"/></svg>
<div id="t66" style="position:absolute;left:41.00px;top:725.10px;font:400 24px/1 'Liberation Sans', sans-serif;color:#e6e3dc;white-space:pre;letter-spacing:0.413px;">struct ZIPDIRENTRY dirEntry</div>
<div id="t67" style="position:absolute;left:575.50px;top:725.10px;font:400 24px/1 'Liberation Sans', sans-serif;color:#e6e3dc;white-space:pre;letter-spacing:1.162px;">flag.txt</div>
<div id="t68" style="position:absolute;left:1235.00px;top:725.10px;font:400 24px/1 'Liberation Sans', sans-serif;color:#e6e3dc;white-space:pre;letter-spacing:0.934px;">41h</div>
<div id="t69" style="position:absolute;left:1395.00px;top:725.10px;font:400 24px/1 'Liberation Sans', sans-serif;color:#e6e3dc;white-space:pre;letter-spacing:0.996px;">5Ah</div>
<div style="position:absolute;left:2px;top:792px;width:1532px;height:1px;background:#2c2b28;"></div>
<div style="position:absolute;left:570px;top:755px;width:1px;height:38px;background:#2c2b28;"></div>
<div style="position:absolute;left:1230px;top:755px;width:1px;height:38px;background:#2c2b28;"></div>
<div style="position:absolute;left:1390px;top:755px;width:1px;height:38px;background:#2c2b28;"></div>
<svg style="position:absolute;left:46.5px;top:766px;" width="14" height="18" viewBox="0 0 14 18"><path d="M2.5,1.5 L11,9 L2.5,16.5" fill="none" stroke="#8a8a8a" stroke-width="2.2"/></svg>
<div id="t70" style="position:absolute;left:73.00px;top:763.10px;font:400 24px/1 'Liberation Sans', sans-serif;color:#e6e3dc;white-space:pre;letter-spacing:0.869px;">char deSignature[4]</div>
<div id="t71" style="position:absolute;left:575.50px;top:763.10px;font:400 24px/1 'Liberation Sans', sans-serif;color:#e6e3dc;white-space:pre;">PK</div>
<div id="t72" style="position:absolute;left:1235.00px;top:763.10px;font:400 24px/1 'Liberation Sans', sans-serif;color:#e6e3dc;white-space:pre;letter-spacing:0.934px;">41h</div>
<div id="t73" style="position:absolute;left:1395.00px;top:763.10px;font:400 24px/1 'Liberation Sans', sans-serif;color:#e6e3dc;white-space:pre;letter-spacing:0.935px;">4h</div>
<div style="position:absolute;left:2px;top:830px;width:1532px;height:1px;background:#2c2b28;"></div>
<div style="position:absolute;left:570px;top:793px;width:1px;height:38px;background:#2c2b28;"></div>
<div style="position:absolute;left:1230px;top:793px;width:1px;height:38px;background:#2c2b28;"></div>
<div style="position:absolute;left:1390px;top:793px;width:1px;height:38px;background:#2c2b28;"></div>
<div id="t74" style="position:absolute;left:73.00px;top:801.10px;font:400 24px/1 'Liberation Sans', sans-serif;color:#e6e3dc;white-space:pre;letter-spacing:1.038px;">ushort deVersionMadeBy</div>
<div id="t75" style="position:absolute;left:575.50px;top:801.10px;font:400 24px/1 'Liberation Sans', sans-serif;color:#e6e3dc;white-space:pre;">20</div>
<div id="t76" style="position:absolute;left:1235.00px;top:801.10px;font:400 24px/1 'Liberation Sans', sans-serif;color:#e6e3dc;white-space:pre;letter-spacing:0.934px;">45h</div>
<div id="t77" style="position:absolute;left:1395.00px;top:801.10px;font:400 24px/1 'Liberation Sans', sans-serif;color:#e6e3dc;white-space:pre;letter-spacing:0.935px;">2h</div>
<div style="position:absolute;left:2px;top:868px;width:1532px;height:1px;background:#2c2b28;"></div>
<div style="position:absolute;left:570px;top:831px;width:1px;height:38px;background:#2c2b28;"></div>
<div style="position:absolute;left:1230px;top:831px;width:1px;height:38px;background:#2c2b28;"></div>
<div style="position:absolute;left:1390px;top:831px;width:1px;height:38px;background:#2c2b28;"></div>
<div id="t78" style="position:absolute;left:73.00px;top:839.10px;font:400 24px/1 'Liberation Sans', sans-serif;color:#e6e3dc;white-space:pre;letter-spacing:0.954px;">ushort deVersionToExtract</div>
<div id="t79" style="position:absolute;left:575.50px;top:839.10px;font:400 24px/1 'Liberation Sans', sans-serif;color:#e6e3dc;white-space:pre;">20</div>
<div id="t80" style="position:absolute;left:1235.00px;top:839.10px;font:400 24px/1 'Liberation Sans', sans-serif;color:#e6e3dc;white-space:pre;letter-spacing:0.934px;">47h</div>
<div id="t81" style="position:absolute;left:1395.00px;top:839.10px;font:400 24px/1 'Liberation Sans', sans-serif;color:#e6e3dc;white-space:pre;letter-spacing:0.935px;">2h</div>
<div style="position:absolute;left:2px;top:869px;width:1532px;height:38px;background:#474747;"></div>
<div style="position:absolute;left:2px;top:906px;width:1532px;height:1px;background:#2c2b28;"></div>
<div style="position:absolute;left:570px;top:869px;width:1px;height:38px;background:#2c2b28;"></div>
<div style="position:absolute;left:1230px;top:869px;width:1px;height:38px;background:#2c2b28;"></div>
<div style="position:absolute;left:1390px;top:869px;width:1px;height:38px;background:#2c2b28;"></div>
<div id="t82" style="position:absolute;left:73.00px;top:877.10px;font:400 24px/1 'Liberation Sans', sans-serif;color:#e6e3dc;white-space:pre;letter-spacing:0.731px;">ushort deFlags</div>
<div style="position:absolute;left:572px;top:870px;width:658px;height:37px;background:#1e1e10;"></div>
<div style="position:absolute;left:573px;top:871px;width:657px;height:36px;background:#ffff99;"></div>
<div style="position:absolute;left:576px;top:875px;width:14px;height:32px;background:#2166ae;"></div>
<div style="position:absolute;left:590px;top:875px;width:2px;height:32px;background:#e0a040;"></div>
<div id="t83" style="position:absolute;left:575.50px;top:877.10px;font:400 24px/1 'Liberation Sans', sans-serif;color:#ffffff;white-space:pre;">9</div>
<div id="t84" style="position:absolute;left:1235.00px;top:877.10px;font:400 24px/1 'Liberation Sans', sans-serif;color:#e6e3dc;white-space:pre;letter-spacing:0.934px;">49h</div>
<div id="t85" style="position:absolute;left:1395.00px;top:877.10px;font:400 24px/1 'Liberation Sans', sans-serif;color:#e6e3dc;white-space:pre;letter-spacing:0.935px;">2h</div>
<div style="position:absolute;left:2px;top:944px;width:1532px;height:1px;background:#2c2b28;"></div>
<div style="position:absolute;left:570px;top:907px;width:1px;height:38px;background:#2c2b28;"></div>
<div style="position:absolute;left:1230px;top:907px;width:1px;height:38px;background:#2c2b28;"></div>
<div style="position:absolute;left:1390px;top:907px;width:1px;height:38px;background:#2c2b28;"></div>
<div id="t86" style="position:absolute;left:73.00px;top:915.10px;font:400 24px/1 'Liberation Sans', sans-serif;color:#e6e3dc;white-space:pre;letter-spacing:0.476px;">enum COMPTYPE deCompression</div>
<div id="t87" style="position:absolute;left:575.50px;top:915.10px;font:400 24px/1 'Liberation Sans', sans-serif;color:#e6e3dc;white-space:pre;letter-spacing:-0.350px;">COMP_DEFLATE (8)</div>
<div id="t88" style="position:absolute;left:1235.00px;top:915.10px;font:400 24px/1 'Liberation Sans', sans-serif;color:#e6e3dc;white-space:pre;letter-spacing:0.996px;">4Bh</div>
<div id="t89" style="position:absolute;left:1395.00px;top:915.10px;font:400 24px/1 'Liberation Sans', sans-serif;color:#e6e3dc;white-space:pre;letter-spacing:0.935px;">2h</div>
<div style="position:absolute;left:2px;top:982px;width:1532px;height:1px;background:#2c2b28;"></div>
<div style="position:absolute;left:570px;top:945px;width:1px;height:38px;background:#2c2b28;"></div>
<div style="position:absolute;left:1230px;top:945px;width:1px;height:38px;background:#2c2b28;"></div>
<div style="position:absolute;left:1390px;top:945px;width:1px;height:38px;background:#2c2b28;"></div>
<div id="t90" style="position:absolute;left:73.00px;top:953.10px;font:400 24px/1 'Liberation Sans', sans-serif;color:#e6e3dc;white-space:pre;letter-spacing:0.399px;">DOSTIME deFileTime</div>
<div id="t91" style="position:absolute;left:575.50px;top:953.10px;font:400 24px/1 'Liberation Sans', sans-serif;color:#e6e3dc;white-space:pre;letter-spacing:0.322px;">20:47:36</div>
<div id="t92" style="position:absolute;left:1235.00px;top:953.10px;font:400 24px/1 'Liberation Sans', sans-serif;color:#e6e3dc;white-space:pre;letter-spacing:1.027px;">4Dh</div>
<div id="t93" style="position:absolute;left:1395.00px;top:953.10px;font:400 24px/1 'Liberation Sans', sans-serif;color:#e6e3dc;white-space:pre;letter-spacing:0.935px;">2h</div>
<div style="position:absolute;left:1534px;top:633px;width:26px;height:350px;background:#272622;"></div>
<svg style="position:absolute;left:1540px;top:641px;" width="14" height="12" viewBox="0 0 14 12"><polygon points="0.00,8.16 7.00,0.00 14.00,8.16 14.00,12.00 10.40,12.00 7.00,4.80 3.60,12.00 0.00,12.00" fill="#6e6e6e"/></svg>
<div style="position:absolute;left:1536px;top:659px;width:22px;height:94px;background:#525252;"></div>
<svg style="position:absolute;left:1540px;top:964px;" width="14" height="12" viewBox="0 0 14 12"><polygon points="0.00,3.84 7.00,12.00 14.00,3.84 14.00,0.00 10.40,0.00 7.00,7.20 3.60,0.00 0.00,0.00" fill="#6e6e6e"/></svg>
<div style="position:absolute;left:2px;top:983px;width:1532px;height:26px;background:#272622;"></div>
<svg style="position:absolute;left:7px;top:989px;" width="13" height="14" viewBox="0 0 13 14"><polygon points="8.84,0.00 0.00,7.00 8.84,14.00 13.00,14.00 13.00,10.40 5.72,7.00 13.00,3.60 13.00,0.00" fill="#6e6e6e"/></svg>
<div style="position:absolute;left:28px;top:985px;width:1060px;height:22px;background:#525252;"></div>
<svg style="position:absolute;left:1513px;top:989px;" width="13" height="14" viewBox="0 0 13 14"><polygon points="4.16,0.00 13.00,7.00 4.16,14.00 0.00,14.00 0.00,10.40 7.28,7.00 0.00,3.60 0.00,0.00" fill="#6e6e6e"/></svg>
<div id="t94" style="position:absolute;left:9.50px;top:1019.20px;font:400 28px/1 'Liberation Sans', sans-serif;color:#e6e3dc;white-space:pre;letter-spacing:-0.552px;">Find Results</div>
<svg style="position:absolute;left:1908px;top:1031px;" width="17" height="10" viewBox="0 0 17 10"><path d="M0.5,0.5 H16.5 L8.5,9 Z" fill="#d8d8d8"/></svg>
<svg style="position:absolute;left:1938px;top:1027px;" width="20" height="16" viewBox="0 0 20 16"><path d="M2,1.5 L18,14.5 M18,1.5 L2,14.5" stroke="#d8d8d8" stroke-width="3"/></svg>
<div style="position:absolute;left:9px;top:1064px;width:54px;height:120px;background:transparent;box-sizing:border-box;border:1.6px solid #7a7a7a;"></div>
<div style="position:absolute;left:68px;top:1057px;width:6px;height:176px;background:#2f2e2b;"></div>
<div style="position:absolute;left:74px;top:1057px;width:1398px;height:46px;background:#515151;border-radius:0 6px 0 0;"></div>
<div style="position:absolute;left:272px;top:1057px;width:2px;height:46px;background:#3b3a36;"></div>
<div id="t95" style="position:absolute;left:125.98px;top:1069.60px;font:700 24px/1 'Liberation Sans', sans-serif;color:#dcdcdc;white-space:pre;">Address</div>
<div id="t96" style="position:absolute;left:322.00px;top:1069.60px;font:700 24px/1 'Liberation Sans', sans-serif;color:#dcdcdc;white-space:pre;">Value</div>
<div style="position:absolute;left:74px;top:1140px;width:1398px;height:1.5px;background:#2c2b28;"></div>
<div style="position:absolute;left:74px;top:1178px;width:1398px;height:1.5px;background:#2c2b28;"></div>
<div style="position:absolute;left:74px;top:1216px;width:1398px;height:1.5px;background:#2c2b28;"></div>
<div style="position:absolute;left:271px;top:1103px;width:1.5px;height:130px;background:#2c2b28;"></div>
<div style="position:absolute;left:1471px;top:1103px;width:1.5px;height:130px;background:#2c2b28;"></div>
<div style="position:absolute;left:1940px;top:1058px;width:26px;height:175px;background:#272622;"></div>
<svg style="position:absolute;left:1946px;top:1065px;" width="14" height="12" viewBox="0 0 14 12"><polygon points="0.00,8.16 7.00,0.00 14.00,8.16 14.00,12.00 10.40,12.00 7.00,4.80 3.60,12.00 0.00,12.00" fill="#6e6e6e"/></svg>
<div style="position:absolute;left:1942px;top:1084px;width:22px;height:35px;background:#525252;"></div>
<svg style="position:absolute;left:1946px;top:1215px;" width="14" height="12" viewBox="0 0 14 12"><polygon points="0.00,3.84 7.00,12.00 14.00,3.84 14.00,0.00 10.40,0.00 7.00,7.20 3.60,0.00 0.00,0.00" fill="#6e6e6e"/></svg>
<div style="position:absolute;left:2px;top:1233px;width:1964px;height:4px;background:#a6a6a6;"></div>
<div style="position:absolute;left:156px;top:1233px;width:208px;height:48px;background:#808080;border-radius:0 0 8px 8px;"></div>
<div id="t97" style="position:absolute;left:57.20px;top:1247.10px;font:400 24px/1 'Liberation Sans', sans-serif;color:#e6e3dc;white-space:pre;letter-spacing:1.492px;">Output</div>
<div id="t98" style="position:absolute;left:210.20px;top:1245.10px;font:400 24px/1 'Liberation Sans', sans-serif;color:#000;white-space:pre;letter-spacing:0.301px;">Find Results</div>
<div id="t99" style="position:absolute;left:419.10px;top:1247.10px;font:400 24px/1 'Liberation Sans', sans-serif;color:#e6e3dc;white-space:pre;letter-spacing:0.356px;">Find in Files</div>
<div id="t100" style="position:absolute;left:624.80px;top:1247.10px;font:400 24px/1 'Liberation Sans', sans-serif;color:#e6e3dc;white-space:pre;letter-spacing:0.754px;">Compare</div>
<div id="t101" style="position:absolute;left:800.30px;top:1247.10px;font:400 24px/1 'Liberation Sans', sans-serif;color:#e6e3dc;white-space:pre;letter-spacing:1.182px;">Histogram</div>
<div id="t102" style="position:absolute;left:991.70px;top:1247.10px;font:400 24px/1 'Liberation Sans', sans-serif;color:#e6e3dc;white-space:pre;letter-spacing:0.453px;">Checksum</div>
<div id="t103" style="position:absolute;left:1180.50px;top:1247.10px;font:400 24px/1 'Liberation Sans', sans-serif;color:#e6e3dc;white-space:pre;letter-spacing:-0.100px;">Process</div>
<div id="t104" style="position:absolute;left:1338.30px;top:1247.10px;font:400 24px/1 'Liberation Sans', sans-serif;color:#e6e3dc;white-space:pre;letter-spacing:0.469px;">Disassembler</div>
<div id="t105" style="position:absolute;left:9.50px;top:1292.30px;font:400 24px/1 'Liberation Sans', sans-serif;color:#e6e3dc;white-space:pre;letter-spacing:0.631px;">Selected: 2 bytes (Range: 73 [49h] to 74 [4Ah])</div>
<div id="t106" style="position:absolute;left:1091.50px;top:1292.30px;font:400 24px/1 'Liberation Sans', sans-serif;color:#e6e3dc;white-space:pre;letter-spacing:0.549px;">Start: 73 [49h]</div>
<div id="t107" style="position:absolute;left:1270.50px;top:1292.30px;font:400 24px/1 'Liberation Sans', sans-serif;color:#e6e3dc;white-space:pre;letter-spacing:0.357px;">Sel: 2 [2h]</div>
<div id="t108" style="position:absolute;left:1433.00px;top:1292.30px;font:400 24px/1 'Liberation Sans', sans-serif;color:#e6e3dc;white-space:pre;letter-spacing:-0.009px;">Size: 177</div>
<div id="t109" style="position:absolute;left:1587.50px;top:1292.30px;font:400 24px/1 'Liberation Sans', sans-serif;color:#e6e3dc;white-space:pre;letter-spacing:0.771px;">Hex</div>
<div id="t110" style="position:absolute;left:1649.00px;top:1292.30px;font:400 24px/1 'Liberation Sans', sans-serif;color:#e6e3dc;white-space:pre;letter-spacing:-0.254px;">ANSI</div>
<div id="t111" style="position:absolute;left:1725.00px;top:1292.30px;font:400 24px/1 'Liberation Sans', sans-serif;color:#e6e3dc;white-space:pre;letter-spacing:-0.229px;">LIT</div>
<div id="t112" style="position:absolute;left:1879.00px;top:1292.30px;font:400 24px/1 'Liberation Sans', sans-serif;color:#e6e3dc;white-space:pre;letter-spacing:-0.005px;">INS</div>
<svg style="position:absolute;left:1812px;top:1290px;" width="26" height="28" viewBox="0 0 26 28"><path d="M3,4 H8 V2 H16 V4 H21 V10" fill="none" stroke="#d0d0d0" stroke-width="2"/><path d="M3,4 V26 H10" fill="none" stroke="#d0d0d0" stroke-width="2"/><rect x="11" y="11" width="13" height="15" fill="none" stroke="#d0d0d0" stroke-width="2"/><path d="M14,16 H21 M14,20 H21" stroke="#d0d0d0" stroke-width="1.5"/></svg>
<svg style="position:absolute;left:1950px;top:1311px;" width="13" height="13" viewBox="0 0 13 13"><g fill="#d0d0d0"><rect x="9" y="0" width="3" height="3"/><rect x="5" y="4" width="3" height="3"/><rect x="9" y="4" width="3" height="3"/><rect x="1" y="8" width="3" height="3"/><rect x="5" y="8" width="3" height="3"/><rect x="9" y="8" width="3" height="3"/></g></svg>
<div style="position:absolute;left:8px;top:109px;width:2px;height:20px;background:#8a8a8a;"></div>
<div style="position:absolute;left:458px;top:109px;width:2px;height:20px;background:#8a8a8a;"></div>
<div style="position:absolute;left:752px;top:109px;width:2px;height:20px;background:#8a8a8a;"></div>
<div style="position:absolute;left:992px;top:109px;width:2px;height:20px;background:#8a8a8a;"></div>
<div style="position:absolute;left:1124px;top:109px;width:2px;height:20px;background:#8a8a8a;"></div>
<div style="position:absolute;left:1418px;top:109px;width:2px;height:20px;background:#8a8a8a;"></div>
<div style="position:absolute;left:1874px;top:109px;width:2px;height:20px;background:#8a8a8a;"></div>
<svg style="position:absolute;left:33px;top:100px;" width="29" height="36" viewBox="0 0 29 36"><path d="M2,2 H18 L27,11 V34 H2 Z" fill="#f6f8fd" stroke="#9aa8c0" stroke-width="2"/><path d="M18,2 V11 H27" fill="#dfe5f0" stroke="#9aa8c0" stroke-width="1.6"/></svg>
<svg style="position:absolute;left:79px;top:112px;" width="19" height="14" viewBox="0 0 19 14"><path d="M1.5,2 L9.5,11 L17.5,2" fill="none" stroke="#6a6a6a" stroke-width="2.6"/></svg>
<svg style="position:absolute;left:105px;top:102px;" width="42" height="32" viewBox="0 0 42 32"><path d="M2,2 H10 L13,5 H28 V12 H14 L2,29 Z" fill="#f8e8a2" stroke="#d8b85e" stroke-width="2"/><path d="M2,30 L14,12 H40 L28,30 Z" fill="#f8e8a2" stroke="#d8b85e" stroke-width="2"/></svg>
<svg style="position:absolute;left:157px;top:112px;" width="19" height="14" viewBox="0 0 19 14"><path d="M1.5,2 L9.5,11 L17.5,2" fill="none" stroke="#6a6a6a" stroke-width="2.6"/></svg>
<svg style="position:absolute;left:185px;top:98px;" width="38" height="40" viewBox="0 0 38 40"><rect x="2" y="1.5" width="34" height="35.7" rx="2.72" fill="#6ea6e0" stroke="#4d7fbf" stroke-width="1.5"/><rect x="7.44" y="3.54" width="23.12" height="17.0" fill="#ffffff"/><rect x="9.48" y="24.62" width="19.040000000000003" height="10.88" fill="#e6e6e6"/><rect x="11.520000000000001" y="26.66" width="4.760000000000001" height="6.800000000000001" fill="#6ea6e0"/></svg>
<svg style="position:absolute;left:237px;top:98px;" width="42" height="40" viewBox="0 0 42 40"><path d="M17,2 H32 L39,9 V30 H17 Z" fill="#f6f8fd" stroke="#9aa8c0" stroke-width="2"/><path d="M32,2 V9 H39" fill="#dfe5f0" stroke="#9aa8c0" stroke-width="1.6"/><rect x="1.5" y="10" width="26" height="27.3" rx="2.08" fill="#6ea6e0" stroke="#4d7fbf" stroke-width="1.5"/><rect x="5.66" y="11.56" width="17.68" height="13.0" fill="#ffffff"/><rect x="7.22" y="27.68" width="14.560000000000002" height="8.32" fill="#e6e6e6"/><rect x="8.780000000000001" y="29.24" width="3.6400000000000006" height="5.2" fill="#6ea6e0"/></svg>
<svg style="position:absolute;left:291px;top:99px;" width="42" height="40" viewBox="0 0 42 40"><rect x="14" y="2" width="24" height="25.200000000000003" rx="1.92" fill="#6ea6e0" stroke="#4d7fbf" stroke-width="1.5"/><rect x="17.84" y="3.44" width="16.32" height="12.0" fill="#ffffff"/><rect x="19.28" y="18.32" width="13.440000000000001" height="7.68" fill="#e6e6e6"/><rect x="20.72" y="19.759999999999998" width="3.3600000000000003" height="4.800000000000001" fill="#6ea6e0"/><rect x="8" y="6" width="24" height="25.200000000000003" rx="1.92" fill="#6ea6e0" stroke="#4d7fbf" stroke-width="1.5"/><rect x="11.84" y="7.4399999999999995" width="16.32" height="12.0" fill="#ffffff"/><rect x="13.280000000000001" y="22.32" width="13.440000000000001" height="7.68" fill="#e6e6e6"/><rect x="14.72" y="23.759999999999998" width="3.3600000000000003" height="4.800000000000001" fill="#6ea6e0"/><rect x="1.5" y="11" width="25" height="26.25" rx="2.0" fill="#6ea6e0" stroke="#4d7fbf" stroke-width="1.5"/><rect x="5.5" y="12.5" width="17.0" height="12.5" fill="#ffffff"/><rect x="7.0" y="28.0" width="14.000000000000002" height="8.0" fill="#e6e6e6"/><rect x="8.5" y="29.5" width="3.5000000000000004" height="5.0" fill="#6ea6e0"/></svg>
<svg style="position:absolute;left:351px;top:102px;" width="33" height="32" viewBox="0 0 33 32"><path d="M2,2 H10 L13,5 H30 V30 H2 Z" fill="#f8e8a2" stroke="#d8b85e" stroke-width="2"/><path d="M6,10 H30 V30 H6 Z" fill="#f8e8a2" stroke="#d8b85e" stroke-width="1.6"/></svg>
<svg style="position:absolute;left:399px;top:98px;" width="43" height="42" viewBox="0 0 43 42"><path d="M17,2 H24.2 L26.6,5 H41 V22 H17 Z" fill="#f8e8a2" stroke="#d8b85e" stroke-width="1.6"/><path d="M20,8 H41 V22 H20 Z" fill="#f8e8a2" stroke="#d8b85e" stroke-width="1.4"/><path d="M9,11 H16.2 L18.6,14 H33 V31 H9 Z" fill="#f8e8a2" stroke="#d8b85e" stroke-width="1.6"/><path d="M12,17 H33 V31 H12 Z" fill="#f8e8a2" stroke="#d8b85e" stroke-width="1.4"/><path d="M1.5,20 H8.7 L11.100000000000001,23 H25.5 V40 H1.5 Z" fill="#f8e8a2" stroke="#d8b85e" stroke-width="1.6"/><path d="M4.5,26 H25.5 V40 H4.5 Z" fill="#f8e8a2" stroke="#d8b85e" stroke-width="1.4"/></svg>
<svg style="position:absolute;left:481px;top:98px;" width="33" height="38" viewBox="0 0 33 38"><path d="M13,3 L16,2 L18,20 L10,18 Z" fill="#f6f8fd" stroke="#9aa8c0" stroke-width="1.6"/><path d="M2,9 L4,6 L20,20 L14,23 Z" fill="#f6f8fd" stroke="#9aa8c0" stroke-width="1.6"/><circle cx="10" cy="29" r="5" fill="none" stroke="#7ea6d8" stroke-width="3"/><circle cx="24" cy="22" r="5" fill="none" stroke="#7ea6d8" stroke-width="3"/></svg>
<svg style="position:absolute;left:533px;top:100px;" width="36" height="38" viewBox="0 0 36 38"><path d="M1.5,1.5 H15.5 L21.5,7.5 V27.5 H1.5 Z" fill="#f6f8fd" stroke="#9aa8c0" stroke-width="2"/><path d="M15.5,1.5 V7.5 H21.5" fill="#dfe5f0" stroke="#9aa8c0" stroke-width="1.6"/><path d="M12,9 H27 L34,16 V36 H12 Z" fill="#f6f8fd" stroke="#9aa8c0" stroke-width="2"/><path d="M27,9 V16 H34" fill="#dfe5f0" stroke="#9aa8c0" stroke-width="1.6"/></svg>
<svg style="position:absolute;left:587px;top:98px;" width="39" height="40" viewBox="0 0 39 40"><rect x="2" y="3" width="31" height="34" rx="3" fill="#f8e8a2" stroke="#d8b85e" stroke-width="2"/><path d="M9,9 L12,1.5 H23 L26,9 Z" fill="#f6f8fd" stroke="#9aa8c0" stroke-width="1.6"/><path d="M17,15 H30 L36,21 V38 H17 Z" fill="#f6f8fd" stroke="#9aa8c0" stroke-width="2"/><path d="M30,15 V21 H36" fill="#dfe5f0" stroke="#9aa8c0" stroke-width="1.6"/></svg>
<svg style="position:absolute;left:640px;top:102px;" width="38" height="35" viewBox="0 0 38 35"><path d="M6,8 V20 H18" fill="none" stroke="#8e8c88" stroke-width="4"/><path d="M7,19 C12,8 30,6 32,18 C33,24 29,28 25,32" fill="none" stroke="#8e8c88" stroke-width="5" stroke-linecap="round"/></svg>
<svg style="position:absolute;left:695px;top:102px;" width="38" height="35" viewBox="0 0 38 35"><path d="M32,8 V20 H20" fill="none" stroke="#8e8c88" stroke-width="4"/><path d="M31,19 C26,8 8,6 6,18 C5,24 9,28 13,32" fill="none" stroke="#8e8c88" stroke-width="5" stroke-linecap="round"/></svg>
<svg style="position:absolute;left:771px;top:98px;" width="42" height="42" viewBox="0 0 42 42"><path d="M4,37 L17,24" stroke="#d8b85e" stroke-width="7" stroke-linecap="round"/><path d="M4,37 L17,24" stroke="#f8e8a2" stroke-width="4" stroke-linecap="round"/><circle cx="26" cy="15" r="12.5" fill="#ffffff" stroke="#9aa8c0" stroke-width="2.4"/></svg>
<svg style="position:absolute;left:826px;top:98px;" width="42" height="41" viewBox="0 0 42 41"><text x="17" y="29" font-family="Liberation Sans" font-weight="700" font-size="30" fill="#5d87bb">B</text><text x="0" y="39.5" font-family="Liberation Sans" font-weight="700" font-size="29" fill="#6ea6e0">A</text><path d="M2,5 H10 V1.5 L18,8.5 L10,15.5 V12 H2 Z" fill="#f8e8a2" stroke="#d8b85e" stroke-width="1.6"/></svg>
<svg style="position:absolute;left:879px;top:100px;" width="40" height="40" viewBox="0 0 40 40"><path d="M2,2 H9 L12,5 H25 V12 H12 L2,22 Z" fill="#f8e8a2" stroke="#d8b85e" stroke-width="1.6"/><path d="M2,23 L12,11 H34 L24,23 Z" fill="#f8e8a2" stroke="#d8b85e" stroke-width="1.6"/><path d="M9,36 L19,27" stroke="#d8b85e" stroke-width="6" stroke-linecap="round"/><path d="M9,36 L19,27" stroke="#f8e8a2" stroke-width="3" stroke-linecap="round"/><circle cx="28" cy="19" r="8.5" fill="#ffffff" stroke="#9aa8c0" stroke-width="2"/></svg>
<svg style="position:absolute;left:935px;top:102px;" width="34" height="34" viewBox="0 0 34 34"><path d="M3,13 H17 L11,6 L15,2 L31,17 L15,32 L11,28 L17,21 H3 Z" fill="#6ea6e0" stroke="#4d7fbf" stroke-width="1.5"/></svg>
<svg style="position:absolute;left:1014px;top:98px;" width="42" height="42" viewBox="0 0 42 42"><path d="M8.5,6 H34 C34.5,14 35.5,22 36,29 C29,32 18,34 11,35 C10,25 9,15 8.5,6 Z" fill="#f6f8fd" stroke="#9aa8c0" stroke-width="1.8"/><rect x="6.5" y="1.5" width="31" height="7" rx="3.5" fill="#f6f8fd" stroke="#9aa8c0" stroke-width="1.8"/><path d="M10,8 H34" stroke="#9aa8c0" stroke-width="1.2"/><path d="M1.5,8.5 L16.5,23.5 L1.5,38.5 Z" fill="#6ea6e0" stroke="#4d7fbf" stroke-width="1.6" stroke-linejoin="miter"/><path d="M30,37 H38 L34,41 Z" fill="#6a6a6a"/></svg>
<svg style="position:absolute;left:1068px;top:98px;" width="42" height="42" viewBox="0 0 42 42"><path d="M8.5,6 H34 C34.5,14 35.5,22 36,29 C29,32 18,34 11,35 C10,25 9,15 8.5,6 Z" fill="#f8e8a2" stroke="#d8b85e" stroke-width="1.8"/><rect x="6.5" y="1.5" width="31" height="7" rx="3.5" fill="#f8e8a2" stroke="#d8b85e" stroke-width="1.8"/><path d="M10,8 H34" stroke="#d8b85e" stroke-width="1.2"/><circle cx="15" cy="15" r="2.6" fill="#d9b862"/><circle cx="27" cy="21" r="2.6" fill="#d9b862"/><circle cx="29" cy="29" r="2.6" fill="#d9b862"/><rect x="17" y="21" width="2" height="2" fill="#d9b862"/><rect x="21" y="21" width="2" height="2" fill="#d9b862"/><rect x="19" y="25" width="2" height="2" fill="#d9b862"/><rect x="19" y="29" width="2" height="2" fill="#d9b862"/><rect x="23" y="29" width="2" height="2" fill="#d9b862"/><path d="M1.5,8.5 L16.5,23.5 L1.5,38.5 Z" fill="#6ea6e0" stroke="#4d7fbf" stroke-width="1.6" stroke-linejoin="miter"/><path d="M30,37 H38 L34,41 Z" fill="#6a6a6a"/></svg>
<div style="position:absolute;left:1138px;top:95px;width:54px;height:49px;background:#2e2d29;box-sizing:border-box;border:2px solid #6b6b67;"></div>
<svg style="position:absolute;left:1145px;top:110px;" width="44" height="20" viewBox="0 0 44 20"><text x="1" y="16.5" font-family="Liberation Sans" font-size="19.5" fill="#5e8ec4" textLength="41" lengthAdjust="spacing">Hex</text></svg>
<svg style="position:absolute;left:1199px;top:100px;" width="38" height="38" viewBox="0 0 38 38"><g fill="#b0aca5"><rect x="1" y="2" width="32" height="3"/><rect x="1" y="7" width="20" height="3"/><rect x="1" y="12" width="14" height="3"/><rect x="1" y="17" width="16" height="3"/><rect x="1" y="21" width="32" height="3"/><rect x="1" y="26" width="20" height="3"/><rect x="1" y="31" width="14" height="3"/><rect x="1" y="35" width="16" height="3"/></g><path d="M36,3 V14 H24 M28,9 L23,14 L28,19" fill="none" stroke="#b0aca5" stroke-width="4"/><path d="M36,22 V33 H24 M28,28 L23,33 L28,38" fill="none" stroke="#b0aca5" stroke-width="4"/></svg>
<svg style="position:absolute;left:1257px;top:103px;" width="27" height="32" viewBox="0 0 27 32"><path d="M11,2 A8,8 0 0 0 11,18 Z" fill="#b0aca5"/><rect x="10" y="2" width="16" height="2.5" fill="#b0aca5"/><rect x="10" y="2" width="2.5" height="29" fill="#b0aca5"/><rect x="18" y="2" width="2.5" height="29" fill="#b0aca5"/></svg>
<svg style="position:absolute;left:1308px;top:103px;" width="34" height="34" viewBox="0 0 34 34"><rect x="0" y="1" width="15" height="33" fill="#1e3555"/><rect x="17" y="1" width="15" height="33" fill="#1e3555"/><rect x="1" y="2.0" width="14" height="3" fill="#8fb4de"/><rect x="18" y="2.0" width="14" height="3" fill="#8fb4de"/><rect x="1" y="6.6" width="14" height="3" fill="#8fb4de"/><rect x="18" y="6.6" width="14" height="3" fill="#8fb4de"/><rect x="1" y="11.2" width="14" height="3" fill="#8fb4de"/><rect x="18" y="11.2" width="14" height="3" fill="#8fb4de"/><rect x="1" y="15.799999999999999" width="14" height="3" fill="#8fb4de"/><rect x="18" y="15.799999999999999" width="14" height="3" fill="#8fb4de"/><rect x="1" y="20.4" width="14" height="3" fill="#8fb4de"/><rect x="18" y="20.4" width="14" height="3" fill="#8fb4de"/><rect x="1" y="25.0" width="14" height="3" fill="#8fb4de"/><rect x="18" y="25.0" width="14" height="3" fill="#8fb4de"/><rect x="1" y="29.599999999999998" width="14" height="3" fill="#8fb4de"/><rect x="18" y="29.599999999999998" width="14" height="3" fill="#8fb4de"/></svg>
<svg style="position:absolute;left:1359px;top:98px;" width="42" height="42" viewBox="0 0 42 42"><path d="M2,2 H11 L26,17 L16,28 L2,14 Z" fill="#f6f8fd" stroke="#9aa8c0" stroke-width="1.8"/><path d="M16,28 L26,17 L36,30 H22 Z" fill="#f8e8a2" stroke="#d8b85e" stroke-width="1.8"/><path d="M33,37 H41 L37,41 Z" fill="#6a6a6a"/></svg>
<svg style="position:absolute;left:1441px;top:100px;" width="32" height="38" viewBox="0 0 32 38"><rect x="1.5" y="1.5" width="29" height="35" rx="3" fill="#6ea6e0" stroke="#4d7fbf" stroke-width="1.5"/><rect x="5" y="5" width="22" height="6" fill="#ffffff"/><rect x="5" y="14" width="4" height="4" fill="#f7eeb0"/><rect x="11" y="14" width="4" height="4" fill="#f7eeb0"/><rect x="17" y="14" width="4" height="4" fill="#f7eeb0"/><rect x="23" y="14" width="4" height="4" fill="#f7eeb0"/><rect x="5" y="20" width="4" height="4" fill="#f7eeb0"/><rect x="11" y="20" width="4" height="4" fill="#f7eeb0"/><rect x="17" y="20" width="4" height="4" fill="#f7eeb0"/><rect x="23" y="20" width="4" height="4" fill="#f7eeb0"/><rect x="5" y="26" width="4" height="4" fill="#f7eeb0"/><rect x="11" y="26" width="4" height="4" fill="#f7eeb0"/><rect x="17" y="26" width="4" height="4" fill="#f7eeb0"/><rect x="23" y="26" width="4" height="4" fill="#f7eeb0"/><rect x="5" y="32" width="4" height="4" fill="#f7eeb0"/><rect x="11" y="32" width="4" height="4" fill="#f7eeb0"/><rect x="17" y="32" width="4" height="4" fill="#f7eeb0"/><rect x="23" y="32" width="4" height="4" fill="#f7eeb0"/></svg>
<svg style="position:absolute;left:1495px;top:98px;" width="35" height="42" viewBox="0 0 35 42"><path d="M10,1.5 H25 L32,8.5 V28.5 H10 Z" fill="#f6f8fd" stroke="#9aa8c0" stroke-width="2"/><path d="M25,1.5 V8.5 H32" fill="#dfe5f0" stroke="#9aa8c0" stroke-width="1.6"/><path d="M1.5,8 H16.5 L23.5,15 V35 H1.5 Z" fill="#f6f8fd" stroke="#9aa8c0" stroke-width="2"/><path d="M16.5,8 V15 H23.5" fill="#dfe5f0" stroke="#9aa8c0" stroke-width="1.6"/><path d="M9,18 C9,11 21,11 21,18 C21,23 15,23 15,28" fill="none" stroke="#d8b85e" stroke-width="6"/><path d="M9,18 C9,11 21,11 21,18 C21,23 15,23 15,28" fill="none" stroke="#f8e8a2" stroke-width="3"/><circle cx="15" cy="35" r="3" fill="#f8e8a2" stroke="#d8b85e" stroke-width="1.4"/></svg>
<svg style="position:absolute;left:1546px;top:100px;" width="40" height="38" viewBox="0 0 40 38"><path d="M2,7 H22 V1 L37,12 L22,23 V17 H2 Z" fill="#f8e8a2" stroke="#d8b85e" stroke-width="1.6"/><path d="M38,21 H18 V15 L3,26 L18,37 V31 H38 Z" fill="#6ea6e0" stroke="#4d7fbf" stroke-width="1.6"/></svg>
<svg style="position:absolute;left:1599px;top:98px;" width="43" height="42" viewBox="0 0 43 42"><defs><clipPath id="hcl"><path d="M8,37 L11,30 L14,22 L17,12 L20,20 L22,17 L25,25 L28,24 L31,30 L34,27 L37,33 L39,37 Z"/></clipPath></defs><path d="M3,1 V39 H41" fill="none" stroke="#d8b85e" stroke-width="5"/><path d="M3,1 V39 H41" fill="none" stroke="#f8e8a2" stroke-width="2.4"/><g clip-path="url(#hcl)"><rect x="0" y="0" width="43" height="42" fill="#6ea6e0"/><rect x="9.5" y="0" width="1.2" height="42" fill="#3d6ea8"/><rect x="12.5" y="0" width="1.2" height="42" fill="#3d6ea8"/><rect x="15.5" y="0" width="1.2" height="42" fill="#3d6ea8"/><rect x="18.5" y="0" width="1.2" height="42" fill="#3d6ea8"/><rect x="21.5" y="0" width="1.2" height="42" fill="#3d6ea8"/><rect x="24.5" y="0" width="1.2" height="42" fill="#3d6ea8"/><rect x="27.5" y="0" width="1.2" height="42" fill="#3d6ea8"/><rect x="30.5" y="0" width="1.2" height="42" fill="#3d6ea8"/><rect x="33.5" y="0" width="1.2" height="42" fill="#3d6ea8"/><rect x="36.5" y="0" width="1.2" height="42" fill="#3d6ea8"/></g></svg>
<svg style="position:absolute;left:1654px;top:100px;" width="40" height="40" viewBox="0 0 40 40"><path d="M8,2 V16 M1,9 H15" stroke="#6ea6e0" stroke-width="4.5"/><path d="M5,34 L30,8" stroke="#6ea6e0" stroke-width="4.5"/><path d="M22,28 H37" stroke="#6ea6e0" stroke-width="4.5"/><path d="M31,37 H39 L35,40 Z" fill="#6a6a6a"/></svg>
<svg style="position:absolute;left:1709px;top:100px;" width="40" height="38" viewBox="0 0 40 38"><path d="M13,4 H36 V12 H26 L21,19 L26,26 H36 V34 H13 V27 L18,19 L13,11 Z" fill="#6ea6e0" stroke="#4d7fbf" stroke-width="1.4"/><path d="M3,17 L11,25 L27,8" fill="none" stroke="#d8b85e" stroke-width="7"/><path d="M3,17 L11,25 L27,8" fill="none" stroke="#f8e8a2" stroke-width="3.5"/></svg>
<svg style="position:absolute;left:1760px;top:105px;" width="44" height="24" viewBox="0 0 44 24"><text x="2" y="20" font-family="Liberation Sans" font-weight="700" font-size="24" fill="#5b86b9" textLength="40" lengthAdjust="spacingAndGlyphs">mov</text></svg>
<svg style="position:absolute;left:1814px;top:98px;" width="45" height="42" viewBox="0 0 45 42"><text x="17" y="17" font-family="Liberation Sans" font-size="17" fill="#6ea6e0">10</text><text x="1" y="40" font-family="Liberation Sans" font-size="17" fill="#6ea6e0">16</text><path d="M15,3 C6,4 5,10 6,14 H1 L9,21 L16,14 H11 C11,10 12,8 15,8 Z" fill="#6ea6e0"/><path d="M23,40 C34,39 36,32 35,26 H40 L32,19 L25,26 H30 C30,31 28,34 23,34 Z" fill="#6ea6e0"/></svg>
<svg style="position:absolute;left:1905px;top:109px;" width="21" height="20" viewBox="0 0 21 20"><rect x="1" y="1" width="7" height="18" fill="#a8a6a0"/><rect x="12" y="1" width="7" height="18" fill="#a8a6a0"/></svg>
<svg style="position:absolute;left:17px;top:1245px;" width="27" height="24" viewBox="0 0 27 24"><g fill="#6ea6e0"><rect x="1" y="2" width="20" height="2.6"/><rect x="1" y="7" width="12" height="2.6"/><rect x="15" y="7" width="10" height="2.6"/><rect x="1" y="12" width="17" height="2.6"/><rect x="1" y="17" width="24" height="2.6"/><rect x="1" y="21" width="20" height="2.6"/></g></svg>
<svg style="position:absolute;left:166px;top:1240px;" width="36" height="34" viewBox="0 0 36 34"><path d="M17,19 L30,31" stroke="#d8b85e" stroke-width="6" stroke-linecap="round"/><path d="M17,19 L30,31" stroke="#f8e8a2" stroke-width="3" stroke-linecap="round"/><circle cx="15" cy="11" r="9" fill="#ffffff" stroke="#9aa8c0" stroke-width="2"/><g fill="#6ea6e0"><rect x="1" y="24" width="7" height="2"/><rect x="1" y="28" width="7" height="2"/><rect x="1" y="32" width="7" height="2"/></g></svg>
<svg style="position:absolute;left:374px;top:1240px;" width="36" height="34" viewBox="0 0 36 34"><path d="M14,2 H20 L22,4 H33 V10 H22 L14,18 Z" fill="#f8e8a2" stroke="#d8b85e" stroke-width="1.4"/><path d="M14,19 L22,9 H36 L28,19 Z" fill="#f8e8a2" stroke="#d8b85e" stroke-width="1.4"/><path d="M17,19 L30,31" stroke="#d8b85e" stroke-width="6" stroke-linecap="round"/><path d="M17,19 L30,31" stroke="#f8e8a2" stroke-width="3" stroke-linecap="round"/><circle cx="15" cy="11" r="9" fill="#ffffff" stroke="#9aa8c0" stroke-width="2"/><g fill="#6ea6e0"><rect x="1" y="24" width="7" height="2"/><rect x="1" y="28" width="7" height="2"/><rect x="1" y="32" width="7" height="2"/></g></svg>
<svg style="position:absolute;left:581px;top:1240px;" width="34" height="34" viewBox="0 0 34 34"><path d="M12,10 C12,3 27,3 27,10 C27,16 20,16 20,22" fill="none" stroke="#d8b85e" stroke-width="7"/><path d="M12,10 C12,3 27,3 27,10 C27,16 20,16 20,22" fill="none" stroke="#f7d86a" stroke-width="3.6"/><circle cx="20" cy="28" r="3.5" fill="#f7d86a" stroke="#d8b85e" stroke-width="1.4"/><g fill="#6ea6e0"><rect x="1" y="24" width="7" height="2"/><rect x="1" y="28" width="7" height="2"/><rect x="1" y="32" width="7" height="2"/></g></svg>
<svg style="position:absolute;left:757px;top:1240px;" width="36" height="34" viewBox="0 0 36 34"><path d="M4,2 V28 H35" fill="none" stroke="#d8b85e" stroke-width="4"/><path d="M4,2 V28 H35" fill="none" stroke="#f8e8a2" stroke-width="2"/><path d="M8,26 L12,14 L15,5 L19,15 L23,18 L27,20 L31,26 Z" fill="#6ea6e0"/><g fill="#6ea6e0"><rect x="1" y="30" width="7" height="2"/></g></svg>
<svg style="position:absolute;left:946px;top:1240px;" width="36" height="34" viewBox="0 0 36 34"><path d="M12,3 H33 V10 H24 L19,16 L24,22 H33 V29 H12 V23 L16,16 L12,10 Z" fill="#6ea6e0" stroke="#4d7fbf" stroke-width="1.2"/><g fill="#6ea6e0"><rect x="1" y="24" width="7" height="2"/><rect x="1" y="28" width="7" height="2"/><rect x="1" y="32" width="7" height="2"/></g></svg>
<svg style="position:absolute;left:1136px;top:1240px;" width="38" height="34" viewBox="0 0 38 34"><path d="M6,16 L12,8 H36 L30,16 Z" fill="#6ea6e0" stroke="#4d7fbf" stroke-width="1.2"/><path d="M6,16 V22 H30 V16" fill="#4d7fbf"/><rect x="8" y="22" width="2" height="7" fill="#6ea6e0"/><rect x="13" y="22" width="2" height="7" fill="#6ea6e0"/><rect x="18" y="22" width="2" height="7" fill="#6ea6e0"/><rect x="23" y="22" width="2" height="7" fill="#6ea6e0"/><rect x="28" y="22" width="2" height="7" fill="#6ea6e0"/><g fill="#6ea6e0"><rect x="1" y="24" width="7" height="2"/><rect x="1" y="28" width="7" height="2"/><rect x="1" y="32" width="7" height="2"/></g></svg>
<svg style="position:absolute;left:1293px;top:1244px;" width="38" height="30" viewBox="0 0 38 30"><text x="1" y="17" font-family="Liberation Sans" font-weight="700" font-size="16" fill="#6ea6e0">mov</text><g fill="#6ea6e0"><rect x="1" y="20" width="7" height="2"/><rect x="1" y="24" width="7" height="2"/><rect x="1" y="28" width="7" height="2"/></g></svg>
</body></html>
